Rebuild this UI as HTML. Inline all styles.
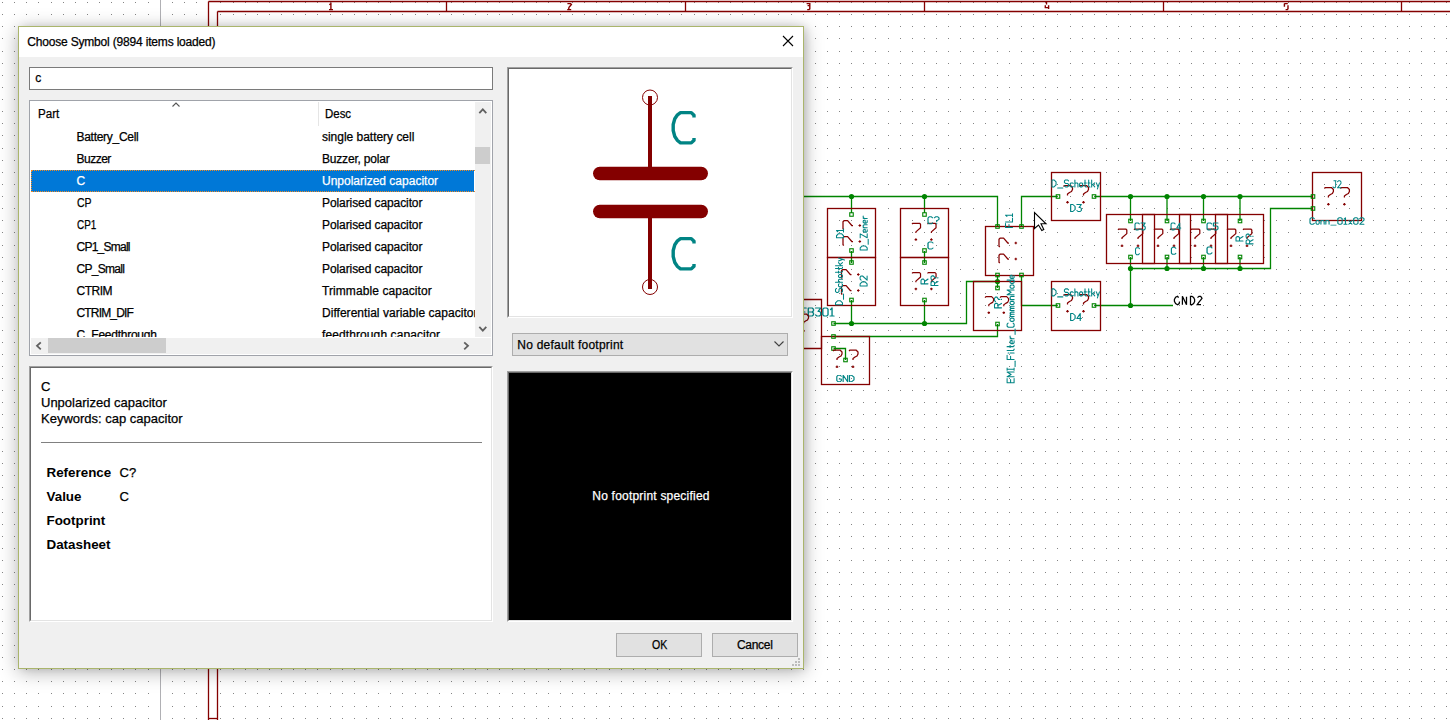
<!DOCTYPE html>
<html><head><meta charset="utf-8">
<style>
html,body{margin:0;padding:0}
body{width:1450px;height:720px;overflow:hidden;position:relative;background:#fff;font-family:"Liberation Sans",sans-serif;}
.abs{position:absolute}
#grid{position:absolute;left:0;top:0}
#sch{position:absolute;left:0;top:0}
#dlg{position:absolute;left:18px;top:26px;width:784px;height:641px;border:1px solid #aab56c;background:#f0f0f0;box-shadow:0 3px 18px rgba(0,0,0,0.30), 3px 0 8px -1px rgba(0,0,0,0.12);}
#title{position:absolute;left:0;top:0;width:784px;height:30px;background:#fff}
#ui{position:absolute;left:0;top:0;width:1450px;height:720px}
.t{position:absolute;white-space:pre;color:#000;-webkit-text-stroke:0.25px currentColor}
</style></head>
<body>
<svg id="grid" width="1450" height="720" style="position:absolute;left:0;top:0;background:#fff" shape-rendering="crispEdges"><path fill="#848484" d="M2 2h1v1h-1zm12 0h1v1h-1zm12 0h1v1h-1zm12 0h1v1h-1zm13 0h1v1h-1zm12 0h1v1h-1zm12 0h1v1h-1zm12 0h1v1h-1zm12 0h1v1h-1zm12 0h1v1h-1zm12 0h1v1h-1zm12 0h1v1h-1zm13 0h1v1h-1zm12 0h1v1h-1zm12 0h1v1h-1zm12 0h1v1h-1zm12 0h1v1h-1zm12 0h1v1h-1zm12 0h1v1h-1zm13 0h1v1h-1zm12 0h1v1h-1zm12 0h1v1h-1zm12 0h1v1h-1zm12 0h1v1h-1zm12 0h1v1h-1zm12 0h1v1h-1zm12 0h1v1h-1zm13 0h1v1h-1zm12 0h1v1h-1zm12 0h1v1h-1zm12 0h1v1h-1zm12 0h1v1h-1zm12 0h1v1h-1zm12 0h1v1h-1zm13 0h1v1h-1zm12 0h1v1h-1zm12 0h1v1h-1zm12 0h1v1h-1zm12 0h1v1h-1zm12 0h1v1h-1zm12 0h1v1h-1zm12 0h1v1h-1zm13 0h1v1h-1zm12 0h1v1h-1zm12 0h1v1h-1zm12 0h1v1h-1zm12 0h1v1h-1zm12 0h1v1h-1zm12 0h1v1h-1zm12 0h1v1h-1zm13 0h1v1h-1zm12 0h1v1h-1zm12 0h1v1h-1zm12 0h1v1h-1zm12 0h1v1h-1zm12 0h1v1h-1zm12 0h1v1h-1zm13 0h1v1h-1zm12 0h1v1h-1zm12 0h1v1h-1zm12 0h1v1h-1zm12 0h1v1h-1zm12 0h1v1h-1zm12 0h1v1h-1zm12 0h1v1h-1zm13 0h1v1h-1zm12 0h1v1h-1zm12 0h1v1h-1zm12 0h1v1h-1zm12 0h1v1h-1zm12 0h1v1h-1zm12 0h1v1h-1zm12 0h1v1h-1zm13 0h1v1h-1zm12 0h1v1h-1zm12 0h1v1h-1zm12 0h1v1h-1zm12 0h1v1h-1zm12 0h1v1h-1zm12 0h1v1h-1zm13 0h1v1h-1zm12 0h1v1h-1zm12 0h1v1h-1zm12 0h1v1h-1zm12 0h1v1h-1zm12 0h1v1h-1zm12 0h1v1h-1zm12 0h1v1h-1zm13 0h1v1h-1zm12 0h1v1h-1zm12 0h1v1h-1zm12 0h1v1h-1zm12 0h1v1h-1zm12 0h1v1h-1zm12 0h1v1h-1zm12 0h1v1h-1zm13 0h1v1h-1zm12 0h1v1h-1zm12 0h1v1h-1zm12 0h1v1h-1zm12 0h1v1h-1zm12 0h1v1h-1zm12 0h1v1h-1zm13 0h1v1h-1zm12 0h1v1h-1zm12 0h1v1h-1zm12 0h1v1h-1zm12 0h1v1h-1zm12 0h1v1h-1zm12 0h1v1h-1zm12 0h1v1h-1zm13 0h1v1h-1zm12 0h1v1h-1zm12 0h1v1h-1zm12 0h1v1h-1zm12 0h1v1h-1zm12 0h1v1h-1zm12 0h1v1h-1zm13 0h1v1h-1zm12 0h1v1h-1zM2 14h1v1h-1zm12 0h1v1h-1zm12 0h1v1h-1zm12 0h1v1h-1zm13 0h1v1h-1zm12 0h1v1h-1zm12 0h1v1h-1zm12 0h1v1h-1zm12 0h1v1h-1zm12 0h1v1h-1zm12 0h1v1h-1zm12 0h1v1h-1zm13 0h1v1h-1zm12 0h1v1h-1zm12 0h1v1h-1zm12 0h1v1h-1zm12 0h1v1h-1zm12 0h1v1h-1zm12 0h1v1h-1zm13 0h1v1h-1zm12 0h1v1h-1zm12 0h1v1h-1zm12 0h1v1h-1zm12 0h1v1h-1zm12 0h1v1h-1zm12 0h1v1h-1zm12 0h1v1h-1zm13 0h1v1h-1zm12 0h1v1h-1zm12 0h1v1h-1zm12 0h1v1h-1zm12 0h1v1h-1zm12 0h1v1h-1zm12 0h1v1h-1zm13 0h1v1h-1zm12 0h1v1h-1zm12 0h1v1h-1zm12 0h1v1h-1zm12 0h1v1h-1zm12 0h1v1h-1zm12 0h1v1h-1zm12 0h1v1h-1zm13 0h1v1h-1zm12 0h1v1h-1zm12 0h1v1h-1zm12 0h1v1h-1zm12 0h1v1h-1zm12 0h1v1h-1zm12 0h1v1h-1zm12 0h1v1h-1zm13 0h1v1h-1zm12 0h1v1h-1zm12 0h1v1h-1zm12 0h1v1h-1zm12 0h1v1h-1zm12 0h1v1h-1zm12 0h1v1h-1zm13 0h1v1h-1zm12 0h1v1h-1zm12 0h1v1h-1zm12 0h1v1h-1zm12 0h1v1h-1zm12 0h1v1h-1zm12 0h1v1h-1zm12 0h1v1h-1zm13 0h1v1h-1zm12 0h1v1h-1zm12 0h1v1h-1zm12 0h1v1h-1zm12 0h1v1h-1zm12 0h1v1h-1zm12 0h1v1h-1zm12 0h1v1h-1zm13 0h1v1h-1zm12 0h1v1h-1zm12 0h1v1h-1zm12 0h1v1h-1zm12 0h1v1h-1zm12 0h1v1h-1zm12 0h1v1h-1zm13 0h1v1h-1zm12 0h1v1h-1zm12 0h1v1h-1zm12 0h1v1h-1zm12 0h1v1h-1zm12 0h1v1h-1zm12 0h1v1h-1zm12 0h1v1h-1zm13 0h1v1h-1zm12 0h1v1h-1zm12 0h1v1h-1zm12 0h1v1h-1zm12 0h1v1h-1zm12 0h1v1h-1zm12 0h1v1h-1zm12 0h1v1h-1zm13 0h1v1h-1zm12 0h1v1h-1zm12 0h1v1h-1zm12 0h1v1h-1zm12 0h1v1h-1zm12 0h1v1h-1zm12 0h1v1h-1zm13 0h1v1h-1zm12 0h1v1h-1zm12 0h1v1h-1zm12 0h1v1h-1zm12 0h1v1h-1zm12 0h1v1h-1zm12 0h1v1h-1zm12 0h1v1h-1zm13 0h1v1h-1zm12 0h1v1h-1zm12 0h1v1h-1zm12 0h1v1h-1zm12 0h1v1h-1zm12 0h1v1h-1zm12 0h1v1h-1zm13 0h1v1h-1zm12 0h1v1h-1zM2 26h1v1h-1zm12 0h1v1h-1zm12 0h1v1h-1zm12 0h1v1h-1zm13 0h1v1h-1zm12 0h1v1h-1zm12 0h1v1h-1zm12 0h1v1h-1zm12 0h1v1h-1zm12 0h1v1h-1zm12 0h1v1h-1zm12 0h1v1h-1zm13 0h1v1h-1zm12 0h1v1h-1zm12 0h1v1h-1zm12 0h1v1h-1zm12 0h1v1h-1zm12 0h1v1h-1zm12 0h1v1h-1zm13 0h1v1h-1zm12 0h1v1h-1zm12 0h1v1h-1zm12 0h1v1h-1zm12 0h1v1h-1zm12 0h1v1h-1zm12 0h1v1h-1zm12 0h1v1h-1zm13 0h1v1h-1zm12 0h1v1h-1zm12 0h1v1h-1zm12 0h1v1h-1zm12 0h1v1h-1zm12 0h1v1h-1zm12 0h1v1h-1zm13 0h1v1h-1zm12 0h1v1h-1zm12 0h1v1h-1zm12 0h1v1h-1zm12 0h1v1h-1zm12 0h1v1h-1zm12 0h1v1h-1zm12 0h1v1h-1zm13 0h1v1h-1zm12 0h1v1h-1zm12 0h1v1h-1zm12 0h1v1h-1zm12 0h1v1h-1zm12 0h1v1h-1zm12 0h1v1h-1zm12 0h1v1h-1zm13 0h1v1h-1zm12 0h1v1h-1zm12 0h1v1h-1zm12 0h1v1h-1zm12 0h1v1h-1zm12 0h1v1h-1zm12 0h1v1h-1zm13 0h1v1h-1zm12 0h1v1h-1zm12 0h1v1h-1zm12 0h1v1h-1zm12 0h1v1h-1zm12 0h1v1h-1zm12 0h1v1h-1zm12 0h1v1h-1zm13 0h1v1h-1zm12 0h1v1h-1zm12 0h1v1h-1zm12 0h1v1h-1zm12 0h1v1h-1zm12 0h1v1h-1zm12 0h1v1h-1zm12 0h1v1h-1zm13 0h1v1h-1zm12 0h1v1h-1zm12 0h1v1h-1zm12 0h1v1h-1zm12 0h1v1h-1zm12 0h1v1h-1zm12 0h1v1h-1zm13 0h1v1h-1zm12 0h1v1h-1zm12 0h1v1h-1zm12 0h1v1h-1zm12 0h1v1h-1zm12 0h1v1h-1zm12 0h1v1h-1zm12 0h1v1h-1zm13 0h1v1h-1zm12 0h1v1h-1zm12 0h1v1h-1zm12 0h1v1h-1zm12 0h1v1h-1zm12 0h1v1h-1zm12 0h1v1h-1zm12 0h1v1h-1zm13 0h1v1h-1zm12 0h1v1h-1zm12 0h1v1h-1zm12 0h1v1h-1zm12 0h1v1h-1zm12 0h1v1h-1zm12 0h1v1h-1zm13 0h1v1h-1zm12 0h1v1h-1zm12 0h1v1h-1zm12 0h1v1h-1zm12 0h1v1h-1zm12 0h1v1h-1zm12 0h1v1h-1zm12 0h1v1h-1zm13 0h1v1h-1zm12 0h1v1h-1zm12 0h1v1h-1zm12 0h1v1h-1zm12 0h1v1h-1zm12 0h1v1h-1zm12 0h1v1h-1zm13 0h1v1h-1zm12 0h1v1h-1zM2 38h1v1h-1zm12 0h1v1h-1zm12 0h1v1h-1zm12 0h1v1h-1zm13 0h1v1h-1zm12 0h1v1h-1zm12 0h1v1h-1zm12 0h1v1h-1zm12 0h1v1h-1zm12 0h1v1h-1zm12 0h1v1h-1zm12 0h1v1h-1zm13 0h1v1h-1zm12 0h1v1h-1zm12 0h1v1h-1zm12 0h1v1h-1zm12 0h1v1h-1zm12 0h1v1h-1zm12 0h1v1h-1zm13 0h1v1h-1zm12 0h1v1h-1zm12 0h1v1h-1zm12 0h1v1h-1zm12 0h1v1h-1zm12 0h1v1h-1zm12 0h1v1h-1zm12 0h1v1h-1zm13 0h1v1h-1zm12 0h1v1h-1zm12 0h1v1h-1zm12 0h1v1h-1zm12 0h1v1h-1zm12 0h1v1h-1zm12 0h1v1h-1zm13 0h1v1h-1zm12 0h1v1h-1zm12 0h1v1h-1zm12 0h1v1h-1zm12 0h1v1h-1zm12 0h1v1h-1zm12 0h1v1h-1zm12 0h1v1h-1zm13 0h1v1h-1zm12 0h1v1h-1zm12 0h1v1h-1zm12 0h1v1h-1zm12 0h1v1h-1zm12 0h1v1h-1zm12 0h1v1h-1zm12 0h1v1h-1zm13 0h1v1h-1zm12 0h1v1h-1zm12 0h1v1h-1zm12 0h1v1h-1zm12 0h1v1h-1zm12 0h1v1h-1zm12 0h1v1h-1zm13 0h1v1h-1zm12 0h1v1h-1zm12 0h1v1h-1zm12 0h1v1h-1zm12 0h1v1h-1zm12 0h1v1h-1zm12 0h1v1h-1zm12 0h1v1h-1zm13 0h1v1h-1zm12 0h1v1h-1zm12 0h1v1h-1zm12 0h1v1h-1zm12 0h1v1h-1zm12 0h1v1h-1zm12 0h1v1h-1zm12 0h1v1h-1zm13 0h1v1h-1zm12 0h1v1h-1zm12 0h1v1h-1zm12 0h1v1h-1zm12 0h1v1h-1zm12 0h1v1h-1zm12 0h1v1h-1zm13 0h1v1h-1zm12 0h1v1h-1zm12 0h1v1h-1zm12 0h1v1h-1zm12 0h1v1h-1zm12 0h1v1h-1zm12 0h1v1h-1zm12 0h1v1h-1zm13 0h1v1h-1zm12 0h1v1h-1zm12 0h1v1h-1zm12 0h1v1h-1zm12 0h1v1h-1zm12 0h1v1h-1zm12 0h1v1h-1zm12 0h1v1h-1zm13 0h1v1h-1zm12 0h1v1h-1zm12 0h1v1h-1zm12 0h1v1h-1zm12 0h1v1h-1zm12 0h1v1h-1zm12 0h1v1h-1zm13 0h1v1h-1zm12 0h1v1h-1zm12 0h1v1h-1zm12 0h1v1h-1zm12 0h1v1h-1zm12 0h1v1h-1zm12 0h1v1h-1zm12 0h1v1h-1zm13 0h1v1h-1zm12 0h1v1h-1zm12 0h1v1h-1zm12 0h1v1h-1zm12 0h1v1h-1zm12 0h1v1h-1zm12 0h1v1h-1zm13 0h1v1h-1zm12 0h1v1h-1zM2 51h1v1h-1zm12 0h1v1h-1zm12 0h1v1h-1zm12 0h1v1h-1zm13 0h1v1h-1zm12 0h1v1h-1zm12 0h1v1h-1zm12 0h1v1h-1zm12 0h1v1h-1zm12 0h1v1h-1zm12 0h1v1h-1zm12 0h1v1h-1zm13 0h1v1h-1zm12 0h1v1h-1zm12 0h1v1h-1zm12 0h1v1h-1zm12 0h1v1h-1zm12 0h1v1h-1zm12 0h1v1h-1zm13 0h1v1h-1zm12 0h1v1h-1zm12 0h1v1h-1zm12 0h1v1h-1zm12 0h1v1h-1zm12 0h1v1h-1zm12 0h1v1h-1zm12 0h1v1h-1zm13 0h1v1h-1zm12 0h1v1h-1zm12 0h1v1h-1zm12 0h1v1h-1zm12 0h1v1h-1zm12 0h1v1h-1zm12 0h1v1h-1zm13 0h1v1h-1zm12 0h1v1h-1zm12 0h1v1h-1zm12 0h1v1h-1zm12 0h1v1h-1zm12 0h1v1h-1zm12 0h1v1h-1zm12 0h1v1h-1zm13 0h1v1h-1zm12 0h1v1h-1zm12 0h1v1h-1zm12 0h1v1h-1zm12 0h1v1h-1zm12 0h1v1h-1zm12 0h1v1h-1zm12 0h1v1h-1zm13 0h1v1h-1zm12 0h1v1h-1zm12 0h1v1h-1zm12 0h1v1h-1zm12 0h1v1h-1zm12 0h1v1h-1zm12 0h1v1h-1zm13 0h1v1h-1zm12 0h1v1h-1zm12 0h1v1h-1zm12 0h1v1h-1zm12 0h1v1h-1zm12 0h1v1h-1zm12 0h1v1h-1zm12 0h1v1h-1zm13 0h1v1h-1zm12 0h1v1h-1zm12 0h1v1h-1zm12 0h1v1h-1zm12 0h1v1h-1zm12 0h1v1h-1zm12 0h1v1h-1zm12 0h1v1h-1zm13 0h1v1h-1zm12 0h1v1h-1zm12 0h1v1h-1zm12 0h1v1h-1zm12 0h1v1h-1zm12 0h1v1h-1zm12 0h1v1h-1zm13 0h1v1h-1zm12 0h1v1h-1zm12 0h1v1h-1zm12 0h1v1h-1zm12 0h1v1h-1zm12 0h1v1h-1zm12 0h1v1h-1zm12 0h1v1h-1zm13 0h1v1h-1zm12 0h1v1h-1zm12 0h1v1h-1zm12 0h1v1h-1zm12 0h1v1h-1zm12 0h1v1h-1zm12 0h1v1h-1zm12 0h1v1h-1zm13 0h1v1h-1zm12 0h1v1h-1zm12 0h1v1h-1zm12 0h1v1h-1zm12 0h1v1h-1zm12 0h1v1h-1zm12 0h1v1h-1zm13 0h1v1h-1zm12 0h1v1h-1zm12 0h1v1h-1zm12 0h1v1h-1zm12 0h1v1h-1zm12 0h1v1h-1zm12 0h1v1h-1zm12 0h1v1h-1zm13 0h1v1h-1zm12 0h1v1h-1zm12 0h1v1h-1zm12 0h1v1h-1zm12 0h1v1h-1zm12 0h1v1h-1zm12 0h1v1h-1zm13 0h1v1h-1zm12 0h1v1h-1zM2 63h1v1h-1zm12 0h1v1h-1zm12 0h1v1h-1zm12 0h1v1h-1zm13 0h1v1h-1zm12 0h1v1h-1zm12 0h1v1h-1zm12 0h1v1h-1zm12 0h1v1h-1zm12 0h1v1h-1zm12 0h1v1h-1zm12 0h1v1h-1zm13 0h1v1h-1zm12 0h1v1h-1zm12 0h1v1h-1zm12 0h1v1h-1zm12 0h1v1h-1zm12 0h1v1h-1zm12 0h1v1h-1zm13 0h1v1h-1zm12 0h1v1h-1zm12 0h1v1h-1zm12 0h1v1h-1zm12 0h1v1h-1zm12 0h1v1h-1zm12 0h1v1h-1zm12 0h1v1h-1zm13 0h1v1h-1zm12 0h1v1h-1zm12 0h1v1h-1zm12 0h1v1h-1zm12 0h1v1h-1zm12 0h1v1h-1zm12 0h1v1h-1zm13 0h1v1h-1zm12 0h1v1h-1zm12 0h1v1h-1zm12 0h1v1h-1zm12 0h1v1h-1zm12 0h1v1h-1zm12 0h1v1h-1zm12 0h1v1h-1zm13 0h1v1h-1zm12 0h1v1h-1zm12 0h1v1h-1zm12 0h1v1h-1zm12 0h1v1h-1zm12 0h1v1h-1zm12 0h1v1h-1zm12 0h1v1h-1zm13 0h1v1h-1zm12 0h1v1h-1zm12 0h1v1h-1zm12 0h1v1h-1zm12 0h1v1h-1zm12 0h1v1h-1zm12 0h1v1h-1zm13 0h1v1h-1zm12 0h1v1h-1zm12 0h1v1h-1zm12 0h1v1h-1zm12 0h1v1h-1zm12 0h1v1h-1zm12 0h1v1h-1zm12 0h1v1h-1zm13 0h1v1h-1zm12 0h1v1h-1zm12 0h1v1h-1zm12 0h1v1h-1zm12 0h1v1h-1zm12 0h1v1h-1zm12 0h1v1h-1zm12 0h1v1h-1zm13 0h1v1h-1zm12 0h1v1h-1zm12 0h1v1h-1zm12 0h1v1h-1zm12 0h1v1h-1zm12 0h1v1h-1zm12 0h1v1h-1zm13 0h1v1h-1zm12 0h1v1h-1zm12 0h1v1h-1zm12 0h1v1h-1zm12 0h1v1h-1zm12 0h1v1h-1zm12 0h1v1h-1zm12 0h1v1h-1zm13 0h1v1h-1zm12 0h1v1h-1zm12 0h1v1h-1zm12 0h1v1h-1zm12 0h1v1h-1zm12 0h1v1h-1zm12 0h1v1h-1zm12 0h1v1h-1zm13 0h1v1h-1zm12 0h1v1h-1zm12 0h1v1h-1zm12 0h1v1h-1zm12 0h1v1h-1zm12 0h1v1h-1zm12 0h1v1h-1zm13 0h1v1h-1zm12 0h1v1h-1zm12 0h1v1h-1zm12 0h1v1h-1zm12 0h1v1h-1zm12 0h1v1h-1zm12 0h1v1h-1zm12 0h1v1h-1zm13 0h1v1h-1zm12 0h1v1h-1zm12 0h1v1h-1zm12 0h1v1h-1zm12 0h1v1h-1zm12 0h1v1h-1zm12 0h1v1h-1zm13 0h1v1h-1zm12 0h1v1h-1zM2 75h1v1h-1zm12 0h1v1h-1zm12 0h1v1h-1zm12 0h1v1h-1zm13 0h1v1h-1zm12 0h1v1h-1zm12 0h1v1h-1zm12 0h1v1h-1zm12 0h1v1h-1zm12 0h1v1h-1zm12 0h1v1h-1zm12 0h1v1h-1zm13 0h1v1h-1zm12 0h1v1h-1zm12 0h1v1h-1zm12 0h1v1h-1zm12 0h1v1h-1zm12 0h1v1h-1zm12 0h1v1h-1zm13 0h1v1h-1zm12 0h1v1h-1zm12 0h1v1h-1zm12 0h1v1h-1zm12 0h1v1h-1zm12 0h1v1h-1zm12 0h1v1h-1zm12 0h1v1h-1zm13 0h1v1h-1zm12 0h1v1h-1zm12 0h1v1h-1zm12 0h1v1h-1zm12 0h1v1h-1zm12 0h1v1h-1zm12 0h1v1h-1zm13 0h1v1h-1zm12 0h1v1h-1zm12 0h1v1h-1zm12 0h1v1h-1zm12 0h1v1h-1zm12 0h1v1h-1zm12 0h1v1h-1zm12 0h1v1h-1zm13 0h1v1h-1zm12 0h1v1h-1zm12 0h1v1h-1zm12 0h1v1h-1zm12 0h1v1h-1zm12 0h1v1h-1zm12 0h1v1h-1zm12 0h1v1h-1zm13 0h1v1h-1zm12 0h1v1h-1zm12 0h1v1h-1zm12 0h1v1h-1zm12 0h1v1h-1zm12 0h1v1h-1zm12 0h1v1h-1zm13 0h1v1h-1zm12 0h1v1h-1zm12 0h1v1h-1zm12 0h1v1h-1zm12 0h1v1h-1zm12 0h1v1h-1zm12 0h1v1h-1zm12 0h1v1h-1zm13 0h1v1h-1zm12 0h1v1h-1zm12 0h1v1h-1zm12 0h1v1h-1zm12 0h1v1h-1zm12 0h1v1h-1zm12 0h1v1h-1zm12 0h1v1h-1zm13 0h1v1h-1zm12 0h1v1h-1zm12 0h1v1h-1zm12 0h1v1h-1zm12 0h1v1h-1zm12 0h1v1h-1zm12 0h1v1h-1zm13 0h1v1h-1zm12 0h1v1h-1zm12 0h1v1h-1zm12 0h1v1h-1zm12 0h1v1h-1zm12 0h1v1h-1zm12 0h1v1h-1zm12 0h1v1h-1zm13 0h1v1h-1zm12 0h1v1h-1zm12 0h1v1h-1zm12 0h1v1h-1zm12 0h1v1h-1zm12 0h1v1h-1zm12 0h1v1h-1zm12 0h1v1h-1zm13 0h1v1h-1zm12 0h1v1h-1zm12 0h1v1h-1zm12 0h1v1h-1zm12 0h1v1h-1zm12 0h1v1h-1zm12 0h1v1h-1zm13 0h1v1h-1zm12 0h1v1h-1zm12 0h1v1h-1zm12 0h1v1h-1zm12 0h1v1h-1zm12 0h1v1h-1zm12 0h1v1h-1zm12 0h1v1h-1zm13 0h1v1h-1zm12 0h1v1h-1zm12 0h1v1h-1zm12 0h1v1h-1zm12 0h1v1h-1zm12 0h1v1h-1zm12 0h1v1h-1zm13 0h1v1h-1zm12 0h1v1h-1zM2 87h1v1h-1zm12 0h1v1h-1zm12 0h1v1h-1zm12 0h1v1h-1zm13 0h1v1h-1zm12 0h1v1h-1zm12 0h1v1h-1zm12 0h1v1h-1zm12 0h1v1h-1zm12 0h1v1h-1zm12 0h1v1h-1zm12 0h1v1h-1zm13 0h1v1h-1zm12 0h1v1h-1zm12 0h1v1h-1zm12 0h1v1h-1zm12 0h1v1h-1zm12 0h1v1h-1zm12 0h1v1h-1zm13 0h1v1h-1zm12 0h1v1h-1zm12 0h1v1h-1zm12 0h1v1h-1zm12 0h1v1h-1zm12 0h1v1h-1zm12 0h1v1h-1zm12 0h1v1h-1zm13 0h1v1h-1zm12 0h1v1h-1zm12 0h1v1h-1zm12 0h1v1h-1zm12 0h1v1h-1zm12 0h1v1h-1zm12 0h1v1h-1zm13 0h1v1h-1zm12 0h1v1h-1zm12 0h1v1h-1zm12 0h1v1h-1zm12 0h1v1h-1zm12 0h1v1h-1zm12 0h1v1h-1zm12 0h1v1h-1zm13 0h1v1h-1zm12 0h1v1h-1zm12 0h1v1h-1zm12 0h1v1h-1zm12 0h1v1h-1zm12 0h1v1h-1zm12 0h1v1h-1zm12 0h1v1h-1zm13 0h1v1h-1zm12 0h1v1h-1zm12 0h1v1h-1zm12 0h1v1h-1zm12 0h1v1h-1zm12 0h1v1h-1zm12 0h1v1h-1zm13 0h1v1h-1zm12 0h1v1h-1zm12 0h1v1h-1zm12 0h1v1h-1zm12 0h1v1h-1zm12 0h1v1h-1zm12 0h1v1h-1zm12 0h1v1h-1zm13 0h1v1h-1zm12 0h1v1h-1zm12 0h1v1h-1zm12 0h1v1h-1zm12 0h1v1h-1zm12 0h1v1h-1zm12 0h1v1h-1zm12 0h1v1h-1zm13 0h1v1h-1zm12 0h1v1h-1zm12 0h1v1h-1zm12 0h1v1h-1zm12 0h1v1h-1zm12 0h1v1h-1zm12 0h1v1h-1zm13 0h1v1h-1zm12 0h1v1h-1zm12 0h1v1h-1zm12 0h1v1h-1zm12 0h1v1h-1zm12 0h1v1h-1zm12 0h1v1h-1zm12 0h1v1h-1zm13 0h1v1h-1zm12 0h1v1h-1zm12 0h1v1h-1zm12 0h1v1h-1zm12 0h1v1h-1zm12 0h1v1h-1zm12 0h1v1h-1zm12 0h1v1h-1zm13 0h1v1h-1zm12 0h1v1h-1zm12 0h1v1h-1zm12 0h1v1h-1zm12 0h1v1h-1zm12 0h1v1h-1zm12 0h1v1h-1zm13 0h1v1h-1zm12 0h1v1h-1zm12 0h1v1h-1zm12 0h1v1h-1zm12 0h1v1h-1zm12 0h1v1h-1zm12 0h1v1h-1zm12 0h1v1h-1zm13 0h1v1h-1zm12 0h1v1h-1zm12 0h1v1h-1zm12 0h1v1h-1zm12 0h1v1h-1zm12 0h1v1h-1zm12 0h1v1h-1zm13 0h1v1h-1zm12 0h1v1h-1zM2 99h1v1h-1zm12 0h1v1h-1zm12 0h1v1h-1zm12 0h1v1h-1zm13 0h1v1h-1zm12 0h1v1h-1zm12 0h1v1h-1zm12 0h1v1h-1zm12 0h1v1h-1zm12 0h1v1h-1zm12 0h1v1h-1zm12 0h1v1h-1zm13 0h1v1h-1zm12 0h1v1h-1zm12 0h1v1h-1zm12 0h1v1h-1zm12 0h1v1h-1zm12 0h1v1h-1zm12 0h1v1h-1zm13 0h1v1h-1zm12 0h1v1h-1zm12 0h1v1h-1zm12 0h1v1h-1zm12 0h1v1h-1zm12 0h1v1h-1zm12 0h1v1h-1zm12 0h1v1h-1zm13 0h1v1h-1zm12 0h1v1h-1zm12 0h1v1h-1zm12 0h1v1h-1zm12 0h1v1h-1zm12 0h1v1h-1zm12 0h1v1h-1zm13 0h1v1h-1zm12 0h1v1h-1zm12 0h1v1h-1zm12 0h1v1h-1zm12 0h1v1h-1zm12 0h1v1h-1zm12 0h1v1h-1zm12 0h1v1h-1zm13 0h1v1h-1zm12 0h1v1h-1zm12 0h1v1h-1zm12 0h1v1h-1zm12 0h1v1h-1zm12 0h1v1h-1zm12 0h1v1h-1zm12 0h1v1h-1zm13 0h1v1h-1zm12 0h1v1h-1zm12 0h1v1h-1zm12 0h1v1h-1zm12 0h1v1h-1zm12 0h1v1h-1zm12 0h1v1h-1zm13 0h1v1h-1zm12 0h1v1h-1zm12 0h1v1h-1zm12 0h1v1h-1zm12 0h1v1h-1zm12 0h1v1h-1zm12 0h1v1h-1zm12 0h1v1h-1zm13 0h1v1h-1zm12 0h1v1h-1zm12 0h1v1h-1zm12 0h1v1h-1zm12 0h1v1h-1zm12 0h1v1h-1zm12 0h1v1h-1zm12 0h1v1h-1zm13 0h1v1h-1zm12 0h1v1h-1zm12 0h1v1h-1zm12 0h1v1h-1zm12 0h1v1h-1zm12 0h1v1h-1zm12 0h1v1h-1zm13 0h1v1h-1zm12 0h1v1h-1zm12 0h1v1h-1zm12 0h1v1h-1zm12 0h1v1h-1zm12 0h1v1h-1zm12 0h1v1h-1zm12 0h1v1h-1zm13 0h1v1h-1zm12 0h1v1h-1zm12 0h1v1h-1zm12 0h1v1h-1zm12 0h1v1h-1zm12 0h1v1h-1zm12 0h1v1h-1zm12 0h1v1h-1zm13 0h1v1h-1zm12 0h1v1h-1zm12 0h1v1h-1zm12 0h1v1h-1zm12 0h1v1h-1zm12 0h1v1h-1zm12 0h1v1h-1zm13 0h1v1h-1zm12 0h1v1h-1zm12 0h1v1h-1zm12 0h1v1h-1zm12 0h1v1h-1zm12 0h1v1h-1zm12 0h1v1h-1zm12 0h1v1h-1zm13 0h1v1h-1zm12 0h1v1h-1zm12 0h1v1h-1zm12 0h1v1h-1zm12 0h1v1h-1zm12 0h1v1h-1zm12 0h1v1h-1zm13 0h1v1h-1zm12 0h1v1h-1zM2 111h1v1h-1zm12 0h1v1h-1zm12 0h1v1h-1zm12 0h1v1h-1zm13 0h1v1h-1zm12 0h1v1h-1zm12 0h1v1h-1zm12 0h1v1h-1zm12 0h1v1h-1zm12 0h1v1h-1zm12 0h1v1h-1zm12 0h1v1h-1zm13 0h1v1h-1zm12 0h1v1h-1zm12 0h1v1h-1zm12 0h1v1h-1zm12 0h1v1h-1zm12 0h1v1h-1zm12 0h1v1h-1zm13 0h1v1h-1zm12 0h1v1h-1zm12 0h1v1h-1zm12 0h1v1h-1zm12 0h1v1h-1zm12 0h1v1h-1zm12 0h1v1h-1zm12 0h1v1h-1zm13 0h1v1h-1zm12 0h1v1h-1zm12 0h1v1h-1zm12 0h1v1h-1zm12 0h1v1h-1zm12 0h1v1h-1zm12 0h1v1h-1zm13 0h1v1h-1zm12 0h1v1h-1zm12 0h1v1h-1zm12 0h1v1h-1zm12 0h1v1h-1zm12 0h1v1h-1zm12 0h1v1h-1zm12 0h1v1h-1zm13 0h1v1h-1zm12 0h1v1h-1zm12 0h1v1h-1zm12 0h1v1h-1zm12 0h1v1h-1zm12 0h1v1h-1zm12 0h1v1h-1zm12 0h1v1h-1zm13 0h1v1h-1zm12 0h1v1h-1zm12 0h1v1h-1zm12 0h1v1h-1zm12 0h1v1h-1zm12 0h1v1h-1zm12 0h1v1h-1zm13 0h1v1h-1zm12 0h1v1h-1zm12 0h1v1h-1zm12 0h1v1h-1zm12 0h1v1h-1zm12 0h1v1h-1zm12 0h1v1h-1zm12 0h1v1h-1zm13 0h1v1h-1zm12 0h1v1h-1zm12 0h1v1h-1zm12 0h1v1h-1zm12 0h1v1h-1zm12 0h1v1h-1zm12 0h1v1h-1zm12 0h1v1h-1zm13 0h1v1h-1zm12 0h1v1h-1zm12 0h1v1h-1zm12 0h1v1h-1zm12 0h1v1h-1zm12 0h1v1h-1zm12 0h1v1h-1zm13 0h1v1h-1zm12 0h1v1h-1zm12 0h1v1h-1zm12 0h1v1h-1zm12 0h1v1h-1zm12 0h1v1h-1zm12 0h1v1h-1zm12 0h1v1h-1zm13 0h1v1h-1zm12 0h1v1h-1zm12 0h1v1h-1zm12 0h1v1h-1zm12 0h1v1h-1zm12 0h1v1h-1zm12 0h1v1h-1zm12 0h1v1h-1zm13 0h1v1h-1zm12 0h1v1h-1zm12 0h1v1h-1zm12 0h1v1h-1zm12 0h1v1h-1zm12 0h1v1h-1zm12 0h1v1h-1zm13 0h1v1h-1zm12 0h1v1h-1zm12 0h1v1h-1zm12 0h1v1h-1zm12 0h1v1h-1zm12 0h1v1h-1zm12 0h1v1h-1zm12 0h1v1h-1zm13 0h1v1h-1zm12 0h1v1h-1zm12 0h1v1h-1zm12 0h1v1h-1zm12 0h1v1h-1zm12 0h1v1h-1zm12 0h1v1h-1zm13 0h1v1h-1zm12 0h1v1h-1zM2 123h1v1h-1zm12 0h1v1h-1zm12 0h1v1h-1zm12 0h1v1h-1zm13 0h1v1h-1zm12 0h1v1h-1zm12 0h1v1h-1zm12 0h1v1h-1zm12 0h1v1h-1zm12 0h1v1h-1zm12 0h1v1h-1zm12 0h1v1h-1zm13 0h1v1h-1zm12 0h1v1h-1zm12 0h1v1h-1zm12 0h1v1h-1zm12 0h1v1h-1zm12 0h1v1h-1zm12 0h1v1h-1zm13 0h1v1h-1zm12 0h1v1h-1zm12 0h1v1h-1zm12 0h1v1h-1zm12 0h1v1h-1zm12 0h1v1h-1zm12 0h1v1h-1zm12 0h1v1h-1zm13 0h1v1h-1zm12 0h1v1h-1zm12 0h1v1h-1zm12 0h1v1h-1zm12 0h1v1h-1zm12 0h1v1h-1zm12 0h1v1h-1zm13 0h1v1h-1zm12 0h1v1h-1zm12 0h1v1h-1zm12 0h1v1h-1zm12 0h1v1h-1zm12 0h1v1h-1zm12 0h1v1h-1zm12 0h1v1h-1zm13 0h1v1h-1zm12 0h1v1h-1zm12 0h1v1h-1zm12 0h1v1h-1zm12 0h1v1h-1zm12 0h1v1h-1zm12 0h1v1h-1zm12 0h1v1h-1zm13 0h1v1h-1zm12 0h1v1h-1zm12 0h1v1h-1zm12 0h1v1h-1zm12 0h1v1h-1zm12 0h1v1h-1zm12 0h1v1h-1zm13 0h1v1h-1zm12 0h1v1h-1zm12 0h1v1h-1zm12 0h1v1h-1zm12 0h1v1h-1zm12 0h1v1h-1zm12 0h1v1h-1zm12 0h1v1h-1zm13 0h1v1h-1zm12 0h1v1h-1zm12 0h1v1h-1zm12 0h1v1h-1zm12 0h1v1h-1zm12 0h1v1h-1zm12 0h1v1h-1zm12 0h1v1h-1zm13 0h1v1h-1zm12 0h1v1h-1zm12 0h1v1h-1zm12 0h1v1h-1zm12 0h1v1h-1zm12 0h1v1h-1zm12 0h1v1h-1zm13 0h1v1h-1zm12 0h1v1h-1zm12 0h1v1h-1zm12 0h1v1h-1zm12 0h1v1h-1zm12 0h1v1h-1zm12 0h1v1h-1zm12 0h1v1h-1zm13 0h1v1h-1zm12 0h1v1h-1zm12 0h1v1h-1zm12 0h1v1h-1zm12 0h1v1h-1zm12 0h1v1h-1zm12 0h1v1h-1zm12 0h1v1h-1zm13 0h1v1h-1zm12 0h1v1h-1zm12 0h1v1h-1zm12 0h1v1h-1zm12 0h1v1h-1zm12 0h1v1h-1zm12 0h1v1h-1zm13 0h1v1h-1zm12 0h1v1h-1zm12 0h1v1h-1zm12 0h1v1h-1zm12 0h1v1h-1zm12 0h1v1h-1zm12 0h1v1h-1zm12 0h1v1h-1zm13 0h1v1h-1zm12 0h1v1h-1zm12 0h1v1h-1zm12 0h1v1h-1zm12 0h1v1h-1zm12 0h1v1h-1zm12 0h1v1h-1zm13 0h1v1h-1zm12 0h1v1h-1zM2 135h1v1h-1zm12 0h1v1h-1zm12 0h1v1h-1zm12 0h1v1h-1zm13 0h1v1h-1zm12 0h1v1h-1zm12 0h1v1h-1zm12 0h1v1h-1zm12 0h1v1h-1zm12 0h1v1h-1zm12 0h1v1h-1zm12 0h1v1h-1zm13 0h1v1h-1zm12 0h1v1h-1zm12 0h1v1h-1zm12 0h1v1h-1zm12 0h1v1h-1zm12 0h1v1h-1zm12 0h1v1h-1zm13 0h1v1h-1zm12 0h1v1h-1zm12 0h1v1h-1zm12 0h1v1h-1zm12 0h1v1h-1zm12 0h1v1h-1zm12 0h1v1h-1zm12 0h1v1h-1zm13 0h1v1h-1zm12 0h1v1h-1zm12 0h1v1h-1zm12 0h1v1h-1zm12 0h1v1h-1zm12 0h1v1h-1zm12 0h1v1h-1zm13 0h1v1h-1zm12 0h1v1h-1zm12 0h1v1h-1zm12 0h1v1h-1zm12 0h1v1h-1zm12 0h1v1h-1zm12 0h1v1h-1zm12 0h1v1h-1zm13 0h1v1h-1zm12 0h1v1h-1zm12 0h1v1h-1zm12 0h1v1h-1zm12 0h1v1h-1zm12 0h1v1h-1zm12 0h1v1h-1zm12 0h1v1h-1zm13 0h1v1h-1zm12 0h1v1h-1zm12 0h1v1h-1zm12 0h1v1h-1zm12 0h1v1h-1zm12 0h1v1h-1zm12 0h1v1h-1zm13 0h1v1h-1zm12 0h1v1h-1zm12 0h1v1h-1zm12 0h1v1h-1zm12 0h1v1h-1zm12 0h1v1h-1zm12 0h1v1h-1zm12 0h1v1h-1zm13 0h1v1h-1zm12 0h1v1h-1zm12 0h1v1h-1zm12 0h1v1h-1zm12 0h1v1h-1zm12 0h1v1h-1zm12 0h1v1h-1zm12 0h1v1h-1zm13 0h1v1h-1zm12 0h1v1h-1zm12 0h1v1h-1zm12 0h1v1h-1zm12 0h1v1h-1zm12 0h1v1h-1zm12 0h1v1h-1zm13 0h1v1h-1zm12 0h1v1h-1zm12 0h1v1h-1zm12 0h1v1h-1zm12 0h1v1h-1zm12 0h1v1h-1zm12 0h1v1h-1zm12 0h1v1h-1zm13 0h1v1h-1zm12 0h1v1h-1zm12 0h1v1h-1zm12 0h1v1h-1zm12 0h1v1h-1zm12 0h1v1h-1zm12 0h1v1h-1zm12 0h1v1h-1zm13 0h1v1h-1zm12 0h1v1h-1zm12 0h1v1h-1zm12 0h1v1h-1zm12 0h1v1h-1zm12 0h1v1h-1zm12 0h1v1h-1zm13 0h1v1h-1zm12 0h1v1h-1zm12 0h1v1h-1zm12 0h1v1h-1zm12 0h1v1h-1zm12 0h1v1h-1zm12 0h1v1h-1zm12 0h1v1h-1zm13 0h1v1h-1zm12 0h1v1h-1zm12 0h1v1h-1zm12 0h1v1h-1zm12 0h1v1h-1zm12 0h1v1h-1zm12 0h1v1h-1zm13 0h1v1h-1zm12 0h1v1h-1zM2 148h1v1h-1zm12 0h1v1h-1zm12 0h1v1h-1zm12 0h1v1h-1zm13 0h1v1h-1zm12 0h1v1h-1zm12 0h1v1h-1zm12 0h1v1h-1zm12 0h1v1h-1zm12 0h1v1h-1zm12 0h1v1h-1zm12 0h1v1h-1zm13 0h1v1h-1zm12 0h1v1h-1zm12 0h1v1h-1zm12 0h1v1h-1zm12 0h1v1h-1zm12 0h1v1h-1zm12 0h1v1h-1zm13 0h1v1h-1zm12 0h1v1h-1zm12 0h1v1h-1zm12 0h1v1h-1zm12 0h1v1h-1zm12 0h1v1h-1zm12 0h1v1h-1zm12 0h1v1h-1zm13 0h1v1h-1zm12 0h1v1h-1zm12 0h1v1h-1zm12 0h1v1h-1zm12 0h1v1h-1zm12 0h1v1h-1zm12 0h1v1h-1zm13 0h1v1h-1zm12 0h1v1h-1zm12 0h1v1h-1zm12 0h1v1h-1zm12 0h1v1h-1zm12 0h1v1h-1zm12 0h1v1h-1zm12 0h1v1h-1zm13 0h1v1h-1zm12 0h1v1h-1zm12 0h1v1h-1zm12 0h1v1h-1zm12 0h1v1h-1zm12 0h1v1h-1zm12 0h1v1h-1zm12 0h1v1h-1zm13 0h1v1h-1zm12 0h1v1h-1zm12 0h1v1h-1zm12 0h1v1h-1zm12 0h1v1h-1zm12 0h1v1h-1zm12 0h1v1h-1zm13 0h1v1h-1zm12 0h1v1h-1zm12 0h1v1h-1zm12 0h1v1h-1zm12 0h1v1h-1zm12 0h1v1h-1zm12 0h1v1h-1zm12 0h1v1h-1zm13 0h1v1h-1zm12 0h1v1h-1zm12 0h1v1h-1zm12 0h1v1h-1zm12 0h1v1h-1zm12 0h1v1h-1zm12 0h1v1h-1zm12 0h1v1h-1zm13 0h1v1h-1zm12 0h1v1h-1zm12 0h1v1h-1zm12 0h1v1h-1zm12 0h1v1h-1zm12 0h1v1h-1zm12 0h1v1h-1zm13 0h1v1h-1zm12 0h1v1h-1zm12 0h1v1h-1zm12 0h1v1h-1zm12 0h1v1h-1zm12 0h1v1h-1zm12 0h1v1h-1zm12 0h1v1h-1zm13 0h1v1h-1zm12 0h1v1h-1zm12 0h1v1h-1zm12 0h1v1h-1zm12 0h1v1h-1zm12 0h1v1h-1zm12 0h1v1h-1zm12 0h1v1h-1zm13 0h1v1h-1zm12 0h1v1h-1zm12 0h1v1h-1zm12 0h1v1h-1zm12 0h1v1h-1zm12 0h1v1h-1zm12 0h1v1h-1zm13 0h1v1h-1zm12 0h1v1h-1zm12 0h1v1h-1zm12 0h1v1h-1zm12 0h1v1h-1zm12 0h1v1h-1zm12 0h1v1h-1zm12 0h1v1h-1zm13 0h1v1h-1zm12 0h1v1h-1zm12 0h1v1h-1zm12 0h1v1h-1zm12 0h1v1h-1zm12 0h1v1h-1zm12 0h1v1h-1zm13 0h1v1h-1zm12 0h1v1h-1zM2 160h1v1h-1zm12 0h1v1h-1zm12 0h1v1h-1zm12 0h1v1h-1zm13 0h1v1h-1zm12 0h1v1h-1zm12 0h1v1h-1zm12 0h1v1h-1zm12 0h1v1h-1zm12 0h1v1h-1zm12 0h1v1h-1zm12 0h1v1h-1zm13 0h1v1h-1zm12 0h1v1h-1zm12 0h1v1h-1zm12 0h1v1h-1zm12 0h1v1h-1zm12 0h1v1h-1zm12 0h1v1h-1zm13 0h1v1h-1zm12 0h1v1h-1zm12 0h1v1h-1zm12 0h1v1h-1zm12 0h1v1h-1zm12 0h1v1h-1zm12 0h1v1h-1zm12 0h1v1h-1zm13 0h1v1h-1zm12 0h1v1h-1zm12 0h1v1h-1zm12 0h1v1h-1zm12 0h1v1h-1zm12 0h1v1h-1zm12 0h1v1h-1zm13 0h1v1h-1zm12 0h1v1h-1zm12 0h1v1h-1zm12 0h1v1h-1zm12 0h1v1h-1zm12 0h1v1h-1zm12 0h1v1h-1zm12 0h1v1h-1zm13 0h1v1h-1zm12 0h1v1h-1zm12 0h1v1h-1zm12 0h1v1h-1zm12 0h1v1h-1zm12 0h1v1h-1zm12 0h1v1h-1zm12 0h1v1h-1zm13 0h1v1h-1zm12 0h1v1h-1zm12 0h1v1h-1zm12 0h1v1h-1zm12 0h1v1h-1zm12 0h1v1h-1zm12 0h1v1h-1zm13 0h1v1h-1zm12 0h1v1h-1zm12 0h1v1h-1zm12 0h1v1h-1zm12 0h1v1h-1zm12 0h1v1h-1zm12 0h1v1h-1zm12 0h1v1h-1zm13 0h1v1h-1zm12 0h1v1h-1zm12 0h1v1h-1zm12 0h1v1h-1zm12 0h1v1h-1zm12 0h1v1h-1zm12 0h1v1h-1zm12 0h1v1h-1zm13 0h1v1h-1zm12 0h1v1h-1zm12 0h1v1h-1zm12 0h1v1h-1zm12 0h1v1h-1zm12 0h1v1h-1zm12 0h1v1h-1zm13 0h1v1h-1zm12 0h1v1h-1zm12 0h1v1h-1zm12 0h1v1h-1zm12 0h1v1h-1zm12 0h1v1h-1zm12 0h1v1h-1zm12 0h1v1h-1zm13 0h1v1h-1zm12 0h1v1h-1zm12 0h1v1h-1zm12 0h1v1h-1zm12 0h1v1h-1zm12 0h1v1h-1zm12 0h1v1h-1zm12 0h1v1h-1zm13 0h1v1h-1zm12 0h1v1h-1zm12 0h1v1h-1zm12 0h1v1h-1zm12 0h1v1h-1zm12 0h1v1h-1zm12 0h1v1h-1zm13 0h1v1h-1zm12 0h1v1h-1zm12 0h1v1h-1zm12 0h1v1h-1zm12 0h1v1h-1zm12 0h1v1h-1zm12 0h1v1h-1zm12 0h1v1h-1zm13 0h1v1h-1zm12 0h1v1h-1zm12 0h1v1h-1zm12 0h1v1h-1zm12 0h1v1h-1zm12 0h1v1h-1zm12 0h1v1h-1zm13 0h1v1h-1zm12 0h1v1h-1zM2 172h1v1h-1zm12 0h1v1h-1zm12 0h1v1h-1zm12 0h1v1h-1zm13 0h1v1h-1zm12 0h1v1h-1zm12 0h1v1h-1zm12 0h1v1h-1zm12 0h1v1h-1zm12 0h1v1h-1zm12 0h1v1h-1zm12 0h1v1h-1zm13 0h1v1h-1zm12 0h1v1h-1zm12 0h1v1h-1zm12 0h1v1h-1zm12 0h1v1h-1zm12 0h1v1h-1zm12 0h1v1h-1zm13 0h1v1h-1zm12 0h1v1h-1zm12 0h1v1h-1zm12 0h1v1h-1zm12 0h1v1h-1zm12 0h1v1h-1zm12 0h1v1h-1zm12 0h1v1h-1zm13 0h1v1h-1zm12 0h1v1h-1zm12 0h1v1h-1zm12 0h1v1h-1zm12 0h1v1h-1zm12 0h1v1h-1zm12 0h1v1h-1zm13 0h1v1h-1zm12 0h1v1h-1zm12 0h1v1h-1zm12 0h1v1h-1zm12 0h1v1h-1zm12 0h1v1h-1zm12 0h1v1h-1zm12 0h1v1h-1zm13 0h1v1h-1zm12 0h1v1h-1zm12 0h1v1h-1zm12 0h1v1h-1zm12 0h1v1h-1zm12 0h1v1h-1zm12 0h1v1h-1zm12 0h1v1h-1zm13 0h1v1h-1zm12 0h1v1h-1zm12 0h1v1h-1zm12 0h1v1h-1zm12 0h1v1h-1zm12 0h1v1h-1zm12 0h1v1h-1zm13 0h1v1h-1zm12 0h1v1h-1zm12 0h1v1h-1zm12 0h1v1h-1zm12 0h1v1h-1zm12 0h1v1h-1zm12 0h1v1h-1zm12 0h1v1h-1zm13 0h1v1h-1zm12 0h1v1h-1zm12 0h1v1h-1zm12 0h1v1h-1zm12 0h1v1h-1zm12 0h1v1h-1zm12 0h1v1h-1zm12 0h1v1h-1zm13 0h1v1h-1zm12 0h1v1h-1zm12 0h1v1h-1zm12 0h1v1h-1zm12 0h1v1h-1zm12 0h1v1h-1zm12 0h1v1h-1zm13 0h1v1h-1zm12 0h1v1h-1zm12 0h1v1h-1zm12 0h1v1h-1zm12 0h1v1h-1zm12 0h1v1h-1zm12 0h1v1h-1zm12 0h1v1h-1zm13 0h1v1h-1zm12 0h1v1h-1zm12 0h1v1h-1zm12 0h1v1h-1zm12 0h1v1h-1zm12 0h1v1h-1zm12 0h1v1h-1zm12 0h1v1h-1zm13 0h1v1h-1zm12 0h1v1h-1zm12 0h1v1h-1zm12 0h1v1h-1zm12 0h1v1h-1zm12 0h1v1h-1zm12 0h1v1h-1zm13 0h1v1h-1zm12 0h1v1h-1zm12 0h1v1h-1zm12 0h1v1h-1zm12 0h1v1h-1zm12 0h1v1h-1zm12 0h1v1h-1zm12 0h1v1h-1zm13 0h1v1h-1zm12 0h1v1h-1zm12 0h1v1h-1zm12 0h1v1h-1zm12 0h1v1h-1zm12 0h1v1h-1zm12 0h1v1h-1zm13 0h1v1h-1zm12 0h1v1h-1zM2 184h1v1h-1zm12 0h1v1h-1zm12 0h1v1h-1zm12 0h1v1h-1zm13 0h1v1h-1zm12 0h1v1h-1zm12 0h1v1h-1zm12 0h1v1h-1zm12 0h1v1h-1zm12 0h1v1h-1zm12 0h1v1h-1zm12 0h1v1h-1zm13 0h1v1h-1zm12 0h1v1h-1zm12 0h1v1h-1zm12 0h1v1h-1zm12 0h1v1h-1zm12 0h1v1h-1zm12 0h1v1h-1zm13 0h1v1h-1zm12 0h1v1h-1zm12 0h1v1h-1zm12 0h1v1h-1zm12 0h1v1h-1zm12 0h1v1h-1zm12 0h1v1h-1zm12 0h1v1h-1zm13 0h1v1h-1zm12 0h1v1h-1zm12 0h1v1h-1zm12 0h1v1h-1zm12 0h1v1h-1zm12 0h1v1h-1zm12 0h1v1h-1zm13 0h1v1h-1zm12 0h1v1h-1zm12 0h1v1h-1zm12 0h1v1h-1zm12 0h1v1h-1zm12 0h1v1h-1zm12 0h1v1h-1zm12 0h1v1h-1zm13 0h1v1h-1zm12 0h1v1h-1zm12 0h1v1h-1zm12 0h1v1h-1zm12 0h1v1h-1zm12 0h1v1h-1zm12 0h1v1h-1zm12 0h1v1h-1zm13 0h1v1h-1zm12 0h1v1h-1zm12 0h1v1h-1zm12 0h1v1h-1zm12 0h1v1h-1zm12 0h1v1h-1zm12 0h1v1h-1zm13 0h1v1h-1zm12 0h1v1h-1zm12 0h1v1h-1zm12 0h1v1h-1zm12 0h1v1h-1zm12 0h1v1h-1zm12 0h1v1h-1zm12 0h1v1h-1zm13 0h1v1h-1zm12 0h1v1h-1zm12 0h1v1h-1zm12 0h1v1h-1zm12 0h1v1h-1zm12 0h1v1h-1zm12 0h1v1h-1zm12 0h1v1h-1zm13 0h1v1h-1zm12 0h1v1h-1zm12 0h1v1h-1zm12 0h1v1h-1zm12 0h1v1h-1zm12 0h1v1h-1zm12 0h1v1h-1zm13 0h1v1h-1zm12 0h1v1h-1zm12 0h1v1h-1zm12 0h1v1h-1zm12 0h1v1h-1zm12 0h1v1h-1zm12 0h1v1h-1zm12 0h1v1h-1zm13 0h1v1h-1zm12 0h1v1h-1zm12 0h1v1h-1zm12 0h1v1h-1zm12 0h1v1h-1zm12 0h1v1h-1zm12 0h1v1h-1zm12 0h1v1h-1zm13 0h1v1h-1zm12 0h1v1h-1zm12 0h1v1h-1zm12 0h1v1h-1zm12 0h1v1h-1zm12 0h1v1h-1zm12 0h1v1h-1zm13 0h1v1h-1zm12 0h1v1h-1zm12 0h1v1h-1zm12 0h1v1h-1zm12 0h1v1h-1zm12 0h1v1h-1zm12 0h1v1h-1zm12 0h1v1h-1zm13 0h1v1h-1zm12 0h1v1h-1zm12 0h1v1h-1zm12 0h1v1h-1zm12 0h1v1h-1zm12 0h1v1h-1zm12 0h1v1h-1zm13 0h1v1h-1zm12 0h1v1h-1zM2 196h1v1h-1zm12 0h1v1h-1zm12 0h1v1h-1zm12 0h1v1h-1zm13 0h1v1h-1zm12 0h1v1h-1zm12 0h1v1h-1zm12 0h1v1h-1zm12 0h1v1h-1zm12 0h1v1h-1zm12 0h1v1h-1zm12 0h1v1h-1zm13 0h1v1h-1zm12 0h1v1h-1zm12 0h1v1h-1zm12 0h1v1h-1zm12 0h1v1h-1zm12 0h1v1h-1zm12 0h1v1h-1zm13 0h1v1h-1zm12 0h1v1h-1zm12 0h1v1h-1zm12 0h1v1h-1zm12 0h1v1h-1zm12 0h1v1h-1zm12 0h1v1h-1zm12 0h1v1h-1zm13 0h1v1h-1zm12 0h1v1h-1zm12 0h1v1h-1zm12 0h1v1h-1zm12 0h1v1h-1zm12 0h1v1h-1zm12 0h1v1h-1zm13 0h1v1h-1zm12 0h1v1h-1zm12 0h1v1h-1zm12 0h1v1h-1zm12 0h1v1h-1zm12 0h1v1h-1zm12 0h1v1h-1zm12 0h1v1h-1zm13 0h1v1h-1zm12 0h1v1h-1zm12 0h1v1h-1zm12 0h1v1h-1zm12 0h1v1h-1zm12 0h1v1h-1zm12 0h1v1h-1zm12 0h1v1h-1zm13 0h1v1h-1zm12 0h1v1h-1zm12 0h1v1h-1zm12 0h1v1h-1zm12 0h1v1h-1zm12 0h1v1h-1zm12 0h1v1h-1zm13 0h1v1h-1zm12 0h1v1h-1zm12 0h1v1h-1zm12 0h1v1h-1zm12 0h1v1h-1zm12 0h1v1h-1zm12 0h1v1h-1zm12 0h1v1h-1zm13 0h1v1h-1zm12 0h1v1h-1zm12 0h1v1h-1zm12 0h1v1h-1zm12 0h1v1h-1zm12 0h1v1h-1zm12 0h1v1h-1zm12 0h1v1h-1zm13 0h1v1h-1zm12 0h1v1h-1zm12 0h1v1h-1zm12 0h1v1h-1zm12 0h1v1h-1zm12 0h1v1h-1zm12 0h1v1h-1zm13 0h1v1h-1zm12 0h1v1h-1zm12 0h1v1h-1zm12 0h1v1h-1zm12 0h1v1h-1zm12 0h1v1h-1zm12 0h1v1h-1zm12 0h1v1h-1zm13 0h1v1h-1zm12 0h1v1h-1zm12 0h1v1h-1zm12 0h1v1h-1zm12 0h1v1h-1zm12 0h1v1h-1zm12 0h1v1h-1zm12 0h1v1h-1zm13 0h1v1h-1zm12 0h1v1h-1zm12 0h1v1h-1zm12 0h1v1h-1zm12 0h1v1h-1zm12 0h1v1h-1zm12 0h1v1h-1zm13 0h1v1h-1zm12 0h1v1h-1zm12 0h1v1h-1zm12 0h1v1h-1zm12 0h1v1h-1zm12 0h1v1h-1zm12 0h1v1h-1zm12 0h1v1h-1zm13 0h1v1h-1zm12 0h1v1h-1zm12 0h1v1h-1zm12 0h1v1h-1zm12 0h1v1h-1zm12 0h1v1h-1zm12 0h1v1h-1zm13 0h1v1h-1zm12 0h1v1h-1zM2 208h1v1h-1zm12 0h1v1h-1zm12 0h1v1h-1zm12 0h1v1h-1zm13 0h1v1h-1zm12 0h1v1h-1zm12 0h1v1h-1zm12 0h1v1h-1zm12 0h1v1h-1zm12 0h1v1h-1zm12 0h1v1h-1zm12 0h1v1h-1zm13 0h1v1h-1zm12 0h1v1h-1zm12 0h1v1h-1zm12 0h1v1h-1zm12 0h1v1h-1zm12 0h1v1h-1zm12 0h1v1h-1zm13 0h1v1h-1zm12 0h1v1h-1zm12 0h1v1h-1zm12 0h1v1h-1zm12 0h1v1h-1zm12 0h1v1h-1zm12 0h1v1h-1zm12 0h1v1h-1zm13 0h1v1h-1zm12 0h1v1h-1zm12 0h1v1h-1zm12 0h1v1h-1zm12 0h1v1h-1zm12 0h1v1h-1zm12 0h1v1h-1zm13 0h1v1h-1zm12 0h1v1h-1zm12 0h1v1h-1zm12 0h1v1h-1zm12 0h1v1h-1zm12 0h1v1h-1zm12 0h1v1h-1zm12 0h1v1h-1zm13 0h1v1h-1zm12 0h1v1h-1zm12 0h1v1h-1zm12 0h1v1h-1zm12 0h1v1h-1zm12 0h1v1h-1zm12 0h1v1h-1zm12 0h1v1h-1zm13 0h1v1h-1zm12 0h1v1h-1zm12 0h1v1h-1zm12 0h1v1h-1zm12 0h1v1h-1zm12 0h1v1h-1zm12 0h1v1h-1zm13 0h1v1h-1zm12 0h1v1h-1zm12 0h1v1h-1zm12 0h1v1h-1zm12 0h1v1h-1zm12 0h1v1h-1zm12 0h1v1h-1zm12 0h1v1h-1zm13 0h1v1h-1zm12 0h1v1h-1zm12 0h1v1h-1zm12 0h1v1h-1zm12 0h1v1h-1zm12 0h1v1h-1zm12 0h1v1h-1zm12 0h1v1h-1zm13 0h1v1h-1zm12 0h1v1h-1zm12 0h1v1h-1zm12 0h1v1h-1zm12 0h1v1h-1zm12 0h1v1h-1zm12 0h1v1h-1zm13 0h1v1h-1zm12 0h1v1h-1zm12 0h1v1h-1zm12 0h1v1h-1zm12 0h1v1h-1zm12 0h1v1h-1zm12 0h1v1h-1zm12 0h1v1h-1zm13 0h1v1h-1zm12 0h1v1h-1zm12 0h1v1h-1zm12 0h1v1h-1zm12 0h1v1h-1zm12 0h1v1h-1zm12 0h1v1h-1zm12 0h1v1h-1zm13 0h1v1h-1zm12 0h1v1h-1zm12 0h1v1h-1zm12 0h1v1h-1zm12 0h1v1h-1zm12 0h1v1h-1zm12 0h1v1h-1zm13 0h1v1h-1zm12 0h1v1h-1zm12 0h1v1h-1zm12 0h1v1h-1zm12 0h1v1h-1zm12 0h1v1h-1zm12 0h1v1h-1zm12 0h1v1h-1zm13 0h1v1h-1zm12 0h1v1h-1zm12 0h1v1h-1zm12 0h1v1h-1zm12 0h1v1h-1zm12 0h1v1h-1zm12 0h1v1h-1zm13 0h1v1h-1zm12 0h1v1h-1zM2 220h1v1h-1zm12 0h1v1h-1zm12 0h1v1h-1zm12 0h1v1h-1zm13 0h1v1h-1zm12 0h1v1h-1zm12 0h1v1h-1zm12 0h1v1h-1zm12 0h1v1h-1zm12 0h1v1h-1zm12 0h1v1h-1zm12 0h1v1h-1zm13 0h1v1h-1zm12 0h1v1h-1zm12 0h1v1h-1zm12 0h1v1h-1zm12 0h1v1h-1zm12 0h1v1h-1zm12 0h1v1h-1zm13 0h1v1h-1zm12 0h1v1h-1zm12 0h1v1h-1zm12 0h1v1h-1zm12 0h1v1h-1zm12 0h1v1h-1zm12 0h1v1h-1zm12 0h1v1h-1zm13 0h1v1h-1zm12 0h1v1h-1zm12 0h1v1h-1zm12 0h1v1h-1zm12 0h1v1h-1zm12 0h1v1h-1zm12 0h1v1h-1zm13 0h1v1h-1zm12 0h1v1h-1zm12 0h1v1h-1zm12 0h1v1h-1zm12 0h1v1h-1zm12 0h1v1h-1zm12 0h1v1h-1zm12 0h1v1h-1zm13 0h1v1h-1zm12 0h1v1h-1zm12 0h1v1h-1zm12 0h1v1h-1zm12 0h1v1h-1zm12 0h1v1h-1zm12 0h1v1h-1zm12 0h1v1h-1zm13 0h1v1h-1zm12 0h1v1h-1zm12 0h1v1h-1zm12 0h1v1h-1zm12 0h1v1h-1zm12 0h1v1h-1zm12 0h1v1h-1zm13 0h1v1h-1zm12 0h1v1h-1zm12 0h1v1h-1zm12 0h1v1h-1zm12 0h1v1h-1zm12 0h1v1h-1zm12 0h1v1h-1zm12 0h1v1h-1zm13 0h1v1h-1zm12 0h1v1h-1zm12 0h1v1h-1zm12 0h1v1h-1zm12 0h1v1h-1zm12 0h1v1h-1zm12 0h1v1h-1zm12 0h1v1h-1zm13 0h1v1h-1zm12 0h1v1h-1zm12 0h1v1h-1zm12 0h1v1h-1zm12 0h1v1h-1zm12 0h1v1h-1zm12 0h1v1h-1zm13 0h1v1h-1zm12 0h1v1h-1zm12 0h1v1h-1zm12 0h1v1h-1zm12 0h1v1h-1zm12 0h1v1h-1zm12 0h1v1h-1zm12 0h1v1h-1zm13 0h1v1h-1zm12 0h1v1h-1zm12 0h1v1h-1zm12 0h1v1h-1zm12 0h1v1h-1zm12 0h1v1h-1zm12 0h1v1h-1zm12 0h1v1h-1zm13 0h1v1h-1zm12 0h1v1h-1zm12 0h1v1h-1zm12 0h1v1h-1zm12 0h1v1h-1zm12 0h1v1h-1zm12 0h1v1h-1zm13 0h1v1h-1zm12 0h1v1h-1zm12 0h1v1h-1zm12 0h1v1h-1zm12 0h1v1h-1zm12 0h1v1h-1zm12 0h1v1h-1zm12 0h1v1h-1zm13 0h1v1h-1zm12 0h1v1h-1zm12 0h1v1h-1zm12 0h1v1h-1zm12 0h1v1h-1zm12 0h1v1h-1zm12 0h1v1h-1zm13 0h1v1h-1zm12 0h1v1h-1zM2 232h1v1h-1zm12 0h1v1h-1zm12 0h1v1h-1zm12 0h1v1h-1zm13 0h1v1h-1zm12 0h1v1h-1zm12 0h1v1h-1zm12 0h1v1h-1zm12 0h1v1h-1zm12 0h1v1h-1zm12 0h1v1h-1zm12 0h1v1h-1zm13 0h1v1h-1zm12 0h1v1h-1zm12 0h1v1h-1zm12 0h1v1h-1zm12 0h1v1h-1zm12 0h1v1h-1zm12 0h1v1h-1zm13 0h1v1h-1zm12 0h1v1h-1zm12 0h1v1h-1zm12 0h1v1h-1zm12 0h1v1h-1zm12 0h1v1h-1zm12 0h1v1h-1zm12 0h1v1h-1zm13 0h1v1h-1zm12 0h1v1h-1zm12 0h1v1h-1zm12 0h1v1h-1zm12 0h1v1h-1zm12 0h1v1h-1zm12 0h1v1h-1zm13 0h1v1h-1zm12 0h1v1h-1zm12 0h1v1h-1zm12 0h1v1h-1zm12 0h1v1h-1zm12 0h1v1h-1zm12 0h1v1h-1zm12 0h1v1h-1zm13 0h1v1h-1zm12 0h1v1h-1zm12 0h1v1h-1zm12 0h1v1h-1zm12 0h1v1h-1zm12 0h1v1h-1zm12 0h1v1h-1zm12 0h1v1h-1zm13 0h1v1h-1zm12 0h1v1h-1zm12 0h1v1h-1zm12 0h1v1h-1zm12 0h1v1h-1zm12 0h1v1h-1zm12 0h1v1h-1zm13 0h1v1h-1zm12 0h1v1h-1zm12 0h1v1h-1zm12 0h1v1h-1zm12 0h1v1h-1zm12 0h1v1h-1zm12 0h1v1h-1zm12 0h1v1h-1zm13 0h1v1h-1zm12 0h1v1h-1zm12 0h1v1h-1zm12 0h1v1h-1zm12 0h1v1h-1zm12 0h1v1h-1zm12 0h1v1h-1zm12 0h1v1h-1zm13 0h1v1h-1zm12 0h1v1h-1zm12 0h1v1h-1zm12 0h1v1h-1zm12 0h1v1h-1zm12 0h1v1h-1zm12 0h1v1h-1zm13 0h1v1h-1zm12 0h1v1h-1zm12 0h1v1h-1zm12 0h1v1h-1zm12 0h1v1h-1zm12 0h1v1h-1zm12 0h1v1h-1zm12 0h1v1h-1zm13 0h1v1h-1zm12 0h1v1h-1zm12 0h1v1h-1zm12 0h1v1h-1zm12 0h1v1h-1zm12 0h1v1h-1zm12 0h1v1h-1zm12 0h1v1h-1zm13 0h1v1h-1zm12 0h1v1h-1zm12 0h1v1h-1zm12 0h1v1h-1zm12 0h1v1h-1zm12 0h1v1h-1zm12 0h1v1h-1zm13 0h1v1h-1zm12 0h1v1h-1zm12 0h1v1h-1zm12 0h1v1h-1zm12 0h1v1h-1zm12 0h1v1h-1zm12 0h1v1h-1zm12 0h1v1h-1zm13 0h1v1h-1zm12 0h1v1h-1zm12 0h1v1h-1zm12 0h1v1h-1zm12 0h1v1h-1zm12 0h1v1h-1zm12 0h1v1h-1zm13 0h1v1h-1zm12 0h1v1h-1zM2 245h1v1h-1zm12 0h1v1h-1zm12 0h1v1h-1zm12 0h1v1h-1zm13 0h1v1h-1zm12 0h1v1h-1zm12 0h1v1h-1zm12 0h1v1h-1zm12 0h1v1h-1zm12 0h1v1h-1zm12 0h1v1h-1zm12 0h1v1h-1zm13 0h1v1h-1zm12 0h1v1h-1zm12 0h1v1h-1zm12 0h1v1h-1zm12 0h1v1h-1zm12 0h1v1h-1zm12 0h1v1h-1zm13 0h1v1h-1zm12 0h1v1h-1zm12 0h1v1h-1zm12 0h1v1h-1zm12 0h1v1h-1zm12 0h1v1h-1zm12 0h1v1h-1zm12 0h1v1h-1zm13 0h1v1h-1zm12 0h1v1h-1zm12 0h1v1h-1zm12 0h1v1h-1zm12 0h1v1h-1zm12 0h1v1h-1zm12 0h1v1h-1zm13 0h1v1h-1zm12 0h1v1h-1zm12 0h1v1h-1zm12 0h1v1h-1zm12 0h1v1h-1zm12 0h1v1h-1zm12 0h1v1h-1zm12 0h1v1h-1zm13 0h1v1h-1zm12 0h1v1h-1zm12 0h1v1h-1zm12 0h1v1h-1zm12 0h1v1h-1zm12 0h1v1h-1zm12 0h1v1h-1zm12 0h1v1h-1zm13 0h1v1h-1zm12 0h1v1h-1zm12 0h1v1h-1zm12 0h1v1h-1zm12 0h1v1h-1zm12 0h1v1h-1zm12 0h1v1h-1zm13 0h1v1h-1zm12 0h1v1h-1zm12 0h1v1h-1zm12 0h1v1h-1zm12 0h1v1h-1zm12 0h1v1h-1zm12 0h1v1h-1zm12 0h1v1h-1zm13 0h1v1h-1zm12 0h1v1h-1zm12 0h1v1h-1zm12 0h1v1h-1zm12 0h1v1h-1zm12 0h1v1h-1zm12 0h1v1h-1zm12 0h1v1h-1zm13 0h1v1h-1zm12 0h1v1h-1zm12 0h1v1h-1zm12 0h1v1h-1zm12 0h1v1h-1zm12 0h1v1h-1zm12 0h1v1h-1zm13 0h1v1h-1zm12 0h1v1h-1zm12 0h1v1h-1zm12 0h1v1h-1zm12 0h1v1h-1zm12 0h1v1h-1zm12 0h1v1h-1zm12 0h1v1h-1zm13 0h1v1h-1zm12 0h1v1h-1zm12 0h1v1h-1zm12 0h1v1h-1zm12 0h1v1h-1zm12 0h1v1h-1zm12 0h1v1h-1zm12 0h1v1h-1zm13 0h1v1h-1zm12 0h1v1h-1zm12 0h1v1h-1zm12 0h1v1h-1zm12 0h1v1h-1zm12 0h1v1h-1zm12 0h1v1h-1zm13 0h1v1h-1zm12 0h1v1h-1zm12 0h1v1h-1zm12 0h1v1h-1zm12 0h1v1h-1zm12 0h1v1h-1zm12 0h1v1h-1zm12 0h1v1h-1zm13 0h1v1h-1zm12 0h1v1h-1zm12 0h1v1h-1zm12 0h1v1h-1zm12 0h1v1h-1zm12 0h1v1h-1zm12 0h1v1h-1zm13 0h1v1h-1zm12 0h1v1h-1zM2 257h1v1h-1zm12 0h1v1h-1zm12 0h1v1h-1zm12 0h1v1h-1zm13 0h1v1h-1zm12 0h1v1h-1zm12 0h1v1h-1zm12 0h1v1h-1zm12 0h1v1h-1zm12 0h1v1h-1zm12 0h1v1h-1zm12 0h1v1h-1zm13 0h1v1h-1zm12 0h1v1h-1zm12 0h1v1h-1zm12 0h1v1h-1zm12 0h1v1h-1zm12 0h1v1h-1zm12 0h1v1h-1zm13 0h1v1h-1zm12 0h1v1h-1zm12 0h1v1h-1zm12 0h1v1h-1zm12 0h1v1h-1zm12 0h1v1h-1zm12 0h1v1h-1zm12 0h1v1h-1zm13 0h1v1h-1zm12 0h1v1h-1zm12 0h1v1h-1zm12 0h1v1h-1zm12 0h1v1h-1zm12 0h1v1h-1zm12 0h1v1h-1zm13 0h1v1h-1zm12 0h1v1h-1zm12 0h1v1h-1zm12 0h1v1h-1zm12 0h1v1h-1zm12 0h1v1h-1zm12 0h1v1h-1zm12 0h1v1h-1zm13 0h1v1h-1zm12 0h1v1h-1zm12 0h1v1h-1zm12 0h1v1h-1zm12 0h1v1h-1zm12 0h1v1h-1zm12 0h1v1h-1zm12 0h1v1h-1zm13 0h1v1h-1zm12 0h1v1h-1zm12 0h1v1h-1zm12 0h1v1h-1zm12 0h1v1h-1zm12 0h1v1h-1zm12 0h1v1h-1zm13 0h1v1h-1zm12 0h1v1h-1zm12 0h1v1h-1zm12 0h1v1h-1zm12 0h1v1h-1zm12 0h1v1h-1zm12 0h1v1h-1zm12 0h1v1h-1zm13 0h1v1h-1zm12 0h1v1h-1zm12 0h1v1h-1zm12 0h1v1h-1zm12 0h1v1h-1zm12 0h1v1h-1zm12 0h1v1h-1zm12 0h1v1h-1zm13 0h1v1h-1zm12 0h1v1h-1zm12 0h1v1h-1zm12 0h1v1h-1zm12 0h1v1h-1zm12 0h1v1h-1zm12 0h1v1h-1zm13 0h1v1h-1zm12 0h1v1h-1zm12 0h1v1h-1zm12 0h1v1h-1zm12 0h1v1h-1zm12 0h1v1h-1zm12 0h1v1h-1zm12 0h1v1h-1zm13 0h1v1h-1zm12 0h1v1h-1zm12 0h1v1h-1zm12 0h1v1h-1zm12 0h1v1h-1zm12 0h1v1h-1zm12 0h1v1h-1zm12 0h1v1h-1zm13 0h1v1h-1zm12 0h1v1h-1zm12 0h1v1h-1zm12 0h1v1h-1zm12 0h1v1h-1zm12 0h1v1h-1zm12 0h1v1h-1zm13 0h1v1h-1zm12 0h1v1h-1zm12 0h1v1h-1zm12 0h1v1h-1zm12 0h1v1h-1zm12 0h1v1h-1zm12 0h1v1h-1zm12 0h1v1h-1zm13 0h1v1h-1zm12 0h1v1h-1zm12 0h1v1h-1zm12 0h1v1h-1zm12 0h1v1h-1zm12 0h1v1h-1zm12 0h1v1h-1zm13 0h1v1h-1zm12 0h1v1h-1zM2 269h1v1h-1zm12 0h1v1h-1zm12 0h1v1h-1zm12 0h1v1h-1zm13 0h1v1h-1zm12 0h1v1h-1zm12 0h1v1h-1zm12 0h1v1h-1zm12 0h1v1h-1zm12 0h1v1h-1zm12 0h1v1h-1zm12 0h1v1h-1zm13 0h1v1h-1zm12 0h1v1h-1zm12 0h1v1h-1zm12 0h1v1h-1zm12 0h1v1h-1zm12 0h1v1h-1zm12 0h1v1h-1zm13 0h1v1h-1zm12 0h1v1h-1zm12 0h1v1h-1zm12 0h1v1h-1zm12 0h1v1h-1zm12 0h1v1h-1zm12 0h1v1h-1zm12 0h1v1h-1zm13 0h1v1h-1zm12 0h1v1h-1zm12 0h1v1h-1zm12 0h1v1h-1zm12 0h1v1h-1zm12 0h1v1h-1zm12 0h1v1h-1zm13 0h1v1h-1zm12 0h1v1h-1zm12 0h1v1h-1zm12 0h1v1h-1zm12 0h1v1h-1zm12 0h1v1h-1zm12 0h1v1h-1zm12 0h1v1h-1zm13 0h1v1h-1zm12 0h1v1h-1zm12 0h1v1h-1zm12 0h1v1h-1zm12 0h1v1h-1zm12 0h1v1h-1zm12 0h1v1h-1zm12 0h1v1h-1zm13 0h1v1h-1zm12 0h1v1h-1zm12 0h1v1h-1zm12 0h1v1h-1zm12 0h1v1h-1zm12 0h1v1h-1zm12 0h1v1h-1zm13 0h1v1h-1zm12 0h1v1h-1zm12 0h1v1h-1zm12 0h1v1h-1zm12 0h1v1h-1zm12 0h1v1h-1zm12 0h1v1h-1zm12 0h1v1h-1zm13 0h1v1h-1zm12 0h1v1h-1zm12 0h1v1h-1zm12 0h1v1h-1zm12 0h1v1h-1zm12 0h1v1h-1zm12 0h1v1h-1zm12 0h1v1h-1zm13 0h1v1h-1zm12 0h1v1h-1zm12 0h1v1h-1zm12 0h1v1h-1zm12 0h1v1h-1zm12 0h1v1h-1zm12 0h1v1h-1zm13 0h1v1h-1zm12 0h1v1h-1zm12 0h1v1h-1zm12 0h1v1h-1zm12 0h1v1h-1zm12 0h1v1h-1zm12 0h1v1h-1zm12 0h1v1h-1zm13 0h1v1h-1zm12 0h1v1h-1zm12 0h1v1h-1zm12 0h1v1h-1zm12 0h1v1h-1zm12 0h1v1h-1zm12 0h1v1h-1zm12 0h1v1h-1zm13 0h1v1h-1zm12 0h1v1h-1zm12 0h1v1h-1zm12 0h1v1h-1zm12 0h1v1h-1zm12 0h1v1h-1zm12 0h1v1h-1zm13 0h1v1h-1zm12 0h1v1h-1zm12 0h1v1h-1zm12 0h1v1h-1zm12 0h1v1h-1zm12 0h1v1h-1zm12 0h1v1h-1zm12 0h1v1h-1zm13 0h1v1h-1zm12 0h1v1h-1zm12 0h1v1h-1zm12 0h1v1h-1zm12 0h1v1h-1zm12 0h1v1h-1zm12 0h1v1h-1zm13 0h1v1h-1zm12 0h1v1h-1zM2 281h1v1h-1zm12 0h1v1h-1zm12 0h1v1h-1zm12 0h1v1h-1zm13 0h1v1h-1zm12 0h1v1h-1zm12 0h1v1h-1zm12 0h1v1h-1zm12 0h1v1h-1zm12 0h1v1h-1zm12 0h1v1h-1zm12 0h1v1h-1zm13 0h1v1h-1zm12 0h1v1h-1zm12 0h1v1h-1zm12 0h1v1h-1zm12 0h1v1h-1zm12 0h1v1h-1zm12 0h1v1h-1zm13 0h1v1h-1zm12 0h1v1h-1zm12 0h1v1h-1zm12 0h1v1h-1zm12 0h1v1h-1zm12 0h1v1h-1zm12 0h1v1h-1zm12 0h1v1h-1zm13 0h1v1h-1zm12 0h1v1h-1zm12 0h1v1h-1zm12 0h1v1h-1zm12 0h1v1h-1zm12 0h1v1h-1zm12 0h1v1h-1zm13 0h1v1h-1zm12 0h1v1h-1zm12 0h1v1h-1zm12 0h1v1h-1zm12 0h1v1h-1zm12 0h1v1h-1zm12 0h1v1h-1zm12 0h1v1h-1zm13 0h1v1h-1zm12 0h1v1h-1zm12 0h1v1h-1zm12 0h1v1h-1zm12 0h1v1h-1zm12 0h1v1h-1zm12 0h1v1h-1zm12 0h1v1h-1zm13 0h1v1h-1zm12 0h1v1h-1zm12 0h1v1h-1zm12 0h1v1h-1zm12 0h1v1h-1zm12 0h1v1h-1zm12 0h1v1h-1zm13 0h1v1h-1zm12 0h1v1h-1zm12 0h1v1h-1zm12 0h1v1h-1zm12 0h1v1h-1zm12 0h1v1h-1zm12 0h1v1h-1zm12 0h1v1h-1zm13 0h1v1h-1zm12 0h1v1h-1zm12 0h1v1h-1zm12 0h1v1h-1zm12 0h1v1h-1zm12 0h1v1h-1zm12 0h1v1h-1zm12 0h1v1h-1zm13 0h1v1h-1zm12 0h1v1h-1zm12 0h1v1h-1zm12 0h1v1h-1zm12 0h1v1h-1zm12 0h1v1h-1zm12 0h1v1h-1zm13 0h1v1h-1zm12 0h1v1h-1zm12 0h1v1h-1zm12 0h1v1h-1zm12 0h1v1h-1zm12 0h1v1h-1zm12 0h1v1h-1zm12 0h1v1h-1zm13 0h1v1h-1zm12 0h1v1h-1zm12 0h1v1h-1zm12 0h1v1h-1zm12 0h1v1h-1zm12 0h1v1h-1zm12 0h1v1h-1zm12 0h1v1h-1zm13 0h1v1h-1zm12 0h1v1h-1zm12 0h1v1h-1zm12 0h1v1h-1zm12 0h1v1h-1zm12 0h1v1h-1zm12 0h1v1h-1zm13 0h1v1h-1zm12 0h1v1h-1zm12 0h1v1h-1zm12 0h1v1h-1zm12 0h1v1h-1zm12 0h1v1h-1zm12 0h1v1h-1zm12 0h1v1h-1zm13 0h1v1h-1zm12 0h1v1h-1zm12 0h1v1h-1zm12 0h1v1h-1zm12 0h1v1h-1zm12 0h1v1h-1zm12 0h1v1h-1zm13 0h1v1h-1zm12 0h1v1h-1zM2 293h1v1h-1zm12 0h1v1h-1zm12 0h1v1h-1zm12 0h1v1h-1zm13 0h1v1h-1zm12 0h1v1h-1zm12 0h1v1h-1zm12 0h1v1h-1zm12 0h1v1h-1zm12 0h1v1h-1zm12 0h1v1h-1zm12 0h1v1h-1zm13 0h1v1h-1zm12 0h1v1h-1zm12 0h1v1h-1zm12 0h1v1h-1zm12 0h1v1h-1zm12 0h1v1h-1zm12 0h1v1h-1zm13 0h1v1h-1zm12 0h1v1h-1zm12 0h1v1h-1zm12 0h1v1h-1zm12 0h1v1h-1zm12 0h1v1h-1zm12 0h1v1h-1zm12 0h1v1h-1zm13 0h1v1h-1zm12 0h1v1h-1zm12 0h1v1h-1zm12 0h1v1h-1zm12 0h1v1h-1zm12 0h1v1h-1zm12 0h1v1h-1zm13 0h1v1h-1zm12 0h1v1h-1zm12 0h1v1h-1zm12 0h1v1h-1zm12 0h1v1h-1zm12 0h1v1h-1zm12 0h1v1h-1zm12 0h1v1h-1zm13 0h1v1h-1zm12 0h1v1h-1zm12 0h1v1h-1zm12 0h1v1h-1zm12 0h1v1h-1zm12 0h1v1h-1zm12 0h1v1h-1zm12 0h1v1h-1zm13 0h1v1h-1zm12 0h1v1h-1zm12 0h1v1h-1zm12 0h1v1h-1zm12 0h1v1h-1zm12 0h1v1h-1zm12 0h1v1h-1zm13 0h1v1h-1zm12 0h1v1h-1zm12 0h1v1h-1zm12 0h1v1h-1zm12 0h1v1h-1zm12 0h1v1h-1zm12 0h1v1h-1zm12 0h1v1h-1zm13 0h1v1h-1zm12 0h1v1h-1zm12 0h1v1h-1zm12 0h1v1h-1zm12 0h1v1h-1zm12 0h1v1h-1zm12 0h1v1h-1zm12 0h1v1h-1zm13 0h1v1h-1zm12 0h1v1h-1zm12 0h1v1h-1zm12 0h1v1h-1zm12 0h1v1h-1zm12 0h1v1h-1zm12 0h1v1h-1zm13 0h1v1h-1zm12 0h1v1h-1zm12 0h1v1h-1zm12 0h1v1h-1zm12 0h1v1h-1zm12 0h1v1h-1zm12 0h1v1h-1zm12 0h1v1h-1zm13 0h1v1h-1zm12 0h1v1h-1zm12 0h1v1h-1zm12 0h1v1h-1zm12 0h1v1h-1zm12 0h1v1h-1zm12 0h1v1h-1zm12 0h1v1h-1zm13 0h1v1h-1zm12 0h1v1h-1zm12 0h1v1h-1zm12 0h1v1h-1zm12 0h1v1h-1zm12 0h1v1h-1zm12 0h1v1h-1zm13 0h1v1h-1zm12 0h1v1h-1zm12 0h1v1h-1zm12 0h1v1h-1zm12 0h1v1h-1zm12 0h1v1h-1zm12 0h1v1h-1zm12 0h1v1h-1zm13 0h1v1h-1zm12 0h1v1h-1zm12 0h1v1h-1zm12 0h1v1h-1zm12 0h1v1h-1zm12 0h1v1h-1zm12 0h1v1h-1zm13 0h1v1h-1zm12 0h1v1h-1zM2 305h1v1h-1zm12 0h1v1h-1zm12 0h1v1h-1zm12 0h1v1h-1zm13 0h1v1h-1zm12 0h1v1h-1zm12 0h1v1h-1zm12 0h1v1h-1zm12 0h1v1h-1zm12 0h1v1h-1zm12 0h1v1h-1zm12 0h1v1h-1zm13 0h1v1h-1zm12 0h1v1h-1zm12 0h1v1h-1zm12 0h1v1h-1zm12 0h1v1h-1zm12 0h1v1h-1zm12 0h1v1h-1zm13 0h1v1h-1zm12 0h1v1h-1zm12 0h1v1h-1zm12 0h1v1h-1zm12 0h1v1h-1zm12 0h1v1h-1zm12 0h1v1h-1zm12 0h1v1h-1zm13 0h1v1h-1zm12 0h1v1h-1zm12 0h1v1h-1zm12 0h1v1h-1zm12 0h1v1h-1zm12 0h1v1h-1zm12 0h1v1h-1zm13 0h1v1h-1zm12 0h1v1h-1zm12 0h1v1h-1zm12 0h1v1h-1zm12 0h1v1h-1zm12 0h1v1h-1zm12 0h1v1h-1zm12 0h1v1h-1zm13 0h1v1h-1zm12 0h1v1h-1zm12 0h1v1h-1zm12 0h1v1h-1zm12 0h1v1h-1zm12 0h1v1h-1zm12 0h1v1h-1zm12 0h1v1h-1zm13 0h1v1h-1zm12 0h1v1h-1zm12 0h1v1h-1zm12 0h1v1h-1zm12 0h1v1h-1zm12 0h1v1h-1zm12 0h1v1h-1zm13 0h1v1h-1zm12 0h1v1h-1zm12 0h1v1h-1zm12 0h1v1h-1zm12 0h1v1h-1zm12 0h1v1h-1zm12 0h1v1h-1zm12 0h1v1h-1zm13 0h1v1h-1zm12 0h1v1h-1zm12 0h1v1h-1zm12 0h1v1h-1zm12 0h1v1h-1zm12 0h1v1h-1zm12 0h1v1h-1zm12 0h1v1h-1zm13 0h1v1h-1zm12 0h1v1h-1zm12 0h1v1h-1zm12 0h1v1h-1zm12 0h1v1h-1zm12 0h1v1h-1zm12 0h1v1h-1zm13 0h1v1h-1zm12 0h1v1h-1zm12 0h1v1h-1zm12 0h1v1h-1zm12 0h1v1h-1zm12 0h1v1h-1zm12 0h1v1h-1zm12 0h1v1h-1zm13 0h1v1h-1zm12 0h1v1h-1zm12 0h1v1h-1zm12 0h1v1h-1zm12 0h1v1h-1zm12 0h1v1h-1zm12 0h1v1h-1zm12 0h1v1h-1zm13 0h1v1h-1zm12 0h1v1h-1zm12 0h1v1h-1zm12 0h1v1h-1zm12 0h1v1h-1zm12 0h1v1h-1zm12 0h1v1h-1zm13 0h1v1h-1zm12 0h1v1h-1zm12 0h1v1h-1zm12 0h1v1h-1zm12 0h1v1h-1zm12 0h1v1h-1zm12 0h1v1h-1zm12 0h1v1h-1zm13 0h1v1h-1zm12 0h1v1h-1zm12 0h1v1h-1zm12 0h1v1h-1zm12 0h1v1h-1zm12 0h1v1h-1zm12 0h1v1h-1zm13 0h1v1h-1zm12 0h1v1h-1zM2 317h1v1h-1zm12 0h1v1h-1zm12 0h1v1h-1zm12 0h1v1h-1zm13 0h1v1h-1zm12 0h1v1h-1zm12 0h1v1h-1zm12 0h1v1h-1zm12 0h1v1h-1zm12 0h1v1h-1zm12 0h1v1h-1zm12 0h1v1h-1zm13 0h1v1h-1zm12 0h1v1h-1zm12 0h1v1h-1zm12 0h1v1h-1zm12 0h1v1h-1zm12 0h1v1h-1zm12 0h1v1h-1zm13 0h1v1h-1zm12 0h1v1h-1zm12 0h1v1h-1zm12 0h1v1h-1zm12 0h1v1h-1zm12 0h1v1h-1zm12 0h1v1h-1zm12 0h1v1h-1zm13 0h1v1h-1zm12 0h1v1h-1zm12 0h1v1h-1zm12 0h1v1h-1zm12 0h1v1h-1zm12 0h1v1h-1zm12 0h1v1h-1zm13 0h1v1h-1zm12 0h1v1h-1zm12 0h1v1h-1zm12 0h1v1h-1zm12 0h1v1h-1zm12 0h1v1h-1zm12 0h1v1h-1zm12 0h1v1h-1zm13 0h1v1h-1zm12 0h1v1h-1zm12 0h1v1h-1zm12 0h1v1h-1zm12 0h1v1h-1zm12 0h1v1h-1zm12 0h1v1h-1zm12 0h1v1h-1zm13 0h1v1h-1zm12 0h1v1h-1zm12 0h1v1h-1zm12 0h1v1h-1zm12 0h1v1h-1zm12 0h1v1h-1zm12 0h1v1h-1zm13 0h1v1h-1zm12 0h1v1h-1zm12 0h1v1h-1zm12 0h1v1h-1zm12 0h1v1h-1zm12 0h1v1h-1zm12 0h1v1h-1zm12 0h1v1h-1zm13 0h1v1h-1zm12 0h1v1h-1zm12 0h1v1h-1zm12 0h1v1h-1zm12 0h1v1h-1zm12 0h1v1h-1zm12 0h1v1h-1zm12 0h1v1h-1zm13 0h1v1h-1zm12 0h1v1h-1zm12 0h1v1h-1zm12 0h1v1h-1zm12 0h1v1h-1zm12 0h1v1h-1zm12 0h1v1h-1zm13 0h1v1h-1zm12 0h1v1h-1zm12 0h1v1h-1zm12 0h1v1h-1zm12 0h1v1h-1zm12 0h1v1h-1zm12 0h1v1h-1zm12 0h1v1h-1zm13 0h1v1h-1zm12 0h1v1h-1zm12 0h1v1h-1zm12 0h1v1h-1zm12 0h1v1h-1zm12 0h1v1h-1zm12 0h1v1h-1zm12 0h1v1h-1zm13 0h1v1h-1zm12 0h1v1h-1zm12 0h1v1h-1zm12 0h1v1h-1zm12 0h1v1h-1zm12 0h1v1h-1zm12 0h1v1h-1zm13 0h1v1h-1zm12 0h1v1h-1zm12 0h1v1h-1zm12 0h1v1h-1zm12 0h1v1h-1zm12 0h1v1h-1zm12 0h1v1h-1zm12 0h1v1h-1zm13 0h1v1h-1zm12 0h1v1h-1zm12 0h1v1h-1zm12 0h1v1h-1zm12 0h1v1h-1zm12 0h1v1h-1zm12 0h1v1h-1zm13 0h1v1h-1zm12 0h1v1h-1zM2 330h1v1h-1zm12 0h1v1h-1zm12 0h1v1h-1zm12 0h1v1h-1zm13 0h1v1h-1zm12 0h1v1h-1zm12 0h1v1h-1zm12 0h1v1h-1zm12 0h1v1h-1zm12 0h1v1h-1zm12 0h1v1h-1zm12 0h1v1h-1zm13 0h1v1h-1zm12 0h1v1h-1zm12 0h1v1h-1zm12 0h1v1h-1zm12 0h1v1h-1zm12 0h1v1h-1zm12 0h1v1h-1zm13 0h1v1h-1zm12 0h1v1h-1zm12 0h1v1h-1zm12 0h1v1h-1zm12 0h1v1h-1zm12 0h1v1h-1zm12 0h1v1h-1zm12 0h1v1h-1zm13 0h1v1h-1zm12 0h1v1h-1zm12 0h1v1h-1zm12 0h1v1h-1zm12 0h1v1h-1zm12 0h1v1h-1zm12 0h1v1h-1zm13 0h1v1h-1zm12 0h1v1h-1zm12 0h1v1h-1zm12 0h1v1h-1zm12 0h1v1h-1zm12 0h1v1h-1zm12 0h1v1h-1zm12 0h1v1h-1zm13 0h1v1h-1zm12 0h1v1h-1zm12 0h1v1h-1zm12 0h1v1h-1zm12 0h1v1h-1zm12 0h1v1h-1zm12 0h1v1h-1zm12 0h1v1h-1zm13 0h1v1h-1zm12 0h1v1h-1zm12 0h1v1h-1zm12 0h1v1h-1zm12 0h1v1h-1zm12 0h1v1h-1zm12 0h1v1h-1zm13 0h1v1h-1zm12 0h1v1h-1zm12 0h1v1h-1zm12 0h1v1h-1zm12 0h1v1h-1zm12 0h1v1h-1zm12 0h1v1h-1zm12 0h1v1h-1zm13 0h1v1h-1zm12 0h1v1h-1zm12 0h1v1h-1zm12 0h1v1h-1zm12 0h1v1h-1zm12 0h1v1h-1zm12 0h1v1h-1zm12 0h1v1h-1zm13 0h1v1h-1zm12 0h1v1h-1zm12 0h1v1h-1zm12 0h1v1h-1zm12 0h1v1h-1zm12 0h1v1h-1zm12 0h1v1h-1zm13 0h1v1h-1zm12 0h1v1h-1zm12 0h1v1h-1zm12 0h1v1h-1zm12 0h1v1h-1zm12 0h1v1h-1zm12 0h1v1h-1zm12 0h1v1h-1zm13 0h1v1h-1zm12 0h1v1h-1zm12 0h1v1h-1zm12 0h1v1h-1zm12 0h1v1h-1zm12 0h1v1h-1zm12 0h1v1h-1zm12 0h1v1h-1zm13 0h1v1h-1zm12 0h1v1h-1zm12 0h1v1h-1zm12 0h1v1h-1zm12 0h1v1h-1zm12 0h1v1h-1zm12 0h1v1h-1zm13 0h1v1h-1zm12 0h1v1h-1zm12 0h1v1h-1zm12 0h1v1h-1zm12 0h1v1h-1zm12 0h1v1h-1zm12 0h1v1h-1zm12 0h1v1h-1zm13 0h1v1h-1zm12 0h1v1h-1zm12 0h1v1h-1zm12 0h1v1h-1zm12 0h1v1h-1zm12 0h1v1h-1zm12 0h1v1h-1zm13 0h1v1h-1zm12 0h1v1h-1zM2 342h1v1h-1zm12 0h1v1h-1zm12 0h1v1h-1zm12 0h1v1h-1zm13 0h1v1h-1zm12 0h1v1h-1zm12 0h1v1h-1zm12 0h1v1h-1zm12 0h1v1h-1zm12 0h1v1h-1zm12 0h1v1h-1zm12 0h1v1h-1zm13 0h1v1h-1zm12 0h1v1h-1zm12 0h1v1h-1zm12 0h1v1h-1zm12 0h1v1h-1zm12 0h1v1h-1zm12 0h1v1h-1zm13 0h1v1h-1zm12 0h1v1h-1zm12 0h1v1h-1zm12 0h1v1h-1zm12 0h1v1h-1zm12 0h1v1h-1zm12 0h1v1h-1zm12 0h1v1h-1zm13 0h1v1h-1zm12 0h1v1h-1zm12 0h1v1h-1zm12 0h1v1h-1zm12 0h1v1h-1zm12 0h1v1h-1zm12 0h1v1h-1zm13 0h1v1h-1zm12 0h1v1h-1zm12 0h1v1h-1zm12 0h1v1h-1zm12 0h1v1h-1zm12 0h1v1h-1zm12 0h1v1h-1zm12 0h1v1h-1zm13 0h1v1h-1zm12 0h1v1h-1zm12 0h1v1h-1zm12 0h1v1h-1zm12 0h1v1h-1zm12 0h1v1h-1zm12 0h1v1h-1zm12 0h1v1h-1zm13 0h1v1h-1zm12 0h1v1h-1zm12 0h1v1h-1zm12 0h1v1h-1zm12 0h1v1h-1zm12 0h1v1h-1zm12 0h1v1h-1zm13 0h1v1h-1zm12 0h1v1h-1zm12 0h1v1h-1zm12 0h1v1h-1zm12 0h1v1h-1zm12 0h1v1h-1zm12 0h1v1h-1zm12 0h1v1h-1zm13 0h1v1h-1zm12 0h1v1h-1zm12 0h1v1h-1zm12 0h1v1h-1zm12 0h1v1h-1zm12 0h1v1h-1zm12 0h1v1h-1zm12 0h1v1h-1zm13 0h1v1h-1zm12 0h1v1h-1zm12 0h1v1h-1zm12 0h1v1h-1zm12 0h1v1h-1zm12 0h1v1h-1zm12 0h1v1h-1zm13 0h1v1h-1zm12 0h1v1h-1zm12 0h1v1h-1zm12 0h1v1h-1zm12 0h1v1h-1zm12 0h1v1h-1zm12 0h1v1h-1zm12 0h1v1h-1zm13 0h1v1h-1zm12 0h1v1h-1zm12 0h1v1h-1zm12 0h1v1h-1zm12 0h1v1h-1zm12 0h1v1h-1zm12 0h1v1h-1zm12 0h1v1h-1zm13 0h1v1h-1zm12 0h1v1h-1zm12 0h1v1h-1zm12 0h1v1h-1zm12 0h1v1h-1zm12 0h1v1h-1zm12 0h1v1h-1zm13 0h1v1h-1zm12 0h1v1h-1zm12 0h1v1h-1zm12 0h1v1h-1zm12 0h1v1h-1zm12 0h1v1h-1zm12 0h1v1h-1zm12 0h1v1h-1zm13 0h1v1h-1zm12 0h1v1h-1zm12 0h1v1h-1zm12 0h1v1h-1zm12 0h1v1h-1zm12 0h1v1h-1zm12 0h1v1h-1zm13 0h1v1h-1zm12 0h1v1h-1zM2 354h1v1h-1zm12 0h1v1h-1zm12 0h1v1h-1zm12 0h1v1h-1zm13 0h1v1h-1zm12 0h1v1h-1zm12 0h1v1h-1zm12 0h1v1h-1zm12 0h1v1h-1zm12 0h1v1h-1zm12 0h1v1h-1zm12 0h1v1h-1zm13 0h1v1h-1zm12 0h1v1h-1zm12 0h1v1h-1zm12 0h1v1h-1zm12 0h1v1h-1zm12 0h1v1h-1zm12 0h1v1h-1zm13 0h1v1h-1zm12 0h1v1h-1zm12 0h1v1h-1zm12 0h1v1h-1zm12 0h1v1h-1zm12 0h1v1h-1zm12 0h1v1h-1zm12 0h1v1h-1zm13 0h1v1h-1zm12 0h1v1h-1zm12 0h1v1h-1zm12 0h1v1h-1zm12 0h1v1h-1zm12 0h1v1h-1zm12 0h1v1h-1zm13 0h1v1h-1zm12 0h1v1h-1zm12 0h1v1h-1zm12 0h1v1h-1zm12 0h1v1h-1zm12 0h1v1h-1zm12 0h1v1h-1zm12 0h1v1h-1zm13 0h1v1h-1zm12 0h1v1h-1zm12 0h1v1h-1zm12 0h1v1h-1zm12 0h1v1h-1zm12 0h1v1h-1zm12 0h1v1h-1zm12 0h1v1h-1zm13 0h1v1h-1zm12 0h1v1h-1zm12 0h1v1h-1zm12 0h1v1h-1zm12 0h1v1h-1zm12 0h1v1h-1zm12 0h1v1h-1zm13 0h1v1h-1zm12 0h1v1h-1zm12 0h1v1h-1zm12 0h1v1h-1zm12 0h1v1h-1zm12 0h1v1h-1zm12 0h1v1h-1zm12 0h1v1h-1zm13 0h1v1h-1zm12 0h1v1h-1zm12 0h1v1h-1zm12 0h1v1h-1zm12 0h1v1h-1zm12 0h1v1h-1zm12 0h1v1h-1zm12 0h1v1h-1zm13 0h1v1h-1zm12 0h1v1h-1zm12 0h1v1h-1zm12 0h1v1h-1zm12 0h1v1h-1zm12 0h1v1h-1zm12 0h1v1h-1zm13 0h1v1h-1zm12 0h1v1h-1zm12 0h1v1h-1zm12 0h1v1h-1zm12 0h1v1h-1zm12 0h1v1h-1zm12 0h1v1h-1zm12 0h1v1h-1zm13 0h1v1h-1zm12 0h1v1h-1zm12 0h1v1h-1zm12 0h1v1h-1zm12 0h1v1h-1zm12 0h1v1h-1zm12 0h1v1h-1zm12 0h1v1h-1zm13 0h1v1h-1zm12 0h1v1h-1zm12 0h1v1h-1zm12 0h1v1h-1zm12 0h1v1h-1zm12 0h1v1h-1zm12 0h1v1h-1zm13 0h1v1h-1zm12 0h1v1h-1zm12 0h1v1h-1zm12 0h1v1h-1zm12 0h1v1h-1zm12 0h1v1h-1zm12 0h1v1h-1zm12 0h1v1h-1zm13 0h1v1h-1zm12 0h1v1h-1zm12 0h1v1h-1zm12 0h1v1h-1zm12 0h1v1h-1zm12 0h1v1h-1zm12 0h1v1h-1zm13 0h1v1h-1zm12 0h1v1h-1zM2 366h1v1h-1zm12 0h1v1h-1zm12 0h1v1h-1zm12 0h1v1h-1zm13 0h1v1h-1zm12 0h1v1h-1zm12 0h1v1h-1zm12 0h1v1h-1zm12 0h1v1h-1zm12 0h1v1h-1zm12 0h1v1h-1zm12 0h1v1h-1zm13 0h1v1h-1zm12 0h1v1h-1zm12 0h1v1h-1zm12 0h1v1h-1zm12 0h1v1h-1zm12 0h1v1h-1zm12 0h1v1h-1zm13 0h1v1h-1zm12 0h1v1h-1zm12 0h1v1h-1zm12 0h1v1h-1zm12 0h1v1h-1zm12 0h1v1h-1zm12 0h1v1h-1zm12 0h1v1h-1zm13 0h1v1h-1zm12 0h1v1h-1zm12 0h1v1h-1zm12 0h1v1h-1zm12 0h1v1h-1zm12 0h1v1h-1zm12 0h1v1h-1zm13 0h1v1h-1zm12 0h1v1h-1zm12 0h1v1h-1zm12 0h1v1h-1zm12 0h1v1h-1zm12 0h1v1h-1zm12 0h1v1h-1zm12 0h1v1h-1zm13 0h1v1h-1zm12 0h1v1h-1zm12 0h1v1h-1zm12 0h1v1h-1zm12 0h1v1h-1zm12 0h1v1h-1zm12 0h1v1h-1zm12 0h1v1h-1zm13 0h1v1h-1zm12 0h1v1h-1zm12 0h1v1h-1zm12 0h1v1h-1zm12 0h1v1h-1zm12 0h1v1h-1zm12 0h1v1h-1zm13 0h1v1h-1zm12 0h1v1h-1zm12 0h1v1h-1zm12 0h1v1h-1zm12 0h1v1h-1zm12 0h1v1h-1zm12 0h1v1h-1zm12 0h1v1h-1zm13 0h1v1h-1zm12 0h1v1h-1zm12 0h1v1h-1zm12 0h1v1h-1zm12 0h1v1h-1zm12 0h1v1h-1zm12 0h1v1h-1zm12 0h1v1h-1zm13 0h1v1h-1zm12 0h1v1h-1zm12 0h1v1h-1zm12 0h1v1h-1zm12 0h1v1h-1zm12 0h1v1h-1zm12 0h1v1h-1zm13 0h1v1h-1zm12 0h1v1h-1zm12 0h1v1h-1zm12 0h1v1h-1zm12 0h1v1h-1zm12 0h1v1h-1zm12 0h1v1h-1zm12 0h1v1h-1zm13 0h1v1h-1zm12 0h1v1h-1zm12 0h1v1h-1zm12 0h1v1h-1zm12 0h1v1h-1zm12 0h1v1h-1zm12 0h1v1h-1zm12 0h1v1h-1zm13 0h1v1h-1zm12 0h1v1h-1zm12 0h1v1h-1zm12 0h1v1h-1zm12 0h1v1h-1zm12 0h1v1h-1zm12 0h1v1h-1zm13 0h1v1h-1zm12 0h1v1h-1zm12 0h1v1h-1zm12 0h1v1h-1zm12 0h1v1h-1zm12 0h1v1h-1zm12 0h1v1h-1zm12 0h1v1h-1zm13 0h1v1h-1zm12 0h1v1h-1zm12 0h1v1h-1zm12 0h1v1h-1zm12 0h1v1h-1zm12 0h1v1h-1zm12 0h1v1h-1zm13 0h1v1h-1zm12 0h1v1h-1zM2 378h1v1h-1zm12 0h1v1h-1zm12 0h1v1h-1zm12 0h1v1h-1zm13 0h1v1h-1zm12 0h1v1h-1zm12 0h1v1h-1zm12 0h1v1h-1zm12 0h1v1h-1zm12 0h1v1h-1zm12 0h1v1h-1zm12 0h1v1h-1zm13 0h1v1h-1zm12 0h1v1h-1zm12 0h1v1h-1zm12 0h1v1h-1zm12 0h1v1h-1zm12 0h1v1h-1zm12 0h1v1h-1zm13 0h1v1h-1zm12 0h1v1h-1zm12 0h1v1h-1zm12 0h1v1h-1zm12 0h1v1h-1zm12 0h1v1h-1zm12 0h1v1h-1zm12 0h1v1h-1zm13 0h1v1h-1zm12 0h1v1h-1zm12 0h1v1h-1zm12 0h1v1h-1zm12 0h1v1h-1zm12 0h1v1h-1zm12 0h1v1h-1zm13 0h1v1h-1zm12 0h1v1h-1zm12 0h1v1h-1zm12 0h1v1h-1zm12 0h1v1h-1zm12 0h1v1h-1zm12 0h1v1h-1zm12 0h1v1h-1zm13 0h1v1h-1zm12 0h1v1h-1zm12 0h1v1h-1zm12 0h1v1h-1zm12 0h1v1h-1zm12 0h1v1h-1zm12 0h1v1h-1zm12 0h1v1h-1zm13 0h1v1h-1zm12 0h1v1h-1zm12 0h1v1h-1zm12 0h1v1h-1zm12 0h1v1h-1zm12 0h1v1h-1zm12 0h1v1h-1zm13 0h1v1h-1zm12 0h1v1h-1zm12 0h1v1h-1zm12 0h1v1h-1zm12 0h1v1h-1zm12 0h1v1h-1zm12 0h1v1h-1zm12 0h1v1h-1zm13 0h1v1h-1zm12 0h1v1h-1zm12 0h1v1h-1zm12 0h1v1h-1zm12 0h1v1h-1zm12 0h1v1h-1zm12 0h1v1h-1zm12 0h1v1h-1zm13 0h1v1h-1zm12 0h1v1h-1zm12 0h1v1h-1zm12 0h1v1h-1zm12 0h1v1h-1zm12 0h1v1h-1zm12 0h1v1h-1zm13 0h1v1h-1zm12 0h1v1h-1zm12 0h1v1h-1zm12 0h1v1h-1zm12 0h1v1h-1zm12 0h1v1h-1zm12 0h1v1h-1zm12 0h1v1h-1zm13 0h1v1h-1zm12 0h1v1h-1zm12 0h1v1h-1zm12 0h1v1h-1zm12 0h1v1h-1zm12 0h1v1h-1zm12 0h1v1h-1zm12 0h1v1h-1zm13 0h1v1h-1zm12 0h1v1h-1zm12 0h1v1h-1zm12 0h1v1h-1zm12 0h1v1h-1zm12 0h1v1h-1zm12 0h1v1h-1zm13 0h1v1h-1zm12 0h1v1h-1zm12 0h1v1h-1zm12 0h1v1h-1zm12 0h1v1h-1zm12 0h1v1h-1zm12 0h1v1h-1zm12 0h1v1h-1zm13 0h1v1h-1zm12 0h1v1h-1zm12 0h1v1h-1zm12 0h1v1h-1zm12 0h1v1h-1zm12 0h1v1h-1zm12 0h1v1h-1zm13 0h1v1h-1zm12 0h1v1h-1zM2 390h1v1h-1zm12 0h1v1h-1zm12 0h1v1h-1zm12 0h1v1h-1zm13 0h1v1h-1zm12 0h1v1h-1zm12 0h1v1h-1zm12 0h1v1h-1zm12 0h1v1h-1zm12 0h1v1h-1zm12 0h1v1h-1zm12 0h1v1h-1zm13 0h1v1h-1zm12 0h1v1h-1zm12 0h1v1h-1zm12 0h1v1h-1zm12 0h1v1h-1zm12 0h1v1h-1zm12 0h1v1h-1zm13 0h1v1h-1zm12 0h1v1h-1zm12 0h1v1h-1zm12 0h1v1h-1zm12 0h1v1h-1zm12 0h1v1h-1zm12 0h1v1h-1zm12 0h1v1h-1zm13 0h1v1h-1zm12 0h1v1h-1zm12 0h1v1h-1zm12 0h1v1h-1zm12 0h1v1h-1zm12 0h1v1h-1zm12 0h1v1h-1zm13 0h1v1h-1zm12 0h1v1h-1zm12 0h1v1h-1zm12 0h1v1h-1zm12 0h1v1h-1zm12 0h1v1h-1zm12 0h1v1h-1zm12 0h1v1h-1zm13 0h1v1h-1zm12 0h1v1h-1zm12 0h1v1h-1zm12 0h1v1h-1zm12 0h1v1h-1zm12 0h1v1h-1zm12 0h1v1h-1zm12 0h1v1h-1zm13 0h1v1h-1zm12 0h1v1h-1zm12 0h1v1h-1zm12 0h1v1h-1zm12 0h1v1h-1zm12 0h1v1h-1zm12 0h1v1h-1zm13 0h1v1h-1zm12 0h1v1h-1zm12 0h1v1h-1zm12 0h1v1h-1zm12 0h1v1h-1zm12 0h1v1h-1zm12 0h1v1h-1zm12 0h1v1h-1zm13 0h1v1h-1zm12 0h1v1h-1zm12 0h1v1h-1zm12 0h1v1h-1zm12 0h1v1h-1zm12 0h1v1h-1zm12 0h1v1h-1zm12 0h1v1h-1zm13 0h1v1h-1zm12 0h1v1h-1zm12 0h1v1h-1zm12 0h1v1h-1zm12 0h1v1h-1zm12 0h1v1h-1zm12 0h1v1h-1zm13 0h1v1h-1zm12 0h1v1h-1zm12 0h1v1h-1zm12 0h1v1h-1zm12 0h1v1h-1zm12 0h1v1h-1zm12 0h1v1h-1zm12 0h1v1h-1zm13 0h1v1h-1zm12 0h1v1h-1zm12 0h1v1h-1zm12 0h1v1h-1zm12 0h1v1h-1zm12 0h1v1h-1zm12 0h1v1h-1zm12 0h1v1h-1zm13 0h1v1h-1zm12 0h1v1h-1zm12 0h1v1h-1zm12 0h1v1h-1zm12 0h1v1h-1zm12 0h1v1h-1zm12 0h1v1h-1zm13 0h1v1h-1zm12 0h1v1h-1zm12 0h1v1h-1zm12 0h1v1h-1zm12 0h1v1h-1zm12 0h1v1h-1zm12 0h1v1h-1zm12 0h1v1h-1zm13 0h1v1h-1zm12 0h1v1h-1zm12 0h1v1h-1zm12 0h1v1h-1zm12 0h1v1h-1zm12 0h1v1h-1zm12 0h1v1h-1zm13 0h1v1h-1zm12 0h1v1h-1zM2 402h1v1h-1zm12 0h1v1h-1zm12 0h1v1h-1zm12 0h1v1h-1zm13 0h1v1h-1zm12 0h1v1h-1zm12 0h1v1h-1zm12 0h1v1h-1zm12 0h1v1h-1zm12 0h1v1h-1zm12 0h1v1h-1zm12 0h1v1h-1zm13 0h1v1h-1zm12 0h1v1h-1zm12 0h1v1h-1zm12 0h1v1h-1zm12 0h1v1h-1zm12 0h1v1h-1zm12 0h1v1h-1zm13 0h1v1h-1zm12 0h1v1h-1zm12 0h1v1h-1zm12 0h1v1h-1zm12 0h1v1h-1zm12 0h1v1h-1zm12 0h1v1h-1zm12 0h1v1h-1zm13 0h1v1h-1zm12 0h1v1h-1zm12 0h1v1h-1zm12 0h1v1h-1zm12 0h1v1h-1zm12 0h1v1h-1zm12 0h1v1h-1zm13 0h1v1h-1zm12 0h1v1h-1zm12 0h1v1h-1zm12 0h1v1h-1zm12 0h1v1h-1zm12 0h1v1h-1zm12 0h1v1h-1zm12 0h1v1h-1zm13 0h1v1h-1zm12 0h1v1h-1zm12 0h1v1h-1zm12 0h1v1h-1zm12 0h1v1h-1zm12 0h1v1h-1zm12 0h1v1h-1zm12 0h1v1h-1zm13 0h1v1h-1zm12 0h1v1h-1zm12 0h1v1h-1zm12 0h1v1h-1zm12 0h1v1h-1zm12 0h1v1h-1zm12 0h1v1h-1zm13 0h1v1h-1zm12 0h1v1h-1zm12 0h1v1h-1zm12 0h1v1h-1zm12 0h1v1h-1zm12 0h1v1h-1zm12 0h1v1h-1zm12 0h1v1h-1zm13 0h1v1h-1zm12 0h1v1h-1zm12 0h1v1h-1zm12 0h1v1h-1zm12 0h1v1h-1zm12 0h1v1h-1zm12 0h1v1h-1zm12 0h1v1h-1zm13 0h1v1h-1zm12 0h1v1h-1zm12 0h1v1h-1zm12 0h1v1h-1zm12 0h1v1h-1zm12 0h1v1h-1zm12 0h1v1h-1zm13 0h1v1h-1zm12 0h1v1h-1zm12 0h1v1h-1zm12 0h1v1h-1zm12 0h1v1h-1zm12 0h1v1h-1zm12 0h1v1h-1zm12 0h1v1h-1zm13 0h1v1h-1zm12 0h1v1h-1zm12 0h1v1h-1zm12 0h1v1h-1zm12 0h1v1h-1zm12 0h1v1h-1zm12 0h1v1h-1zm12 0h1v1h-1zm13 0h1v1h-1zm12 0h1v1h-1zm12 0h1v1h-1zm12 0h1v1h-1zm12 0h1v1h-1zm12 0h1v1h-1zm12 0h1v1h-1zm13 0h1v1h-1zm12 0h1v1h-1zm12 0h1v1h-1zm12 0h1v1h-1zm12 0h1v1h-1zm12 0h1v1h-1zm12 0h1v1h-1zm12 0h1v1h-1zm13 0h1v1h-1zm12 0h1v1h-1zm12 0h1v1h-1zm12 0h1v1h-1zm12 0h1v1h-1zm12 0h1v1h-1zm12 0h1v1h-1zm13 0h1v1h-1zm12 0h1v1h-1zM2 414h1v1h-1zm12 0h1v1h-1zm12 0h1v1h-1zm12 0h1v1h-1zm13 0h1v1h-1zm12 0h1v1h-1zm12 0h1v1h-1zm12 0h1v1h-1zm12 0h1v1h-1zm12 0h1v1h-1zm12 0h1v1h-1zm12 0h1v1h-1zm13 0h1v1h-1zm12 0h1v1h-1zm12 0h1v1h-1zm12 0h1v1h-1zm12 0h1v1h-1zm12 0h1v1h-1zm12 0h1v1h-1zm13 0h1v1h-1zm12 0h1v1h-1zm12 0h1v1h-1zm12 0h1v1h-1zm12 0h1v1h-1zm12 0h1v1h-1zm12 0h1v1h-1zm12 0h1v1h-1zm13 0h1v1h-1zm12 0h1v1h-1zm12 0h1v1h-1zm12 0h1v1h-1zm12 0h1v1h-1zm12 0h1v1h-1zm12 0h1v1h-1zm13 0h1v1h-1zm12 0h1v1h-1zm12 0h1v1h-1zm12 0h1v1h-1zm12 0h1v1h-1zm12 0h1v1h-1zm12 0h1v1h-1zm12 0h1v1h-1zm13 0h1v1h-1zm12 0h1v1h-1zm12 0h1v1h-1zm12 0h1v1h-1zm12 0h1v1h-1zm12 0h1v1h-1zm12 0h1v1h-1zm12 0h1v1h-1zm13 0h1v1h-1zm12 0h1v1h-1zm12 0h1v1h-1zm12 0h1v1h-1zm12 0h1v1h-1zm12 0h1v1h-1zm12 0h1v1h-1zm13 0h1v1h-1zm12 0h1v1h-1zm12 0h1v1h-1zm12 0h1v1h-1zm12 0h1v1h-1zm12 0h1v1h-1zm12 0h1v1h-1zm12 0h1v1h-1zm13 0h1v1h-1zm12 0h1v1h-1zm12 0h1v1h-1zm12 0h1v1h-1zm12 0h1v1h-1zm12 0h1v1h-1zm12 0h1v1h-1zm12 0h1v1h-1zm13 0h1v1h-1zm12 0h1v1h-1zm12 0h1v1h-1zm12 0h1v1h-1zm12 0h1v1h-1zm12 0h1v1h-1zm12 0h1v1h-1zm13 0h1v1h-1zm12 0h1v1h-1zm12 0h1v1h-1zm12 0h1v1h-1zm12 0h1v1h-1zm12 0h1v1h-1zm12 0h1v1h-1zm12 0h1v1h-1zm13 0h1v1h-1zm12 0h1v1h-1zm12 0h1v1h-1zm12 0h1v1h-1zm12 0h1v1h-1zm12 0h1v1h-1zm12 0h1v1h-1zm12 0h1v1h-1zm13 0h1v1h-1zm12 0h1v1h-1zm12 0h1v1h-1zm12 0h1v1h-1zm12 0h1v1h-1zm12 0h1v1h-1zm12 0h1v1h-1zm13 0h1v1h-1zm12 0h1v1h-1zm12 0h1v1h-1zm12 0h1v1h-1zm12 0h1v1h-1zm12 0h1v1h-1zm12 0h1v1h-1zm12 0h1v1h-1zm13 0h1v1h-1zm12 0h1v1h-1zm12 0h1v1h-1zm12 0h1v1h-1zm12 0h1v1h-1zm12 0h1v1h-1zm12 0h1v1h-1zm13 0h1v1h-1zm12 0h1v1h-1zM2 427h1v1h-1zm12 0h1v1h-1zm12 0h1v1h-1zm12 0h1v1h-1zm13 0h1v1h-1zm12 0h1v1h-1zm12 0h1v1h-1zm12 0h1v1h-1zm12 0h1v1h-1zm12 0h1v1h-1zm12 0h1v1h-1zm12 0h1v1h-1zm13 0h1v1h-1zm12 0h1v1h-1zm12 0h1v1h-1zm12 0h1v1h-1zm12 0h1v1h-1zm12 0h1v1h-1zm12 0h1v1h-1zm13 0h1v1h-1zm12 0h1v1h-1zm12 0h1v1h-1zm12 0h1v1h-1zm12 0h1v1h-1zm12 0h1v1h-1zm12 0h1v1h-1zm12 0h1v1h-1zm13 0h1v1h-1zm12 0h1v1h-1zm12 0h1v1h-1zm12 0h1v1h-1zm12 0h1v1h-1zm12 0h1v1h-1zm12 0h1v1h-1zm13 0h1v1h-1zm12 0h1v1h-1zm12 0h1v1h-1zm12 0h1v1h-1zm12 0h1v1h-1zm12 0h1v1h-1zm12 0h1v1h-1zm12 0h1v1h-1zm13 0h1v1h-1zm12 0h1v1h-1zm12 0h1v1h-1zm12 0h1v1h-1zm12 0h1v1h-1zm12 0h1v1h-1zm12 0h1v1h-1zm12 0h1v1h-1zm13 0h1v1h-1zm12 0h1v1h-1zm12 0h1v1h-1zm12 0h1v1h-1zm12 0h1v1h-1zm12 0h1v1h-1zm12 0h1v1h-1zm13 0h1v1h-1zm12 0h1v1h-1zm12 0h1v1h-1zm12 0h1v1h-1zm12 0h1v1h-1zm12 0h1v1h-1zm12 0h1v1h-1zm12 0h1v1h-1zm13 0h1v1h-1zm12 0h1v1h-1zm12 0h1v1h-1zm12 0h1v1h-1zm12 0h1v1h-1zm12 0h1v1h-1zm12 0h1v1h-1zm12 0h1v1h-1zm13 0h1v1h-1zm12 0h1v1h-1zm12 0h1v1h-1zm12 0h1v1h-1zm12 0h1v1h-1zm12 0h1v1h-1zm12 0h1v1h-1zm13 0h1v1h-1zm12 0h1v1h-1zm12 0h1v1h-1zm12 0h1v1h-1zm12 0h1v1h-1zm12 0h1v1h-1zm12 0h1v1h-1zm12 0h1v1h-1zm13 0h1v1h-1zm12 0h1v1h-1zm12 0h1v1h-1zm12 0h1v1h-1zm12 0h1v1h-1zm12 0h1v1h-1zm12 0h1v1h-1zm12 0h1v1h-1zm13 0h1v1h-1zm12 0h1v1h-1zm12 0h1v1h-1zm12 0h1v1h-1zm12 0h1v1h-1zm12 0h1v1h-1zm12 0h1v1h-1zm13 0h1v1h-1zm12 0h1v1h-1zm12 0h1v1h-1zm12 0h1v1h-1zm12 0h1v1h-1zm12 0h1v1h-1zm12 0h1v1h-1zm12 0h1v1h-1zm13 0h1v1h-1zm12 0h1v1h-1zm12 0h1v1h-1zm12 0h1v1h-1zm12 0h1v1h-1zm12 0h1v1h-1zm12 0h1v1h-1zm13 0h1v1h-1zm12 0h1v1h-1zM2 439h1v1h-1zm12 0h1v1h-1zm12 0h1v1h-1zm12 0h1v1h-1zm13 0h1v1h-1zm12 0h1v1h-1zm12 0h1v1h-1zm12 0h1v1h-1zm12 0h1v1h-1zm12 0h1v1h-1zm12 0h1v1h-1zm12 0h1v1h-1zm13 0h1v1h-1zm12 0h1v1h-1zm12 0h1v1h-1zm12 0h1v1h-1zm12 0h1v1h-1zm12 0h1v1h-1zm12 0h1v1h-1zm13 0h1v1h-1zm12 0h1v1h-1zm12 0h1v1h-1zm12 0h1v1h-1zm12 0h1v1h-1zm12 0h1v1h-1zm12 0h1v1h-1zm12 0h1v1h-1zm13 0h1v1h-1zm12 0h1v1h-1zm12 0h1v1h-1zm12 0h1v1h-1zm12 0h1v1h-1zm12 0h1v1h-1zm12 0h1v1h-1zm13 0h1v1h-1zm12 0h1v1h-1zm12 0h1v1h-1zm12 0h1v1h-1zm12 0h1v1h-1zm12 0h1v1h-1zm12 0h1v1h-1zm12 0h1v1h-1zm13 0h1v1h-1zm12 0h1v1h-1zm12 0h1v1h-1zm12 0h1v1h-1zm12 0h1v1h-1zm12 0h1v1h-1zm12 0h1v1h-1zm12 0h1v1h-1zm13 0h1v1h-1zm12 0h1v1h-1zm12 0h1v1h-1zm12 0h1v1h-1zm12 0h1v1h-1zm12 0h1v1h-1zm12 0h1v1h-1zm13 0h1v1h-1zm12 0h1v1h-1zm12 0h1v1h-1zm12 0h1v1h-1zm12 0h1v1h-1zm12 0h1v1h-1zm12 0h1v1h-1zm12 0h1v1h-1zm13 0h1v1h-1zm12 0h1v1h-1zm12 0h1v1h-1zm12 0h1v1h-1zm12 0h1v1h-1zm12 0h1v1h-1zm12 0h1v1h-1zm12 0h1v1h-1zm13 0h1v1h-1zm12 0h1v1h-1zm12 0h1v1h-1zm12 0h1v1h-1zm12 0h1v1h-1zm12 0h1v1h-1zm12 0h1v1h-1zm13 0h1v1h-1zm12 0h1v1h-1zm12 0h1v1h-1zm12 0h1v1h-1zm12 0h1v1h-1zm12 0h1v1h-1zm12 0h1v1h-1zm12 0h1v1h-1zm13 0h1v1h-1zm12 0h1v1h-1zm12 0h1v1h-1zm12 0h1v1h-1zm12 0h1v1h-1zm12 0h1v1h-1zm12 0h1v1h-1zm12 0h1v1h-1zm13 0h1v1h-1zm12 0h1v1h-1zm12 0h1v1h-1zm12 0h1v1h-1zm12 0h1v1h-1zm12 0h1v1h-1zm12 0h1v1h-1zm13 0h1v1h-1zm12 0h1v1h-1zm12 0h1v1h-1zm12 0h1v1h-1zm12 0h1v1h-1zm12 0h1v1h-1zm12 0h1v1h-1zm12 0h1v1h-1zm13 0h1v1h-1zm12 0h1v1h-1zm12 0h1v1h-1zm12 0h1v1h-1zm12 0h1v1h-1zm12 0h1v1h-1zm12 0h1v1h-1zm13 0h1v1h-1zm12 0h1v1h-1zM2 451h1v1h-1zm12 0h1v1h-1zm12 0h1v1h-1zm12 0h1v1h-1zm13 0h1v1h-1zm12 0h1v1h-1zm12 0h1v1h-1zm12 0h1v1h-1zm12 0h1v1h-1zm12 0h1v1h-1zm12 0h1v1h-1zm12 0h1v1h-1zm13 0h1v1h-1zm12 0h1v1h-1zm12 0h1v1h-1zm12 0h1v1h-1zm12 0h1v1h-1zm12 0h1v1h-1zm12 0h1v1h-1zm13 0h1v1h-1zm12 0h1v1h-1zm12 0h1v1h-1zm12 0h1v1h-1zm12 0h1v1h-1zm12 0h1v1h-1zm12 0h1v1h-1zm12 0h1v1h-1zm13 0h1v1h-1zm12 0h1v1h-1zm12 0h1v1h-1zm12 0h1v1h-1zm12 0h1v1h-1zm12 0h1v1h-1zm12 0h1v1h-1zm13 0h1v1h-1zm12 0h1v1h-1zm12 0h1v1h-1zm12 0h1v1h-1zm12 0h1v1h-1zm12 0h1v1h-1zm12 0h1v1h-1zm12 0h1v1h-1zm13 0h1v1h-1zm12 0h1v1h-1zm12 0h1v1h-1zm12 0h1v1h-1zm12 0h1v1h-1zm12 0h1v1h-1zm12 0h1v1h-1zm12 0h1v1h-1zm13 0h1v1h-1zm12 0h1v1h-1zm12 0h1v1h-1zm12 0h1v1h-1zm12 0h1v1h-1zm12 0h1v1h-1zm12 0h1v1h-1zm13 0h1v1h-1zm12 0h1v1h-1zm12 0h1v1h-1zm12 0h1v1h-1zm12 0h1v1h-1zm12 0h1v1h-1zm12 0h1v1h-1zm12 0h1v1h-1zm13 0h1v1h-1zm12 0h1v1h-1zm12 0h1v1h-1zm12 0h1v1h-1zm12 0h1v1h-1zm12 0h1v1h-1zm12 0h1v1h-1zm12 0h1v1h-1zm13 0h1v1h-1zm12 0h1v1h-1zm12 0h1v1h-1zm12 0h1v1h-1zm12 0h1v1h-1zm12 0h1v1h-1zm12 0h1v1h-1zm13 0h1v1h-1zm12 0h1v1h-1zm12 0h1v1h-1zm12 0h1v1h-1zm12 0h1v1h-1zm12 0h1v1h-1zm12 0h1v1h-1zm12 0h1v1h-1zm13 0h1v1h-1zm12 0h1v1h-1zm12 0h1v1h-1zm12 0h1v1h-1zm12 0h1v1h-1zm12 0h1v1h-1zm12 0h1v1h-1zm12 0h1v1h-1zm13 0h1v1h-1zm12 0h1v1h-1zm12 0h1v1h-1zm12 0h1v1h-1zm12 0h1v1h-1zm12 0h1v1h-1zm12 0h1v1h-1zm13 0h1v1h-1zm12 0h1v1h-1zm12 0h1v1h-1zm12 0h1v1h-1zm12 0h1v1h-1zm12 0h1v1h-1zm12 0h1v1h-1zm12 0h1v1h-1zm13 0h1v1h-1zm12 0h1v1h-1zm12 0h1v1h-1zm12 0h1v1h-1zm12 0h1v1h-1zm12 0h1v1h-1zm12 0h1v1h-1zm13 0h1v1h-1zm12 0h1v1h-1zM2 463h1v1h-1zm12 0h1v1h-1zm12 0h1v1h-1zm12 0h1v1h-1zm13 0h1v1h-1zm12 0h1v1h-1zm12 0h1v1h-1zm12 0h1v1h-1zm12 0h1v1h-1zm12 0h1v1h-1zm12 0h1v1h-1zm12 0h1v1h-1zm13 0h1v1h-1zm12 0h1v1h-1zm12 0h1v1h-1zm12 0h1v1h-1zm12 0h1v1h-1zm12 0h1v1h-1zm12 0h1v1h-1zm13 0h1v1h-1zm12 0h1v1h-1zm12 0h1v1h-1zm12 0h1v1h-1zm12 0h1v1h-1zm12 0h1v1h-1zm12 0h1v1h-1zm12 0h1v1h-1zm13 0h1v1h-1zm12 0h1v1h-1zm12 0h1v1h-1zm12 0h1v1h-1zm12 0h1v1h-1zm12 0h1v1h-1zm12 0h1v1h-1zm13 0h1v1h-1zm12 0h1v1h-1zm12 0h1v1h-1zm12 0h1v1h-1zm12 0h1v1h-1zm12 0h1v1h-1zm12 0h1v1h-1zm12 0h1v1h-1zm13 0h1v1h-1zm12 0h1v1h-1zm12 0h1v1h-1zm12 0h1v1h-1zm12 0h1v1h-1zm12 0h1v1h-1zm12 0h1v1h-1zm12 0h1v1h-1zm13 0h1v1h-1zm12 0h1v1h-1zm12 0h1v1h-1zm12 0h1v1h-1zm12 0h1v1h-1zm12 0h1v1h-1zm12 0h1v1h-1zm13 0h1v1h-1zm12 0h1v1h-1zm12 0h1v1h-1zm12 0h1v1h-1zm12 0h1v1h-1zm12 0h1v1h-1zm12 0h1v1h-1zm12 0h1v1h-1zm13 0h1v1h-1zm12 0h1v1h-1zm12 0h1v1h-1zm12 0h1v1h-1zm12 0h1v1h-1zm12 0h1v1h-1zm12 0h1v1h-1zm12 0h1v1h-1zm13 0h1v1h-1zm12 0h1v1h-1zm12 0h1v1h-1zm12 0h1v1h-1zm12 0h1v1h-1zm12 0h1v1h-1zm12 0h1v1h-1zm13 0h1v1h-1zm12 0h1v1h-1zm12 0h1v1h-1zm12 0h1v1h-1zm12 0h1v1h-1zm12 0h1v1h-1zm12 0h1v1h-1zm12 0h1v1h-1zm13 0h1v1h-1zm12 0h1v1h-1zm12 0h1v1h-1zm12 0h1v1h-1zm12 0h1v1h-1zm12 0h1v1h-1zm12 0h1v1h-1zm12 0h1v1h-1zm13 0h1v1h-1zm12 0h1v1h-1zm12 0h1v1h-1zm12 0h1v1h-1zm12 0h1v1h-1zm12 0h1v1h-1zm12 0h1v1h-1zm13 0h1v1h-1zm12 0h1v1h-1zm12 0h1v1h-1zm12 0h1v1h-1zm12 0h1v1h-1zm12 0h1v1h-1zm12 0h1v1h-1zm12 0h1v1h-1zm13 0h1v1h-1zm12 0h1v1h-1zm12 0h1v1h-1zm12 0h1v1h-1zm12 0h1v1h-1zm12 0h1v1h-1zm12 0h1v1h-1zm13 0h1v1h-1zm12 0h1v1h-1zM2 475h1v1h-1zm12 0h1v1h-1zm12 0h1v1h-1zm12 0h1v1h-1zm13 0h1v1h-1zm12 0h1v1h-1zm12 0h1v1h-1zm12 0h1v1h-1zm12 0h1v1h-1zm12 0h1v1h-1zm12 0h1v1h-1zm12 0h1v1h-1zm13 0h1v1h-1zm12 0h1v1h-1zm12 0h1v1h-1zm12 0h1v1h-1zm12 0h1v1h-1zm12 0h1v1h-1zm12 0h1v1h-1zm13 0h1v1h-1zm12 0h1v1h-1zm12 0h1v1h-1zm12 0h1v1h-1zm12 0h1v1h-1zm12 0h1v1h-1zm12 0h1v1h-1zm12 0h1v1h-1zm13 0h1v1h-1zm12 0h1v1h-1zm12 0h1v1h-1zm12 0h1v1h-1zm12 0h1v1h-1zm12 0h1v1h-1zm12 0h1v1h-1zm13 0h1v1h-1zm12 0h1v1h-1zm12 0h1v1h-1zm12 0h1v1h-1zm12 0h1v1h-1zm12 0h1v1h-1zm12 0h1v1h-1zm12 0h1v1h-1zm13 0h1v1h-1zm12 0h1v1h-1zm12 0h1v1h-1zm12 0h1v1h-1zm12 0h1v1h-1zm12 0h1v1h-1zm12 0h1v1h-1zm12 0h1v1h-1zm13 0h1v1h-1zm12 0h1v1h-1zm12 0h1v1h-1zm12 0h1v1h-1zm12 0h1v1h-1zm12 0h1v1h-1zm12 0h1v1h-1zm13 0h1v1h-1zm12 0h1v1h-1zm12 0h1v1h-1zm12 0h1v1h-1zm12 0h1v1h-1zm12 0h1v1h-1zm12 0h1v1h-1zm12 0h1v1h-1zm13 0h1v1h-1zm12 0h1v1h-1zm12 0h1v1h-1zm12 0h1v1h-1zm12 0h1v1h-1zm12 0h1v1h-1zm12 0h1v1h-1zm12 0h1v1h-1zm13 0h1v1h-1zm12 0h1v1h-1zm12 0h1v1h-1zm12 0h1v1h-1zm12 0h1v1h-1zm12 0h1v1h-1zm12 0h1v1h-1zm13 0h1v1h-1zm12 0h1v1h-1zm12 0h1v1h-1zm12 0h1v1h-1zm12 0h1v1h-1zm12 0h1v1h-1zm12 0h1v1h-1zm12 0h1v1h-1zm13 0h1v1h-1zm12 0h1v1h-1zm12 0h1v1h-1zm12 0h1v1h-1zm12 0h1v1h-1zm12 0h1v1h-1zm12 0h1v1h-1zm12 0h1v1h-1zm13 0h1v1h-1zm12 0h1v1h-1zm12 0h1v1h-1zm12 0h1v1h-1zm12 0h1v1h-1zm12 0h1v1h-1zm12 0h1v1h-1zm13 0h1v1h-1zm12 0h1v1h-1zm12 0h1v1h-1zm12 0h1v1h-1zm12 0h1v1h-1zm12 0h1v1h-1zm12 0h1v1h-1zm12 0h1v1h-1zm13 0h1v1h-1zm12 0h1v1h-1zm12 0h1v1h-1zm12 0h1v1h-1zm12 0h1v1h-1zm12 0h1v1h-1zm12 0h1v1h-1zm13 0h1v1h-1zm12 0h1v1h-1zM2 487h1v1h-1zm12 0h1v1h-1zm12 0h1v1h-1zm12 0h1v1h-1zm13 0h1v1h-1zm12 0h1v1h-1zm12 0h1v1h-1zm12 0h1v1h-1zm12 0h1v1h-1zm12 0h1v1h-1zm12 0h1v1h-1zm12 0h1v1h-1zm13 0h1v1h-1zm12 0h1v1h-1zm12 0h1v1h-1zm12 0h1v1h-1zm12 0h1v1h-1zm12 0h1v1h-1zm12 0h1v1h-1zm13 0h1v1h-1zm12 0h1v1h-1zm12 0h1v1h-1zm12 0h1v1h-1zm12 0h1v1h-1zm12 0h1v1h-1zm12 0h1v1h-1zm12 0h1v1h-1zm13 0h1v1h-1zm12 0h1v1h-1zm12 0h1v1h-1zm12 0h1v1h-1zm12 0h1v1h-1zm12 0h1v1h-1zm12 0h1v1h-1zm13 0h1v1h-1zm12 0h1v1h-1zm12 0h1v1h-1zm12 0h1v1h-1zm12 0h1v1h-1zm12 0h1v1h-1zm12 0h1v1h-1zm12 0h1v1h-1zm13 0h1v1h-1zm12 0h1v1h-1zm12 0h1v1h-1zm12 0h1v1h-1zm12 0h1v1h-1zm12 0h1v1h-1zm12 0h1v1h-1zm12 0h1v1h-1zm13 0h1v1h-1zm12 0h1v1h-1zm12 0h1v1h-1zm12 0h1v1h-1zm12 0h1v1h-1zm12 0h1v1h-1zm12 0h1v1h-1zm13 0h1v1h-1zm12 0h1v1h-1zm12 0h1v1h-1zm12 0h1v1h-1zm12 0h1v1h-1zm12 0h1v1h-1zm12 0h1v1h-1zm12 0h1v1h-1zm13 0h1v1h-1zm12 0h1v1h-1zm12 0h1v1h-1zm12 0h1v1h-1zm12 0h1v1h-1zm12 0h1v1h-1zm12 0h1v1h-1zm12 0h1v1h-1zm13 0h1v1h-1zm12 0h1v1h-1zm12 0h1v1h-1zm12 0h1v1h-1zm12 0h1v1h-1zm12 0h1v1h-1zm12 0h1v1h-1zm13 0h1v1h-1zm12 0h1v1h-1zm12 0h1v1h-1zm12 0h1v1h-1zm12 0h1v1h-1zm12 0h1v1h-1zm12 0h1v1h-1zm12 0h1v1h-1zm13 0h1v1h-1zm12 0h1v1h-1zm12 0h1v1h-1zm12 0h1v1h-1zm12 0h1v1h-1zm12 0h1v1h-1zm12 0h1v1h-1zm12 0h1v1h-1zm13 0h1v1h-1zm12 0h1v1h-1zm12 0h1v1h-1zm12 0h1v1h-1zm12 0h1v1h-1zm12 0h1v1h-1zm12 0h1v1h-1zm13 0h1v1h-1zm12 0h1v1h-1zm12 0h1v1h-1zm12 0h1v1h-1zm12 0h1v1h-1zm12 0h1v1h-1zm12 0h1v1h-1zm12 0h1v1h-1zm13 0h1v1h-1zm12 0h1v1h-1zm12 0h1v1h-1zm12 0h1v1h-1zm12 0h1v1h-1zm12 0h1v1h-1zm12 0h1v1h-1zm13 0h1v1h-1zm12 0h1v1h-1zM2 499h1v1h-1zm12 0h1v1h-1zm12 0h1v1h-1zm12 0h1v1h-1zm13 0h1v1h-1zm12 0h1v1h-1zm12 0h1v1h-1zm12 0h1v1h-1zm12 0h1v1h-1zm12 0h1v1h-1zm12 0h1v1h-1zm12 0h1v1h-1zm13 0h1v1h-1zm12 0h1v1h-1zm12 0h1v1h-1zm12 0h1v1h-1zm12 0h1v1h-1zm12 0h1v1h-1zm12 0h1v1h-1zm13 0h1v1h-1zm12 0h1v1h-1zm12 0h1v1h-1zm12 0h1v1h-1zm12 0h1v1h-1zm12 0h1v1h-1zm12 0h1v1h-1zm12 0h1v1h-1zm13 0h1v1h-1zm12 0h1v1h-1zm12 0h1v1h-1zm12 0h1v1h-1zm12 0h1v1h-1zm12 0h1v1h-1zm12 0h1v1h-1zm13 0h1v1h-1zm12 0h1v1h-1zm12 0h1v1h-1zm12 0h1v1h-1zm12 0h1v1h-1zm12 0h1v1h-1zm12 0h1v1h-1zm12 0h1v1h-1zm13 0h1v1h-1zm12 0h1v1h-1zm12 0h1v1h-1zm12 0h1v1h-1zm12 0h1v1h-1zm12 0h1v1h-1zm12 0h1v1h-1zm12 0h1v1h-1zm13 0h1v1h-1zm12 0h1v1h-1zm12 0h1v1h-1zm12 0h1v1h-1zm12 0h1v1h-1zm12 0h1v1h-1zm12 0h1v1h-1zm13 0h1v1h-1zm12 0h1v1h-1zm12 0h1v1h-1zm12 0h1v1h-1zm12 0h1v1h-1zm12 0h1v1h-1zm12 0h1v1h-1zm12 0h1v1h-1zm13 0h1v1h-1zm12 0h1v1h-1zm12 0h1v1h-1zm12 0h1v1h-1zm12 0h1v1h-1zm12 0h1v1h-1zm12 0h1v1h-1zm12 0h1v1h-1zm13 0h1v1h-1zm12 0h1v1h-1zm12 0h1v1h-1zm12 0h1v1h-1zm12 0h1v1h-1zm12 0h1v1h-1zm12 0h1v1h-1zm13 0h1v1h-1zm12 0h1v1h-1zm12 0h1v1h-1zm12 0h1v1h-1zm12 0h1v1h-1zm12 0h1v1h-1zm12 0h1v1h-1zm12 0h1v1h-1zm13 0h1v1h-1zm12 0h1v1h-1zm12 0h1v1h-1zm12 0h1v1h-1zm12 0h1v1h-1zm12 0h1v1h-1zm12 0h1v1h-1zm12 0h1v1h-1zm13 0h1v1h-1zm12 0h1v1h-1zm12 0h1v1h-1zm12 0h1v1h-1zm12 0h1v1h-1zm12 0h1v1h-1zm12 0h1v1h-1zm13 0h1v1h-1zm12 0h1v1h-1zm12 0h1v1h-1zm12 0h1v1h-1zm12 0h1v1h-1zm12 0h1v1h-1zm12 0h1v1h-1zm12 0h1v1h-1zm13 0h1v1h-1zm12 0h1v1h-1zm12 0h1v1h-1zm12 0h1v1h-1zm12 0h1v1h-1zm12 0h1v1h-1zm12 0h1v1h-1zm13 0h1v1h-1zm12 0h1v1h-1zM2 512h1v1h-1zm12 0h1v1h-1zm12 0h1v1h-1zm12 0h1v1h-1zm13 0h1v1h-1zm12 0h1v1h-1zm12 0h1v1h-1zm12 0h1v1h-1zm12 0h1v1h-1zm12 0h1v1h-1zm12 0h1v1h-1zm12 0h1v1h-1zm13 0h1v1h-1zm12 0h1v1h-1zm12 0h1v1h-1zm12 0h1v1h-1zm12 0h1v1h-1zm12 0h1v1h-1zm12 0h1v1h-1zm13 0h1v1h-1zm12 0h1v1h-1zm12 0h1v1h-1zm12 0h1v1h-1zm12 0h1v1h-1zm12 0h1v1h-1zm12 0h1v1h-1zm12 0h1v1h-1zm13 0h1v1h-1zm12 0h1v1h-1zm12 0h1v1h-1zm12 0h1v1h-1zm12 0h1v1h-1zm12 0h1v1h-1zm12 0h1v1h-1zm13 0h1v1h-1zm12 0h1v1h-1zm12 0h1v1h-1zm12 0h1v1h-1zm12 0h1v1h-1zm12 0h1v1h-1zm12 0h1v1h-1zm12 0h1v1h-1zm13 0h1v1h-1zm12 0h1v1h-1zm12 0h1v1h-1zm12 0h1v1h-1zm12 0h1v1h-1zm12 0h1v1h-1zm12 0h1v1h-1zm12 0h1v1h-1zm13 0h1v1h-1zm12 0h1v1h-1zm12 0h1v1h-1zm12 0h1v1h-1zm12 0h1v1h-1zm12 0h1v1h-1zm12 0h1v1h-1zm13 0h1v1h-1zm12 0h1v1h-1zm12 0h1v1h-1zm12 0h1v1h-1zm12 0h1v1h-1zm12 0h1v1h-1zm12 0h1v1h-1zm12 0h1v1h-1zm13 0h1v1h-1zm12 0h1v1h-1zm12 0h1v1h-1zm12 0h1v1h-1zm12 0h1v1h-1zm12 0h1v1h-1zm12 0h1v1h-1zm12 0h1v1h-1zm13 0h1v1h-1zm12 0h1v1h-1zm12 0h1v1h-1zm12 0h1v1h-1zm12 0h1v1h-1zm12 0h1v1h-1zm12 0h1v1h-1zm13 0h1v1h-1zm12 0h1v1h-1zm12 0h1v1h-1zm12 0h1v1h-1zm12 0h1v1h-1zm12 0h1v1h-1zm12 0h1v1h-1zm12 0h1v1h-1zm13 0h1v1h-1zm12 0h1v1h-1zm12 0h1v1h-1zm12 0h1v1h-1zm12 0h1v1h-1zm12 0h1v1h-1zm12 0h1v1h-1zm12 0h1v1h-1zm13 0h1v1h-1zm12 0h1v1h-1zm12 0h1v1h-1zm12 0h1v1h-1zm12 0h1v1h-1zm12 0h1v1h-1zm12 0h1v1h-1zm13 0h1v1h-1zm12 0h1v1h-1zm12 0h1v1h-1zm12 0h1v1h-1zm12 0h1v1h-1zm12 0h1v1h-1zm12 0h1v1h-1zm12 0h1v1h-1zm13 0h1v1h-1zm12 0h1v1h-1zm12 0h1v1h-1zm12 0h1v1h-1zm12 0h1v1h-1zm12 0h1v1h-1zm12 0h1v1h-1zm13 0h1v1h-1zm12 0h1v1h-1zM2 524h1v1h-1zm12 0h1v1h-1zm12 0h1v1h-1zm12 0h1v1h-1zm13 0h1v1h-1zm12 0h1v1h-1zm12 0h1v1h-1zm12 0h1v1h-1zm12 0h1v1h-1zm12 0h1v1h-1zm12 0h1v1h-1zm12 0h1v1h-1zm13 0h1v1h-1zm12 0h1v1h-1zm12 0h1v1h-1zm12 0h1v1h-1zm12 0h1v1h-1zm12 0h1v1h-1zm12 0h1v1h-1zm13 0h1v1h-1zm12 0h1v1h-1zm12 0h1v1h-1zm12 0h1v1h-1zm12 0h1v1h-1zm12 0h1v1h-1zm12 0h1v1h-1zm12 0h1v1h-1zm13 0h1v1h-1zm12 0h1v1h-1zm12 0h1v1h-1zm12 0h1v1h-1zm12 0h1v1h-1zm12 0h1v1h-1zm12 0h1v1h-1zm13 0h1v1h-1zm12 0h1v1h-1zm12 0h1v1h-1zm12 0h1v1h-1zm12 0h1v1h-1zm12 0h1v1h-1zm12 0h1v1h-1zm12 0h1v1h-1zm13 0h1v1h-1zm12 0h1v1h-1zm12 0h1v1h-1zm12 0h1v1h-1zm12 0h1v1h-1zm12 0h1v1h-1zm12 0h1v1h-1zm12 0h1v1h-1zm13 0h1v1h-1zm12 0h1v1h-1zm12 0h1v1h-1zm12 0h1v1h-1zm12 0h1v1h-1zm12 0h1v1h-1zm12 0h1v1h-1zm13 0h1v1h-1zm12 0h1v1h-1zm12 0h1v1h-1zm12 0h1v1h-1zm12 0h1v1h-1zm12 0h1v1h-1zm12 0h1v1h-1zm12 0h1v1h-1zm13 0h1v1h-1zm12 0h1v1h-1zm12 0h1v1h-1zm12 0h1v1h-1zm12 0h1v1h-1zm12 0h1v1h-1zm12 0h1v1h-1zm12 0h1v1h-1zm13 0h1v1h-1zm12 0h1v1h-1zm12 0h1v1h-1zm12 0h1v1h-1zm12 0h1v1h-1zm12 0h1v1h-1zm12 0h1v1h-1zm13 0h1v1h-1zm12 0h1v1h-1zm12 0h1v1h-1zm12 0h1v1h-1zm12 0h1v1h-1zm12 0h1v1h-1zm12 0h1v1h-1zm12 0h1v1h-1zm13 0h1v1h-1zm12 0h1v1h-1zm12 0h1v1h-1zm12 0h1v1h-1zm12 0h1v1h-1zm12 0h1v1h-1zm12 0h1v1h-1zm12 0h1v1h-1zm13 0h1v1h-1zm12 0h1v1h-1zm12 0h1v1h-1zm12 0h1v1h-1zm12 0h1v1h-1zm12 0h1v1h-1zm12 0h1v1h-1zm13 0h1v1h-1zm12 0h1v1h-1zm12 0h1v1h-1zm12 0h1v1h-1zm12 0h1v1h-1zm12 0h1v1h-1zm12 0h1v1h-1zm12 0h1v1h-1zm13 0h1v1h-1zm12 0h1v1h-1zm12 0h1v1h-1zm12 0h1v1h-1zm12 0h1v1h-1zm12 0h1v1h-1zm12 0h1v1h-1zm13 0h1v1h-1zm12 0h1v1h-1zM2 536h1v1h-1zm12 0h1v1h-1zm12 0h1v1h-1zm12 0h1v1h-1zm13 0h1v1h-1zm12 0h1v1h-1zm12 0h1v1h-1zm12 0h1v1h-1zm12 0h1v1h-1zm12 0h1v1h-1zm12 0h1v1h-1zm12 0h1v1h-1zm13 0h1v1h-1zm12 0h1v1h-1zm12 0h1v1h-1zm12 0h1v1h-1zm12 0h1v1h-1zm12 0h1v1h-1zm12 0h1v1h-1zm13 0h1v1h-1zm12 0h1v1h-1zm12 0h1v1h-1zm12 0h1v1h-1zm12 0h1v1h-1zm12 0h1v1h-1zm12 0h1v1h-1zm12 0h1v1h-1zm13 0h1v1h-1zm12 0h1v1h-1zm12 0h1v1h-1zm12 0h1v1h-1zm12 0h1v1h-1zm12 0h1v1h-1zm12 0h1v1h-1zm13 0h1v1h-1zm12 0h1v1h-1zm12 0h1v1h-1zm12 0h1v1h-1zm12 0h1v1h-1zm12 0h1v1h-1zm12 0h1v1h-1zm12 0h1v1h-1zm13 0h1v1h-1zm12 0h1v1h-1zm12 0h1v1h-1zm12 0h1v1h-1zm12 0h1v1h-1zm12 0h1v1h-1zm12 0h1v1h-1zm12 0h1v1h-1zm13 0h1v1h-1zm12 0h1v1h-1zm12 0h1v1h-1zm12 0h1v1h-1zm12 0h1v1h-1zm12 0h1v1h-1zm12 0h1v1h-1zm13 0h1v1h-1zm12 0h1v1h-1zm12 0h1v1h-1zm12 0h1v1h-1zm12 0h1v1h-1zm12 0h1v1h-1zm12 0h1v1h-1zm12 0h1v1h-1zm13 0h1v1h-1zm12 0h1v1h-1zm12 0h1v1h-1zm12 0h1v1h-1zm12 0h1v1h-1zm12 0h1v1h-1zm12 0h1v1h-1zm12 0h1v1h-1zm13 0h1v1h-1zm12 0h1v1h-1zm12 0h1v1h-1zm12 0h1v1h-1zm12 0h1v1h-1zm12 0h1v1h-1zm12 0h1v1h-1zm13 0h1v1h-1zm12 0h1v1h-1zm12 0h1v1h-1zm12 0h1v1h-1zm12 0h1v1h-1zm12 0h1v1h-1zm12 0h1v1h-1zm12 0h1v1h-1zm13 0h1v1h-1zm12 0h1v1h-1zm12 0h1v1h-1zm12 0h1v1h-1zm12 0h1v1h-1zm12 0h1v1h-1zm12 0h1v1h-1zm12 0h1v1h-1zm13 0h1v1h-1zm12 0h1v1h-1zm12 0h1v1h-1zm12 0h1v1h-1zm12 0h1v1h-1zm12 0h1v1h-1zm12 0h1v1h-1zm13 0h1v1h-1zm12 0h1v1h-1zm12 0h1v1h-1zm12 0h1v1h-1zm12 0h1v1h-1zm12 0h1v1h-1zm12 0h1v1h-1zm12 0h1v1h-1zm13 0h1v1h-1zm12 0h1v1h-1zm12 0h1v1h-1zm12 0h1v1h-1zm12 0h1v1h-1zm12 0h1v1h-1zm12 0h1v1h-1zm13 0h1v1h-1zm12 0h1v1h-1zM2 548h1v1h-1zm12 0h1v1h-1zm12 0h1v1h-1zm12 0h1v1h-1zm13 0h1v1h-1zm12 0h1v1h-1zm12 0h1v1h-1zm12 0h1v1h-1zm12 0h1v1h-1zm12 0h1v1h-1zm12 0h1v1h-1zm12 0h1v1h-1zm13 0h1v1h-1zm12 0h1v1h-1zm12 0h1v1h-1zm12 0h1v1h-1zm12 0h1v1h-1zm12 0h1v1h-1zm12 0h1v1h-1zm13 0h1v1h-1zm12 0h1v1h-1zm12 0h1v1h-1zm12 0h1v1h-1zm12 0h1v1h-1zm12 0h1v1h-1zm12 0h1v1h-1zm12 0h1v1h-1zm13 0h1v1h-1zm12 0h1v1h-1zm12 0h1v1h-1zm12 0h1v1h-1zm12 0h1v1h-1zm12 0h1v1h-1zm12 0h1v1h-1zm13 0h1v1h-1zm12 0h1v1h-1zm12 0h1v1h-1zm12 0h1v1h-1zm12 0h1v1h-1zm12 0h1v1h-1zm12 0h1v1h-1zm12 0h1v1h-1zm13 0h1v1h-1zm12 0h1v1h-1zm12 0h1v1h-1zm12 0h1v1h-1zm12 0h1v1h-1zm12 0h1v1h-1zm12 0h1v1h-1zm12 0h1v1h-1zm13 0h1v1h-1zm12 0h1v1h-1zm12 0h1v1h-1zm12 0h1v1h-1zm12 0h1v1h-1zm12 0h1v1h-1zm12 0h1v1h-1zm13 0h1v1h-1zm12 0h1v1h-1zm12 0h1v1h-1zm12 0h1v1h-1zm12 0h1v1h-1zm12 0h1v1h-1zm12 0h1v1h-1zm12 0h1v1h-1zm13 0h1v1h-1zm12 0h1v1h-1zm12 0h1v1h-1zm12 0h1v1h-1zm12 0h1v1h-1zm12 0h1v1h-1zm12 0h1v1h-1zm12 0h1v1h-1zm13 0h1v1h-1zm12 0h1v1h-1zm12 0h1v1h-1zm12 0h1v1h-1zm12 0h1v1h-1zm12 0h1v1h-1zm12 0h1v1h-1zm13 0h1v1h-1zm12 0h1v1h-1zm12 0h1v1h-1zm12 0h1v1h-1zm12 0h1v1h-1zm12 0h1v1h-1zm12 0h1v1h-1zm12 0h1v1h-1zm13 0h1v1h-1zm12 0h1v1h-1zm12 0h1v1h-1zm12 0h1v1h-1zm12 0h1v1h-1zm12 0h1v1h-1zm12 0h1v1h-1zm12 0h1v1h-1zm13 0h1v1h-1zm12 0h1v1h-1zm12 0h1v1h-1zm12 0h1v1h-1zm12 0h1v1h-1zm12 0h1v1h-1zm12 0h1v1h-1zm13 0h1v1h-1zm12 0h1v1h-1zm12 0h1v1h-1zm12 0h1v1h-1zm12 0h1v1h-1zm12 0h1v1h-1zm12 0h1v1h-1zm12 0h1v1h-1zm13 0h1v1h-1zm12 0h1v1h-1zm12 0h1v1h-1zm12 0h1v1h-1zm12 0h1v1h-1zm12 0h1v1h-1zm12 0h1v1h-1zm13 0h1v1h-1zm12 0h1v1h-1zM2 560h1v1h-1zm12 0h1v1h-1zm12 0h1v1h-1zm12 0h1v1h-1zm13 0h1v1h-1zm12 0h1v1h-1zm12 0h1v1h-1zm12 0h1v1h-1zm12 0h1v1h-1zm12 0h1v1h-1zm12 0h1v1h-1zm12 0h1v1h-1zm13 0h1v1h-1zm12 0h1v1h-1zm12 0h1v1h-1zm12 0h1v1h-1zm12 0h1v1h-1zm12 0h1v1h-1zm12 0h1v1h-1zm13 0h1v1h-1zm12 0h1v1h-1zm12 0h1v1h-1zm12 0h1v1h-1zm12 0h1v1h-1zm12 0h1v1h-1zm12 0h1v1h-1zm12 0h1v1h-1zm13 0h1v1h-1zm12 0h1v1h-1zm12 0h1v1h-1zm12 0h1v1h-1zm12 0h1v1h-1zm12 0h1v1h-1zm12 0h1v1h-1zm13 0h1v1h-1zm12 0h1v1h-1zm12 0h1v1h-1zm12 0h1v1h-1zm12 0h1v1h-1zm12 0h1v1h-1zm12 0h1v1h-1zm12 0h1v1h-1zm13 0h1v1h-1zm12 0h1v1h-1zm12 0h1v1h-1zm12 0h1v1h-1zm12 0h1v1h-1zm12 0h1v1h-1zm12 0h1v1h-1zm12 0h1v1h-1zm13 0h1v1h-1zm12 0h1v1h-1zm12 0h1v1h-1zm12 0h1v1h-1zm12 0h1v1h-1zm12 0h1v1h-1zm12 0h1v1h-1zm13 0h1v1h-1zm12 0h1v1h-1zm12 0h1v1h-1zm12 0h1v1h-1zm12 0h1v1h-1zm12 0h1v1h-1zm12 0h1v1h-1zm12 0h1v1h-1zm13 0h1v1h-1zm12 0h1v1h-1zm12 0h1v1h-1zm12 0h1v1h-1zm12 0h1v1h-1zm12 0h1v1h-1zm12 0h1v1h-1zm12 0h1v1h-1zm13 0h1v1h-1zm12 0h1v1h-1zm12 0h1v1h-1zm12 0h1v1h-1zm12 0h1v1h-1zm12 0h1v1h-1zm12 0h1v1h-1zm13 0h1v1h-1zm12 0h1v1h-1zm12 0h1v1h-1zm12 0h1v1h-1zm12 0h1v1h-1zm12 0h1v1h-1zm12 0h1v1h-1zm12 0h1v1h-1zm13 0h1v1h-1zm12 0h1v1h-1zm12 0h1v1h-1zm12 0h1v1h-1zm12 0h1v1h-1zm12 0h1v1h-1zm12 0h1v1h-1zm12 0h1v1h-1zm13 0h1v1h-1zm12 0h1v1h-1zm12 0h1v1h-1zm12 0h1v1h-1zm12 0h1v1h-1zm12 0h1v1h-1zm12 0h1v1h-1zm13 0h1v1h-1zm12 0h1v1h-1zm12 0h1v1h-1zm12 0h1v1h-1zm12 0h1v1h-1zm12 0h1v1h-1zm12 0h1v1h-1zm12 0h1v1h-1zm13 0h1v1h-1zm12 0h1v1h-1zm12 0h1v1h-1zm12 0h1v1h-1zm12 0h1v1h-1zm12 0h1v1h-1zm12 0h1v1h-1zm13 0h1v1h-1zm12 0h1v1h-1zM2 572h1v1h-1zm12 0h1v1h-1zm12 0h1v1h-1zm12 0h1v1h-1zm13 0h1v1h-1zm12 0h1v1h-1zm12 0h1v1h-1zm12 0h1v1h-1zm12 0h1v1h-1zm12 0h1v1h-1zm12 0h1v1h-1zm12 0h1v1h-1zm13 0h1v1h-1zm12 0h1v1h-1zm12 0h1v1h-1zm12 0h1v1h-1zm12 0h1v1h-1zm12 0h1v1h-1zm12 0h1v1h-1zm13 0h1v1h-1zm12 0h1v1h-1zm12 0h1v1h-1zm12 0h1v1h-1zm12 0h1v1h-1zm12 0h1v1h-1zm12 0h1v1h-1zm12 0h1v1h-1zm13 0h1v1h-1zm12 0h1v1h-1zm12 0h1v1h-1zm12 0h1v1h-1zm12 0h1v1h-1zm12 0h1v1h-1zm12 0h1v1h-1zm13 0h1v1h-1zm12 0h1v1h-1zm12 0h1v1h-1zm12 0h1v1h-1zm12 0h1v1h-1zm12 0h1v1h-1zm12 0h1v1h-1zm12 0h1v1h-1zm13 0h1v1h-1zm12 0h1v1h-1zm12 0h1v1h-1zm12 0h1v1h-1zm12 0h1v1h-1zm12 0h1v1h-1zm12 0h1v1h-1zm12 0h1v1h-1zm13 0h1v1h-1zm12 0h1v1h-1zm12 0h1v1h-1zm12 0h1v1h-1zm12 0h1v1h-1zm12 0h1v1h-1zm12 0h1v1h-1zm13 0h1v1h-1zm12 0h1v1h-1zm12 0h1v1h-1zm12 0h1v1h-1zm12 0h1v1h-1zm12 0h1v1h-1zm12 0h1v1h-1zm12 0h1v1h-1zm13 0h1v1h-1zm12 0h1v1h-1zm12 0h1v1h-1zm12 0h1v1h-1zm12 0h1v1h-1zm12 0h1v1h-1zm12 0h1v1h-1zm12 0h1v1h-1zm13 0h1v1h-1zm12 0h1v1h-1zm12 0h1v1h-1zm12 0h1v1h-1zm12 0h1v1h-1zm12 0h1v1h-1zm12 0h1v1h-1zm13 0h1v1h-1zm12 0h1v1h-1zm12 0h1v1h-1zm12 0h1v1h-1zm12 0h1v1h-1zm12 0h1v1h-1zm12 0h1v1h-1zm12 0h1v1h-1zm13 0h1v1h-1zm12 0h1v1h-1zm12 0h1v1h-1zm12 0h1v1h-1zm12 0h1v1h-1zm12 0h1v1h-1zm12 0h1v1h-1zm12 0h1v1h-1zm13 0h1v1h-1zm12 0h1v1h-1zm12 0h1v1h-1zm12 0h1v1h-1zm12 0h1v1h-1zm12 0h1v1h-1zm12 0h1v1h-1zm13 0h1v1h-1zm12 0h1v1h-1zm12 0h1v1h-1zm12 0h1v1h-1zm12 0h1v1h-1zm12 0h1v1h-1zm12 0h1v1h-1zm12 0h1v1h-1zm13 0h1v1h-1zm12 0h1v1h-1zm12 0h1v1h-1zm12 0h1v1h-1zm12 0h1v1h-1zm12 0h1v1h-1zm12 0h1v1h-1zm13 0h1v1h-1zm12 0h1v1h-1zM2 584h1v1h-1zm12 0h1v1h-1zm12 0h1v1h-1zm12 0h1v1h-1zm13 0h1v1h-1zm12 0h1v1h-1zm12 0h1v1h-1zm12 0h1v1h-1zm12 0h1v1h-1zm12 0h1v1h-1zm12 0h1v1h-1zm12 0h1v1h-1zm13 0h1v1h-1zm12 0h1v1h-1zm12 0h1v1h-1zm12 0h1v1h-1zm12 0h1v1h-1zm12 0h1v1h-1zm12 0h1v1h-1zm13 0h1v1h-1zm12 0h1v1h-1zm12 0h1v1h-1zm12 0h1v1h-1zm12 0h1v1h-1zm12 0h1v1h-1zm12 0h1v1h-1zm12 0h1v1h-1zm13 0h1v1h-1zm12 0h1v1h-1zm12 0h1v1h-1zm12 0h1v1h-1zm12 0h1v1h-1zm12 0h1v1h-1zm12 0h1v1h-1zm13 0h1v1h-1zm12 0h1v1h-1zm12 0h1v1h-1zm12 0h1v1h-1zm12 0h1v1h-1zm12 0h1v1h-1zm12 0h1v1h-1zm12 0h1v1h-1zm13 0h1v1h-1zm12 0h1v1h-1zm12 0h1v1h-1zm12 0h1v1h-1zm12 0h1v1h-1zm12 0h1v1h-1zm12 0h1v1h-1zm12 0h1v1h-1zm13 0h1v1h-1zm12 0h1v1h-1zm12 0h1v1h-1zm12 0h1v1h-1zm12 0h1v1h-1zm12 0h1v1h-1zm12 0h1v1h-1zm13 0h1v1h-1zm12 0h1v1h-1zm12 0h1v1h-1zm12 0h1v1h-1zm12 0h1v1h-1zm12 0h1v1h-1zm12 0h1v1h-1zm12 0h1v1h-1zm13 0h1v1h-1zm12 0h1v1h-1zm12 0h1v1h-1zm12 0h1v1h-1zm12 0h1v1h-1zm12 0h1v1h-1zm12 0h1v1h-1zm12 0h1v1h-1zm13 0h1v1h-1zm12 0h1v1h-1zm12 0h1v1h-1zm12 0h1v1h-1zm12 0h1v1h-1zm12 0h1v1h-1zm12 0h1v1h-1zm13 0h1v1h-1zm12 0h1v1h-1zm12 0h1v1h-1zm12 0h1v1h-1zm12 0h1v1h-1zm12 0h1v1h-1zm12 0h1v1h-1zm12 0h1v1h-1zm13 0h1v1h-1zm12 0h1v1h-1zm12 0h1v1h-1zm12 0h1v1h-1zm12 0h1v1h-1zm12 0h1v1h-1zm12 0h1v1h-1zm12 0h1v1h-1zm13 0h1v1h-1zm12 0h1v1h-1zm12 0h1v1h-1zm12 0h1v1h-1zm12 0h1v1h-1zm12 0h1v1h-1zm12 0h1v1h-1zm13 0h1v1h-1zm12 0h1v1h-1zm12 0h1v1h-1zm12 0h1v1h-1zm12 0h1v1h-1zm12 0h1v1h-1zm12 0h1v1h-1zm12 0h1v1h-1zm13 0h1v1h-1zm12 0h1v1h-1zm12 0h1v1h-1zm12 0h1v1h-1zm12 0h1v1h-1zm12 0h1v1h-1zm12 0h1v1h-1zm13 0h1v1h-1zm12 0h1v1h-1zM2 596h1v1h-1zm12 0h1v1h-1zm12 0h1v1h-1zm12 0h1v1h-1zm13 0h1v1h-1zm12 0h1v1h-1zm12 0h1v1h-1zm12 0h1v1h-1zm12 0h1v1h-1zm12 0h1v1h-1zm12 0h1v1h-1zm12 0h1v1h-1zm13 0h1v1h-1zm12 0h1v1h-1zm12 0h1v1h-1zm12 0h1v1h-1zm12 0h1v1h-1zm12 0h1v1h-1zm12 0h1v1h-1zm13 0h1v1h-1zm12 0h1v1h-1zm12 0h1v1h-1zm12 0h1v1h-1zm12 0h1v1h-1zm12 0h1v1h-1zm12 0h1v1h-1zm12 0h1v1h-1zm13 0h1v1h-1zm12 0h1v1h-1zm12 0h1v1h-1zm12 0h1v1h-1zm12 0h1v1h-1zm12 0h1v1h-1zm12 0h1v1h-1zm13 0h1v1h-1zm12 0h1v1h-1zm12 0h1v1h-1zm12 0h1v1h-1zm12 0h1v1h-1zm12 0h1v1h-1zm12 0h1v1h-1zm12 0h1v1h-1zm13 0h1v1h-1zm12 0h1v1h-1zm12 0h1v1h-1zm12 0h1v1h-1zm12 0h1v1h-1zm12 0h1v1h-1zm12 0h1v1h-1zm12 0h1v1h-1zm13 0h1v1h-1zm12 0h1v1h-1zm12 0h1v1h-1zm12 0h1v1h-1zm12 0h1v1h-1zm12 0h1v1h-1zm12 0h1v1h-1zm13 0h1v1h-1zm12 0h1v1h-1zm12 0h1v1h-1zm12 0h1v1h-1zm12 0h1v1h-1zm12 0h1v1h-1zm12 0h1v1h-1zm12 0h1v1h-1zm13 0h1v1h-1zm12 0h1v1h-1zm12 0h1v1h-1zm12 0h1v1h-1zm12 0h1v1h-1zm12 0h1v1h-1zm12 0h1v1h-1zm12 0h1v1h-1zm13 0h1v1h-1zm12 0h1v1h-1zm12 0h1v1h-1zm12 0h1v1h-1zm12 0h1v1h-1zm12 0h1v1h-1zm12 0h1v1h-1zm13 0h1v1h-1zm12 0h1v1h-1zm12 0h1v1h-1zm12 0h1v1h-1zm12 0h1v1h-1zm12 0h1v1h-1zm12 0h1v1h-1zm12 0h1v1h-1zm13 0h1v1h-1zm12 0h1v1h-1zm12 0h1v1h-1zm12 0h1v1h-1zm12 0h1v1h-1zm12 0h1v1h-1zm12 0h1v1h-1zm12 0h1v1h-1zm13 0h1v1h-1zm12 0h1v1h-1zm12 0h1v1h-1zm12 0h1v1h-1zm12 0h1v1h-1zm12 0h1v1h-1zm12 0h1v1h-1zm13 0h1v1h-1zm12 0h1v1h-1zm12 0h1v1h-1zm12 0h1v1h-1zm12 0h1v1h-1zm12 0h1v1h-1zm12 0h1v1h-1zm12 0h1v1h-1zm13 0h1v1h-1zm12 0h1v1h-1zm12 0h1v1h-1zm12 0h1v1h-1zm12 0h1v1h-1zm12 0h1v1h-1zm12 0h1v1h-1zm13 0h1v1h-1zm12 0h1v1h-1zM2 609h1v1h-1zm12 0h1v1h-1zm12 0h1v1h-1zm12 0h1v1h-1zm13 0h1v1h-1zm12 0h1v1h-1zm12 0h1v1h-1zm12 0h1v1h-1zm12 0h1v1h-1zm12 0h1v1h-1zm12 0h1v1h-1zm12 0h1v1h-1zm13 0h1v1h-1zm12 0h1v1h-1zm12 0h1v1h-1zm12 0h1v1h-1zm12 0h1v1h-1zm12 0h1v1h-1zm12 0h1v1h-1zm13 0h1v1h-1zm12 0h1v1h-1zm12 0h1v1h-1zm12 0h1v1h-1zm12 0h1v1h-1zm12 0h1v1h-1zm12 0h1v1h-1zm12 0h1v1h-1zm13 0h1v1h-1zm12 0h1v1h-1zm12 0h1v1h-1zm12 0h1v1h-1zm12 0h1v1h-1zm12 0h1v1h-1zm12 0h1v1h-1zm13 0h1v1h-1zm12 0h1v1h-1zm12 0h1v1h-1zm12 0h1v1h-1zm12 0h1v1h-1zm12 0h1v1h-1zm12 0h1v1h-1zm12 0h1v1h-1zm13 0h1v1h-1zm12 0h1v1h-1zm12 0h1v1h-1zm12 0h1v1h-1zm12 0h1v1h-1zm12 0h1v1h-1zm12 0h1v1h-1zm12 0h1v1h-1zm13 0h1v1h-1zm12 0h1v1h-1zm12 0h1v1h-1zm12 0h1v1h-1zm12 0h1v1h-1zm12 0h1v1h-1zm12 0h1v1h-1zm13 0h1v1h-1zm12 0h1v1h-1zm12 0h1v1h-1zm12 0h1v1h-1zm12 0h1v1h-1zm12 0h1v1h-1zm12 0h1v1h-1zm12 0h1v1h-1zm13 0h1v1h-1zm12 0h1v1h-1zm12 0h1v1h-1zm12 0h1v1h-1zm12 0h1v1h-1zm12 0h1v1h-1zm12 0h1v1h-1zm12 0h1v1h-1zm13 0h1v1h-1zm12 0h1v1h-1zm12 0h1v1h-1zm12 0h1v1h-1zm12 0h1v1h-1zm12 0h1v1h-1zm12 0h1v1h-1zm13 0h1v1h-1zm12 0h1v1h-1zm12 0h1v1h-1zm12 0h1v1h-1zm12 0h1v1h-1zm12 0h1v1h-1zm12 0h1v1h-1zm12 0h1v1h-1zm13 0h1v1h-1zm12 0h1v1h-1zm12 0h1v1h-1zm12 0h1v1h-1zm12 0h1v1h-1zm12 0h1v1h-1zm12 0h1v1h-1zm12 0h1v1h-1zm13 0h1v1h-1zm12 0h1v1h-1zm12 0h1v1h-1zm12 0h1v1h-1zm12 0h1v1h-1zm12 0h1v1h-1zm12 0h1v1h-1zm13 0h1v1h-1zm12 0h1v1h-1zm12 0h1v1h-1zm12 0h1v1h-1zm12 0h1v1h-1zm12 0h1v1h-1zm12 0h1v1h-1zm12 0h1v1h-1zm13 0h1v1h-1zm12 0h1v1h-1zm12 0h1v1h-1zm12 0h1v1h-1zm12 0h1v1h-1zm12 0h1v1h-1zm12 0h1v1h-1zm13 0h1v1h-1zm12 0h1v1h-1zM2 621h1v1h-1zm12 0h1v1h-1zm12 0h1v1h-1zm12 0h1v1h-1zm13 0h1v1h-1zm12 0h1v1h-1zm12 0h1v1h-1zm12 0h1v1h-1zm12 0h1v1h-1zm12 0h1v1h-1zm12 0h1v1h-1zm12 0h1v1h-1zm13 0h1v1h-1zm12 0h1v1h-1zm12 0h1v1h-1zm12 0h1v1h-1zm12 0h1v1h-1zm12 0h1v1h-1zm12 0h1v1h-1zm13 0h1v1h-1zm12 0h1v1h-1zm12 0h1v1h-1zm12 0h1v1h-1zm12 0h1v1h-1zm12 0h1v1h-1zm12 0h1v1h-1zm12 0h1v1h-1zm13 0h1v1h-1zm12 0h1v1h-1zm12 0h1v1h-1zm12 0h1v1h-1zm12 0h1v1h-1zm12 0h1v1h-1zm12 0h1v1h-1zm13 0h1v1h-1zm12 0h1v1h-1zm12 0h1v1h-1zm12 0h1v1h-1zm12 0h1v1h-1zm12 0h1v1h-1zm12 0h1v1h-1zm12 0h1v1h-1zm13 0h1v1h-1zm12 0h1v1h-1zm12 0h1v1h-1zm12 0h1v1h-1zm12 0h1v1h-1zm12 0h1v1h-1zm12 0h1v1h-1zm12 0h1v1h-1zm13 0h1v1h-1zm12 0h1v1h-1zm12 0h1v1h-1zm12 0h1v1h-1zm12 0h1v1h-1zm12 0h1v1h-1zm12 0h1v1h-1zm13 0h1v1h-1zm12 0h1v1h-1zm12 0h1v1h-1zm12 0h1v1h-1zm12 0h1v1h-1zm12 0h1v1h-1zm12 0h1v1h-1zm12 0h1v1h-1zm13 0h1v1h-1zm12 0h1v1h-1zm12 0h1v1h-1zm12 0h1v1h-1zm12 0h1v1h-1zm12 0h1v1h-1zm12 0h1v1h-1zm12 0h1v1h-1zm13 0h1v1h-1zm12 0h1v1h-1zm12 0h1v1h-1zm12 0h1v1h-1zm12 0h1v1h-1zm12 0h1v1h-1zm12 0h1v1h-1zm13 0h1v1h-1zm12 0h1v1h-1zm12 0h1v1h-1zm12 0h1v1h-1zm12 0h1v1h-1zm12 0h1v1h-1zm12 0h1v1h-1zm12 0h1v1h-1zm13 0h1v1h-1zm12 0h1v1h-1zm12 0h1v1h-1zm12 0h1v1h-1zm12 0h1v1h-1zm12 0h1v1h-1zm12 0h1v1h-1zm12 0h1v1h-1zm13 0h1v1h-1zm12 0h1v1h-1zm12 0h1v1h-1zm12 0h1v1h-1zm12 0h1v1h-1zm12 0h1v1h-1zm12 0h1v1h-1zm13 0h1v1h-1zm12 0h1v1h-1zm12 0h1v1h-1zm12 0h1v1h-1zm12 0h1v1h-1zm12 0h1v1h-1zm12 0h1v1h-1zm12 0h1v1h-1zm13 0h1v1h-1zm12 0h1v1h-1zm12 0h1v1h-1zm12 0h1v1h-1zm12 0h1v1h-1zm12 0h1v1h-1zm12 0h1v1h-1zm13 0h1v1h-1zm12 0h1v1h-1zM2 633h1v1h-1zm12 0h1v1h-1zm12 0h1v1h-1zm12 0h1v1h-1zm13 0h1v1h-1zm12 0h1v1h-1zm12 0h1v1h-1zm12 0h1v1h-1zm12 0h1v1h-1zm12 0h1v1h-1zm12 0h1v1h-1zm12 0h1v1h-1zm13 0h1v1h-1zm12 0h1v1h-1zm12 0h1v1h-1zm12 0h1v1h-1zm12 0h1v1h-1zm12 0h1v1h-1zm12 0h1v1h-1zm13 0h1v1h-1zm12 0h1v1h-1zm12 0h1v1h-1zm12 0h1v1h-1zm12 0h1v1h-1zm12 0h1v1h-1zm12 0h1v1h-1zm12 0h1v1h-1zm13 0h1v1h-1zm12 0h1v1h-1zm12 0h1v1h-1zm12 0h1v1h-1zm12 0h1v1h-1zm12 0h1v1h-1zm12 0h1v1h-1zm13 0h1v1h-1zm12 0h1v1h-1zm12 0h1v1h-1zm12 0h1v1h-1zm12 0h1v1h-1zm12 0h1v1h-1zm12 0h1v1h-1zm12 0h1v1h-1zm13 0h1v1h-1zm12 0h1v1h-1zm12 0h1v1h-1zm12 0h1v1h-1zm12 0h1v1h-1zm12 0h1v1h-1zm12 0h1v1h-1zm12 0h1v1h-1zm13 0h1v1h-1zm12 0h1v1h-1zm12 0h1v1h-1zm12 0h1v1h-1zm12 0h1v1h-1zm12 0h1v1h-1zm12 0h1v1h-1zm13 0h1v1h-1zm12 0h1v1h-1zm12 0h1v1h-1zm12 0h1v1h-1zm12 0h1v1h-1zm12 0h1v1h-1zm12 0h1v1h-1zm12 0h1v1h-1zm13 0h1v1h-1zm12 0h1v1h-1zm12 0h1v1h-1zm12 0h1v1h-1zm12 0h1v1h-1zm12 0h1v1h-1zm12 0h1v1h-1zm12 0h1v1h-1zm13 0h1v1h-1zm12 0h1v1h-1zm12 0h1v1h-1zm12 0h1v1h-1zm12 0h1v1h-1zm12 0h1v1h-1zm12 0h1v1h-1zm13 0h1v1h-1zm12 0h1v1h-1zm12 0h1v1h-1zm12 0h1v1h-1zm12 0h1v1h-1zm12 0h1v1h-1zm12 0h1v1h-1zm12 0h1v1h-1zm13 0h1v1h-1zm12 0h1v1h-1zm12 0h1v1h-1zm12 0h1v1h-1zm12 0h1v1h-1zm12 0h1v1h-1zm12 0h1v1h-1zm12 0h1v1h-1zm13 0h1v1h-1zm12 0h1v1h-1zm12 0h1v1h-1zm12 0h1v1h-1zm12 0h1v1h-1zm12 0h1v1h-1zm12 0h1v1h-1zm13 0h1v1h-1zm12 0h1v1h-1zm12 0h1v1h-1zm12 0h1v1h-1zm12 0h1v1h-1zm12 0h1v1h-1zm12 0h1v1h-1zm12 0h1v1h-1zm13 0h1v1h-1zm12 0h1v1h-1zm12 0h1v1h-1zm12 0h1v1h-1zm12 0h1v1h-1zm12 0h1v1h-1zm12 0h1v1h-1zm13 0h1v1h-1zm12 0h1v1h-1zM2 645h1v1h-1zm12 0h1v1h-1zm12 0h1v1h-1zm12 0h1v1h-1zm13 0h1v1h-1zm12 0h1v1h-1zm12 0h1v1h-1zm12 0h1v1h-1zm12 0h1v1h-1zm12 0h1v1h-1zm12 0h1v1h-1zm12 0h1v1h-1zm13 0h1v1h-1zm12 0h1v1h-1zm12 0h1v1h-1zm12 0h1v1h-1zm12 0h1v1h-1zm12 0h1v1h-1zm12 0h1v1h-1zm13 0h1v1h-1zm12 0h1v1h-1zm12 0h1v1h-1zm12 0h1v1h-1zm12 0h1v1h-1zm12 0h1v1h-1zm12 0h1v1h-1zm12 0h1v1h-1zm13 0h1v1h-1zm12 0h1v1h-1zm12 0h1v1h-1zm12 0h1v1h-1zm12 0h1v1h-1zm12 0h1v1h-1zm12 0h1v1h-1zm13 0h1v1h-1zm12 0h1v1h-1zm12 0h1v1h-1zm12 0h1v1h-1zm12 0h1v1h-1zm12 0h1v1h-1zm12 0h1v1h-1zm12 0h1v1h-1zm13 0h1v1h-1zm12 0h1v1h-1zm12 0h1v1h-1zm12 0h1v1h-1zm12 0h1v1h-1zm12 0h1v1h-1zm12 0h1v1h-1zm12 0h1v1h-1zm13 0h1v1h-1zm12 0h1v1h-1zm12 0h1v1h-1zm12 0h1v1h-1zm12 0h1v1h-1zm12 0h1v1h-1zm12 0h1v1h-1zm13 0h1v1h-1zm12 0h1v1h-1zm12 0h1v1h-1zm12 0h1v1h-1zm12 0h1v1h-1zm12 0h1v1h-1zm12 0h1v1h-1zm12 0h1v1h-1zm13 0h1v1h-1zm12 0h1v1h-1zm12 0h1v1h-1zm12 0h1v1h-1zm12 0h1v1h-1zm12 0h1v1h-1zm12 0h1v1h-1zm12 0h1v1h-1zm13 0h1v1h-1zm12 0h1v1h-1zm12 0h1v1h-1zm12 0h1v1h-1zm12 0h1v1h-1zm12 0h1v1h-1zm12 0h1v1h-1zm13 0h1v1h-1zm12 0h1v1h-1zm12 0h1v1h-1zm12 0h1v1h-1zm12 0h1v1h-1zm12 0h1v1h-1zm12 0h1v1h-1zm12 0h1v1h-1zm13 0h1v1h-1zm12 0h1v1h-1zm12 0h1v1h-1zm12 0h1v1h-1zm12 0h1v1h-1zm12 0h1v1h-1zm12 0h1v1h-1zm12 0h1v1h-1zm13 0h1v1h-1zm12 0h1v1h-1zm12 0h1v1h-1zm12 0h1v1h-1zm12 0h1v1h-1zm12 0h1v1h-1zm12 0h1v1h-1zm13 0h1v1h-1zm12 0h1v1h-1zm12 0h1v1h-1zm12 0h1v1h-1zm12 0h1v1h-1zm12 0h1v1h-1zm12 0h1v1h-1zm12 0h1v1h-1zm13 0h1v1h-1zm12 0h1v1h-1zm12 0h1v1h-1zm12 0h1v1h-1zm12 0h1v1h-1zm12 0h1v1h-1zm12 0h1v1h-1zm13 0h1v1h-1zm12 0h1v1h-1zM2 657h1v1h-1zm12 0h1v1h-1zm12 0h1v1h-1zm12 0h1v1h-1zm13 0h1v1h-1zm12 0h1v1h-1zm12 0h1v1h-1zm12 0h1v1h-1zm12 0h1v1h-1zm12 0h1v1h-1zm12 0h1v1h-1zm12 0h1v1h-1zm13 0h1v1h-1zm12 0h1v1h-1zm12 0h1v1h-1zm12 0h1v1h-1zm12 0h1v1h-1zm12 0h1v1h-1zm12 0h1v1h-1zm13 0h1v1h-1zm12 0h1v1h-1zm12 0h1v1h-1zm12 0h1v1h-1zm12 0h1v1h-1zm12 0h1v1h-1zm12 0h1v1h-1zm12 0h1v1h-1zm13 0h1v1h-1zm12 0h1v1h-1zm12 0h1v1h-1zm12 0h1v1h-1zm12 0h1v1h-1zm12 0h1v1h-1zm12 0h1v1h-1zm13 0h1v1h-1zm12 0h1v1h-1zm12 0h1v1h-1zm12 0h1v1h-1zm12 0h1v1h-1zm12 0h1v1h-1zm12 0h1v1h-1zm12 0h1v1h-1zm13 0h1v1h-1zm12 0h1v1h-1zm12 0h1v1h-1zm12 0h1v1h-1zm12 0h1v1h-1zm12 0h1v1h-1zm12 0h1v1h-1zm12 0h1v1h-1zm13 0h1v1h-1zm12 0h1v1h-1zm12 0h1v1h-1zm12 0h1v1h-1zm12 0h1v1h-1zm12 0h1v1h-1zm12 0h1v1h-1zm13 0h1v1h-1zm12 0h1v1h-1zm12 0h1v1h-1zm12 0h1v1h-1zm12 0h1v1h-1zm12 0h1v1h-1zm12 0h1v1h-1zm12 0h1v1h-1zm13 0h1v1h-1zm12 0h1v1h-1zm12 0h1v1h-1zm12 0h1v1h-1zm12 0h1v1h-1zm12 0h1v1h-1zm12 0h1v1h-1zm12 0h1v1h-1zm13 0h1v1h-1zm12 0h1v1h-1zm12 0h1v1h-1zm12 0h1v1h-1zm12 0h1v1h-1zm12 0h1v1h-1zm12 0h1v1h-1zm13 0h1v1h-1zm12 0h1v1h-1zm12 0h1v1h-1zm12 0h1v1h-1zm12 0h1v1h-1zm12 0h1v1h-1zm12 0h1v1h-1zm12 0h1v1h-1zm13 0h1v1h-1zm12 0h1v1h-1zm12 0h1v1h-1zm12 0h1v1h-1zm12 0h1v1h-1zm12 0h1v1h-1zm12 0h1v1h-1zm12 0h1v1h-1zm13 0h1v1h-1zm12 0h1v1h-1zm12 0h1v1h-1zm12 0h1v1h-1zm12 0h1v1h-1zm12 0h1v1h-1zm12 0h1v1h-1zm13 0h1v1h-1zm12 0h1v1h-1zm12 0h1v1h-1zm12 0h1v1h-1zm12 0h1v1h-1zm12 0h1v1h-1zm12 0h1v1h-1zm12 0h1v1h-1zm13 0h1v1h-1zm12 0h1v1h-1zm12 0h1v1h-1zm12 0h1v1h-1zm12 0h1v1h-1zm12 0h1v1h-1zm12 0h1v1h-1zm13 0h1v1h-1zm12 0h1v1h-1zM2 669h1v1h-1zm12 0h1v1h-1zm12 0h1v1h-1zm12 0h1v1h-1zm13 0h1v1h-1zm12 0h1v1h-1zm12 0h1v1h-1zm12 0h1v1h-1zm12 0h1v1h-1zm12 0h1v1h-1zm12 0h1v1h-1zm12 0h1v1h-1zm13 0h1v1h-1zm12 0h1v1h-1zm12 0h1v1h-1zm12 0h1v1h-1zm12 0h1v1h-1zm12 0h1v1h-1zm12 0h1v1h-1zm13 0h1v1h-1zm12 0h1v1h-1zm12 0h1v1h-1zm12 0h1v1h-1zm12 0h1v1h-1zm12 0h1v1h-1zm12 0h1v1h-1zm12 0h1v1h-1zm13 0h1v1h-1zm12 0h1v1h-1zm12 0h1v1h-1zm12 0h1v1h-1zm12 0h1v1h-1zm12 0h1v1h-1zm12 0h1v1h-1zm13 0h1v1h-1zm12 0h1v1h-1zm12 0h1v1h-1zm12 0h1v1h-1zm12 0h1v1h-1zm12 0h1v1h-1zm12 0h1v1h-1zm12 0h1v1h-1zm13 0h1v1h-1zm12 0h1v1h-1zm12 0h1v1h-1zm12 0h1v1h-1zm12 0h1v1h-1zm12 0h1v1h-1zm12 0h1v1h-1zm12 0h1v1h-1zm13 0h1v1h-1zm12 0h1v1h-1zm12 0h1v1h-1zm12 0h1v1h-1zm12 0h1v1h-1zm12 0h1v1h-1zm12 0h1v1h-1zm13 0h1v1h-1zm12 0h1v1h-1zm12 0h1v1h-1zm12 0h1v1h-1zm12 0h1v1h-1zm12 0h1v1h-1zm12 0h1v1h-1zm12 0h1v1h-1zm13 0h1v1h-1zm12 0h1v1h-1zm12 0h1v1h-1zm12 0h1v1h-1zm12 0h1v1h-1zm12 0h1v1h-1zm12 0h1v1h-1zm12 0h1v1h-1zm13 0h1v1h-1zm12 0h1v1h-1zm12 0h1v1h-1zm12 0h1v1h-1zm12 0h1v1h-1zm12 0h1v1h-1zm12 0h1v1h-1zm13 0h1v1h-1zm12 0h1v1h-1zm12 0h1v1h-1zm12 0h1v1h-1zm12 0h1v1h-1zm12 0h1v1h-1zm12 0h1v1h-1zm12 0h1v1h-1zm13 0h1v1h-1zm12 0h1v1h-1zm12 0h1v1h-1zm12 0h1v1h-1zm12 0h1v1h-1zm12 0h1v1h-1zm12 0h1v1h-1zm12 0h1v1h-1zm13 0h1v1h-1zm12 0h1v1h-1zm12 0h1v1h-1zm12 0h1v1h-1zm12 0h1v1h-1zm12 0h1v1h-1zm12 0h1v1h-1zm13 0h1v1h-1zm12 0h1v1h-1zm12 0h1v1h-1zm12 0h1v1h-1zm12 0h1v1h-1zm12 0h1v1h-1zm12 0h1v1h-1zm12 0h1v1h-1zm13 0h1v1h-1zm12 0h1v1h-1zm12 0h1v1h-1zm12 0h1v1h-1zm12 0h1v1h-1zm12 0h1v1h-1zm12 0h1v1h-1zm13 0h1v1h-1zm12 0h1v1h-1zM2 681h1v1h-1zm12 0h1v1h-1zm12 0h1v1h-1zm12 0h1v1h-1zm13 0h1v1h-1zm12 0h1v1h-1zm12 0h1v1h-1zm12 0h1v1h-1zm12 0h1v1h-1zm12 0h1v1h-1zm12 0h1v1h-1zm12 0h1v1h-1zm13 0h1v1h-1zm12 0h1v1h-1zm12 0h1v1h-1zm12 0h1v1h-1zm12 0h1v1h-1zm12 0h1v1h-1zm12 0h1v1h-1zm13 0h1v1h-1zm12 0h1v1h-1zm12 0h1v1h-1zm12 0h1v1h-1zm12 0h1v1h-1zm12 0h1v1h-1zm12 0h1v1h-1zm12 0h1v1h-1zm13 0h1v1h-1zm12 0h1v1h-1zm12 0h1v1h-1zm12 0h1v1h-1zm12 0h1v1h-1zm12 0h1v1h-1zm12 0h1v1h-1zm13 0h1v1h-1zm12 0h1v1h-1zm12 0h1v1h-1zm12 0h1v1h-1zm12 0h1v1h-1zm12 0h1v1h-1zm12 0h1v1h-1zm12 0h1v1h-1zm13 0h1v1h-1zm12 0h1v1h-1zm12 0h1v1h-1zm12 0h1v1h-1zm12 0h1v1h-1zm12 0h1v1h-1zm12 0h1v1h-1zm12 0h1v1h-1zm13 0h1v1h-1zm12 0h1v1h-1zm12 0h1v1h-1zm12 0h1v1h-1zm12 0h1v1h-1zm12 0h1v1h-1zm12 0h1v1h-1zm13 0h1v1h-1zm12 0h1v1h-1zm12 0h1v1h-1zm12 0h1v1h-1zm12 0h1v1h-1zm12 0h1v1h-1zm12 0h1v1h-1zm12 0h1v1h-1zm13 0h1v1h-1zm12 0h1v1h-1zm12 0h1v1h-1zm12 0h1v1h-1zm12 0h1v1h-1zm12 0h1v1h-1zm12 0h1v1h-1zm12 0h1v1h-1zm13 0h1v1h-1zm12 0h1v1h-1zm12 0h1v1h-1zm12 0h1v1h-1zm12 0h1v1h-1zm12 0h1v1h-1zm12 0h1v1h-1zm13 0h1v1h-1zm12 0h1v1h-1zm12 0h1v1h-1zm12 0h1v1h-1zm12 0h1v1h-1zm12 0h1v1h-1zm12 0h1v1h-1zm12 0h1v1h-1zm13 0h1v1h-1zm12 0h1v1h-1zm12 0h1v1h-1zm12 0h1v1h-1zm12 0h1v1h-1zm12 0h1v1h-1zm12 0h1v1h-1zm12 0h1v1h-1zm13 0h1v1h-1zm12 0h1v1h-1zm12 0h1v1h-1zm12 0h1v1h-1zm12 0h1v1h-1zm12 0h1v1h-1zm12 0h1v1h-1zm13 0h1v1h-1zm12 0h1v1h-1zm12 0h1v1h-1zm12 0h1v1h-1zm12 0h1v1h-1zm12 0h1v1h-1zm12 0h1v1h-1zm12 0h1v1h-1zm13 0h1v1h-1zm12 0h1v1h-1zm12 0h1v1h-1zm12 0h1v1h-1zm12 0h1v1h-1zm12 0h1v1h-1zm12 0h1v1h-1zm13 0h1v1h-1zm12 0h1v1h-1zM2 693h1v1h-1zm12 0h1v1h-1zm12 0h1v1h-1zm12 0h1v1h-1zm13 0h1v1h-1zm12 0h1v1h-1zm12 0h1v1h-1zm12 0h1v1h-1zm12 0h1v1h-1zm12 0h1v1h-1zm12 0h1v1h-1zm12 0h1v1h-1zm13 0h1v1h-1zm12 0h1v1h-1zm12 0h1v1h-1zm12 0h1v1h-1zm12 0h1v1h-1zm12 0h1v1h-1zm12 0h1v1h-1zm13 0h1v1h-1zm12 0h1v1h-1zm12 0h1v1h-1zm12 0h1v1h-1zm12 0h1v1h-1zm12 0h1v1h-1zm12 0h1v1h-1zm12 0h1v1h-1zm13 0h1v1h-1zm12 0h1v1h-1zm12 0h1v1h-1zm12 0h1v1h-1zm12 0h1v1h-1zm12 0h1v1h-1zm12 0h1v1h-1zm13 0h1v1h-1zm12 0h1v1h-1zm12 0h1v1h-1zm12 0h1v1h-1zm12 0h1v1h-1zm12 0h1v1h-1zm12 0h1v1h-1zm12 0h1v1h-1zm13 0h1v1h-1zm12 0h1v1h-1zm12 0h1v1h-1zm12 0h1v1h-1zm12 0h1v1h-1zm12 0h1v1h-1zm12 0h1v1h-1zm12 0h1v1h-1zm13 0h1v1h-1zm12 0h1v1h-1zm12 0h1v1h-1zm12 0h1v1h-1zm12 0h1v1h-1zm12 0h1v1h-1zm12 0h1v1h-1zm13 0h1v1h-1zm12 0h1v1h-1zm12 0h1v1h-1zm12 0h1v1h-1zm12 0h1v1h-1zm12 0h1v1h-1zm12 0h1v1h-1zm12 0h1v1h-1zm13 0h1v1h-1zm12 0h1v1h-1zm12 0h1v1h-1zm12 0h1v1h-1zm12 0h1v1h-1zm12 0h1v1h-1zm12 0h1v1h-1zm12 0h1v1h-1zm13 0h1v1h-1zm12 0h1v1h-1zm12 0h1v1h-1zm12 0h1v1h-1zm12 0h1v1h-1zm12 0h1v1h-1zm12 0h1v1h-1zm13 0h1v1h-1zm12 0h1v1h-1zm12 0h1v1h-1zm12 0h1v1h-1zm12 0h1v1h-1zm12 0h1v1h-1zm12 0h1v1h-1zm12 0h1v1h-1zm13 0h1v1h-1zm12 0h1v1h-1zm12 0h1v1h-1zm12 0h1v1h-1zm12 0h1v1h-1zm12 0h1v1h-1zm12 0h1v1h-1zm12 0h1v1h-1zm13 0h1v1h-1zm12 0h1v1h-1zm12 0h1v1h-1zm12 0h1v1h-1zm12 0h1v1h-1zm12 0h1v1h-1zm12 0h1v1h-1zm13 0h1v1h-1zm12 0h1v1h-1zm12 0h1v1h-1zm12 0h1v1h-1zm12 0h1v1h-1zm12 0h1v1h-1zm12 0h1v1h-1zm12 0h1v1h-1zm13 0h1v1h-1zm12 0h1v1h-1zm12 0h1v1h-1zm12 0h1v1h-1zm12 0h1v1h-1zm12 0h1v1h-1zm12 0h1v1h-1zm13 0h1v1h-1zm12 0h1v1h-1zM2 706h1v1h-1zm12 0h1v1h-1zm12 0h1v1h-1zm12 0h1v1h-1zm13 0h1v1h-1zm12 0h1v1h-1zm12 0h1v1h-1zm12 0h1v1h-1zm12 0h1v1h-1zm12 0h1v1h-1zm12 0h1v1h-1zm12 0h1v1h-1zm13 0h1v1h-1zm12 0h1v1h-1zm12 0h1v1h-1zm12 0h1v1h-1zm12 0h1v1h-1zm12 0h1v1h-1zm12 0h1v1h-1zm13 0h1v1h-1zm12 0h1v1h-1zm12 0h1v1h-1zm12 0h1v1h-1zm12 0h1v1h-1zm12 0h1v1h-1zm12 0h1v1h-1zm12 0h1v1h-1zm13 0h1v1h-1zm12 0h1v1h-1zm12 0h1v1h-1zm12 0h1v1h-1zm12 0h1v1h-1zm12 0h1v1h-1zm12 0h1v1h-1zm13 0h1v1h-1zm12 0h1v1h-1zm12 0h1v1h-1zm12 0h1v1h-1zm12 0h1v1h-1zm12 0h1v1h-1zm12 0h1v1h-1zm12 0h1v1h-1zm13 0h1v1h-1zm12 0h1v1h-1zm12 0h1v1h-1zm12 0h1v1h-1zm12 0h1v1h-1zm12 0h1v1h-1zm12 0h1v1h-1zm12 0h1v1h-1zm13 0h1v1h-1zm12 0h1v1h-1zm12 0h1v1h-1zm12 0h1v1h-1zm12 0h1v1h-1zm12 0h1v1h-1zm12 0h1v1h-1zm13 0h1v1h-1zm12 0h1v1h-1zm12 0h1v1h-1zm12 0h1v1h-1zm12 0h1v1h-1zm12 0h1v1h-1zm12 0h1v1h-1zm12 0h1v1h-1zm13 0h1v1h-1zm12 0h1v1h-1zm12 0h1v1h-1zm12 0h1v1h-1zm12 0h1v1h-1zm12 0h1v1h-1zm12 0h1v1h-1zm12 0h1v1h-1zm13 0h1v1h-1zm12 0h1v1h-1zm12 0h1v1h-1zm12 0h1v1h-1zm12 0h1v1h-1zm12 0h1v1h-1zm12 0h1v1h-1zm13 0h1v1h-1zm12 0h1v1h-1zm12 0h1v1h-1zm12 0h1v1h-1zm12 0h1v1h-1zm12 0h1v1h-1zm12 0h1v1h-1zm12 0h1v1h-1zm13 0h1v1h-1zm12 0h1v1h-1zm12 0h1v1h-1zm12 0h1v1h-1zm12 0h1v1h-1zm12 0h1v1h-1zm12 0h1v1h-1zm12 0h1v1h-1zm13 0h1v1h-1zm12 0h1v1h-1zm12 0h1v1h-1zm12 0h1v1h-1zm12 0h1v1h-1zm12 0h1v1h-1zm12 0h1v1h-1zm13 0h1v1h-1zm12 0h1v1h-1zm12 0h1v1h-1zm12 0h1v1h-1zm12 0h1v1h-1zm12 0h1v1h-1zm12 0h1v1h-1zm12 0h1v1h-1zm13 0h1v1h-1zm12 0h1v1h-1zm12 0h1v1h-1zm12 0h1v1h-1zm12 0h1v1h-1zm12 0h1v1h-1zm12 0h1v1h-1zm13 0h1v1h-1zm12 0h1v1h-1zM2 718h1v1h-1zm12 0h1v1h-1zm12 0h1v1h-1zm12 0h1v1h-1zm13 0h1v1h-1zm12 0h1v1h-1zm12 0h1v1h-1zm12 0h1v1h-1zm12 0h1v1h-1zm12 0h1v1h-1zm12 0h1v1h-1zm12 0h1v1h-1zm13 0h1v1h-1zm12 0h1v1h-1zm12 0h1v1h-1zm12 0h1v1h-1zm12 0h1v1h-1zm12 0h1v1h-1zm12 0h1v1h-1zm13 0h1v1h-1zm12 0h1v1h-1zm12 0h1v1h-1zm12 0h1v1h-1zm12 0h1v1h-1zm12 0h1v1h-1zm12 0h1v1h-1zm12 0h1v1h-1zm13 0h1v1h-1zm12 0h1v1h-1zm12 0h1v1h-1zm12 0h1v1h-1zm12 0h1v1h-1zm12 0h1v1h-1zm12 0h1v1h-1zm13 0h1v1h-1zm12 0h1v1h-1zm12 0h1v1h-1zm12 0h1v1h-1zm12 0h1v1h-1zm12 0h1v1h-1zm12 0h1v1h-1zm12 0h1v1h-1zm13 0h1v1h-1zm12 0h1v1h-1zm12 0h1v1h-1zm12 0h1v1h-1zm12 0h1v1h-1zm12 0h1v1h-1zm12 0h1v1h-1zm12 0h1v1h-1zm13 0h1v1h-1zm12 0h1v1h-1zm12 0h1v1h-1zm12 0h1v1h-1zm12 0h1v1h-1zm12 0h1v1h-1zm12 0h1v1h-1zm13 0h1v1h-1zm12 0h1v1h-1zm12 0h1v1h-1zm12 0h1v1h-1zm12 0h1v1h-1zm12 0h1v1h-1zm12 0h1v1h-1zm12 0h1v1h-1zm13 0h1v1h-1zm12 0h1v1h-1zm12 0h1v1h-1zm12 0h1v1h-1zm12 0h1v1h-1zm12 0h1v1h-1zm12 0h1v1h-1zm12 0h1v1h-1zm13 0h1v1h-1zm12 0h1v1h-1zm12 0h1v1h-1zm12 0h1v1h-1zm12 0h1v1h-1zm12 0h1v1h-1zm12 0h1v1h-1zm13 0h1v1h-1zm12 0h1v1h-1zm12 0h1v1h-1zm12 0h1v1h-1zm12 0h1v1h-1zm12 0h1v1h-1zm12 0h1v1h-1zm12 0h1v1h-1zm13 0h1v1h-1zm12 0h1v1h-1zm12 0h1v1h-1zm12 0h1v1h-1zm12 0h1v1h-1zm12 0h1v1h-1zm12 0h1v1h-1zm12 0h1v1h-1zm13 0h1v1h-1zm12 0h1v1h-1zm12 0h1v1h-1zm12 0h1v1h-1zm12 0h1v1h-1zm12 0h1v1h-1zm12 0h1v1h-1zm13 0h1v1h-1zm12 0h1v1h-1zm12 0h1v1h-1zm12 0h1v1h-1zm12 0h1v1h-1zm12 0h1v1h-1zm12 0h1v1h-1zm12 0h1v1h-1zm13 0h1v1h-1zm12 0h1v1h-1zm12 0h1v1h-1zm12 0h1v1h-1zm12 0h1v1h-1zm12 0h1v1h-1zm12 0h1v1h-1zm13 0h1v1h-1zm12 0h1v1h-1z"/></svg>
<svg id="sch" width="1450" height="720" viewBox="0 0 1450 720">
<line x1="160.5" y1="0" x2="160.5" y2="720" stroke="#b0b0b4" stroke-width="1"/>
<line x1="208.5" y1="1.5" x2="1450" y2="1.5" stroke="#840000" stroke-width="1.3"/>
<line x1="208.5" y1="1.5" x2="208.5" y2="720" stroke="#840000" stroke-width="1.3"/>
<line x1="217.5" y1="11.5" x2="1450" y2="11.5" stroke="#840000" stroke-width="1.3"/>
<line x1="217.5" y1="11.5" x2="217.5" y2="720" stroke="#840000" stroke-width="1.3"/>
<line x1="446.5" y1="1.5" x2="446.5" y2="11.5" stroke="#840000" stroke-width="1.3"/>
<line x1="685.5" y1="1.5" x2="685.5" y2="11.5" stroke="#840000" stroke-width="1.3"/>
<line x1="924.5" y1="1.5" x2="924.5" y2="11.5" stroke="#840000" stroke-width="1.3"/>
<line x1="1163.5" y1="1.5" x2="1163.5" y2="11.5" stroke="#840000" stroke-width="1.3"/>
<line x1="1401.5" y1="1.5" x2="1401.5" y2="11.5" stroke="#840000" stroke-width="1.3"/>
<line x1="208.5" y1="718.5" x2="217.5" y2="718.5" stroke="#840000" stroke-width="1.3"/>
<path d="M329.3 4.8 L330.9 3.6 V9.6 M329 9.6 H333 M567.4 3.6 H570.6 L571.4 4.5 L569 7.2 L568.6 9.6 M567.2 9.6 H571.2 M806.6 3.6 H809.8 V8.9 L809 9.6 H807.2 M807.6 5.6 H809.6 M1046.5 2 V4.6 M1045.3 5.3 V7.6 H1048.6 M1048.6 5.3 V8.9 M1284.3 3.6 H1287.8 M1284.4 3.6 V6.8 M1288 5.3 V8.8 L1287.3 9.6 H1285.6" fill="none" stroke="#840000" stroke-width="1.4"/>
<polyline points="803,196.5 997.5,196.5 997.5,226.5" fill="none" stroke="#008400" stroke-width="1.3"/>
<polyline points="1021.5,226.5 1021.5,196.5 1057.5,196.5" fill="none" stroke="#008400" stroke-width="1.3"/>
<polyline points="851.5,196.5 851.5,213" fill="none" stroke="#008400" stroke-width="1.3"/>
<polyline points="924.5,196.5 924.5,213" fill="none" stroke="#008400" stroke-width="1.3"/>
<polyline points="851.5,251 851.5,263" fill="none" stroke="#008400" stroke-width="1.3"/>
<polyline points="924.5,251 924.5,263" fill="none" stroke="#008400" stroke-width="1.3"/>
<polyline points="851.5,300 851.5,323.5" fill="none" stroke="#008400" stroke-width="1.3"/>
<polyline points="924.5,300 924.5,323.5" fill="none" stroke="#008400" stroke-width="1.3"/>
<polyline points="833.5,323.5 966.5,323.5 966.5,281.5 997.5,281.5" fill="none" stroke="#008400" stroke-width="1.3"/>
<polyline points="997.5,275 997.5,288" fill="none" stroke="#008400" stroke-width="1.3"/>
<polyline points="833.5,336.5 997.5,336.5 997.5,324" fill="none" stroke="#008400" stroke-width="1.3"/>
<polyline points="1021.5,275 1021.5,305.5 1057.5,305.5" fill="none" stroke="#008400" stroke-width="1.3"/>
<polyline points="1094.5,196.5 1313,196.5" fill="none" stroke="#008400" stroke-width="1.3"/>
<polyline points="1130.5,196.5 1130.5,221" fill="none" stroke="#008400" stroke-width="1.3"/>
<polyline points="1130.5,257 1130.5,268.5" fill="none" stroke="#008400" stroke-width="1.3"/>
<circle cx="1130.5" cy="196.5" r="2.6" fill="#008400"/>
<circle cx="1130.5" cy="268.5" r="2.6" fill="#008400"/>
<polyline points="1167,196.5 1167,221" fill="none" stroke="#008400" stroke-width="1.3"/>
<polyline points="1167,257 1167,268.5" fill="none" stroke="#008400" stroke-width="1.3"/>
<circle cx="1167" cy="196.5" r="2.6" fill="#008400"/>
<circle cx="1167" cy="268.5" r="2.6" fill="#008400"/>
<polyline points="1203.5,196.5 1203.5,221" fill="none" stroke="#008400" stroke-width="1.3"/>
<polyline points="1203.5,257 1203.5,268.5" fill="none" stroke="#008400" stroke-width="1.3"/>
<circle cx="1203.5" cy="196.5" r="2.6" fill="#008400"/>
<circle cx="1203.5" cy="268.5" r="2.6" fill="#008400"/>
<polyline points="1240,196.5 1240,221" fill="none" stroke="#008400" stroke-width="1.3"/>
<polyline points="1240,257 1240,268.5" fill="none" stroke="#008400" stroke-width="1.3"/>
<circle cx="1240" cy="196.5" r="2.6" fill="#008400"/>
<circle cx="1240" cy="268.5" r="2.6" fill="#008400"/>
<polyline points="1130.5,268.5 1270.5,268.5 1270.5,208.5 1313,208.5" fill="none" stroke="#008400" stroke-width="1.3"/>
<polyline points="1130.5,268.5 1130.5,305.5" fill="none" stroke="#008400" stroke-width="1.3"/>
<polyline points="1094.5,305.5 1173,305.5" fill="none" stroke="#008400" stroke-width="1.3"/>
<circle cx="1130.5" cy="305.5" r="2.6" fill="#008400"/>
<circle cx="851.5" cy="196.5" r="2.6" fill="#008400"/>
<circle cx="924.5" cy="196.5" r="2.6" fill="#008400"/>
<circle cx="851.5" cy="323.5" r="2.6" fill="#008400"/>
<circle cx="924.5" cy="323.5" r="2.6" fill="#008400"/>
<circle cx="997.5" cy="281.5" r="2.6" fill="#008400"/>
<rect x="827.5" y="208.5" width="48.0" height="49.0" fill="none" stroke="#840000" stroke-width="1.3"/>
<rect x="827.5" y="257.5" width="48.0" height="48.0" fill="none" stroke="#840000" stroke-width="1.3"/>
<rect x="900.5" y="208.5" width="48.0" height="49.0" fill="none" stroke="#840000" stroke-width="1.3"/>
<rect x="900.5" y="257.5" width="48.0" height="48.0" fill="none" stroke="#840000" stroke-width="1.3"/>
<rect x="985.5" y="226.5" width="48.0" height="49.0" fill="none" stroke="#840000" stroke-width="1.3"/>
<rect x="973.5" y="281.5" width="48.0" height="49.0" fill="none" stroke="#840000" stroke-width="1.3"/>
<rect x="1051.5" y="172.5" width="49.0" height="48.0" fill="none" stroke="#840000" stroke-width="1.3"/>
<rect x="1051.5" y="281.5" width="49.0" height="49.0" fill="none" stroke="#840000" stroke-width="1.3"/>
<rect x="1106.5" y="214.5" width="48.0" height="49.0" fill="none" stroke="#840000" stroke-width="1.3"/>
<rect x="1142.5" y="214.5" width="48.0" height="49.0" fill="none" stroke="#840000" stroke-width="1.3"/>
<rect x="1179.5" y="214.5" width="48.0" height="49.0" fill="none" stroke="#840000" stroke-width="1.3"/>
<rect x="1215.5" y="214.5" width="48.0" height="49.0" fill="none" stroke="#840000" stroke-width="1.3"/>
<rect x="1312.5" y="172.5" width="49.0" height="48.0" fill="none" stroke="#840000" stroke-width="1.3"/>
<rect x="821.5" y="336.5" width="48.0" height="48.0" fill="none" stroke="#840000" stroke-width="1.3"/>
<polyline points="790,299.5 821.5,299.5 821.5,348.5 790,348.5" fill="none" stroke="#840000" stroke-width="1.3"/>
<polyline points="833.5,348.5 845.5,348.5 845.5,360" fill="none" stroke="#008400" stroke-width="1.3"/>
<rect x="849.75" y="212.75" width="3.5" height="3.5" fill="none" stroke="#008400" stroke-width="1.1"/>
<rect x="849.75" y="248.75" width="3.5" height="3.5" fill="none" stroke="#008400" stroke-width="1.1"/>
<rect x="849.75" y="260.75" width="3.5" height="3.5" fill="none" stroke="#008400" stroke-width="1.1"/>
<rect x="849.75" y="298.25" width="3.5" height="3.5" fill="none" stroke="#008400" stroke-width="1.1"/>
<rect x="922.75" y="212.75" width="3.5" height="3.5" fill="none" stroke="#008400" stroke-width="1.1"/>
<rect x="922.75" y="248.75" width="3.5" height="3.5" fill="none" stroke="#008400" stroke-width="1.1"/>
<rect x="922.75" y="260.75" width="3.5" height="3.5" fill="none" stroke="#008400" stroke-width="1.1"/>
<rect x="922.75" y="298.25" width="3.5" height="3.5" fill="none" stroke="#008400" stroke-width="1.1"/>
<rect x="831.75" y="321.75" width="3.5" height="3.5" fill="none" stroke="#008400" stroke-width="1.1"/>
<rect x="831.75" y="334.75" width="3.5" height="3.5" fill="none" stroke="#008400" stroke-width="1.1"/>
<rect x="831.75" y="346.75" width="3.5" height="3.5" fill="none" stroke="#008400" stroke-width="1.1"/>
<rect x="843.75" y="358.25" width="3.5" height="3.5" fill="none" stroke="#008400" stroke-width="1.1"/>
<rect x="995.75" y="224.75" width="3.5" height="3.5" fill="none" stroke="#008400" stroke-width="1.1"/>
<rect x="1019.75" y="224.75" width="3.5" height="3.5" fill="none" stroke="#008400" stroke-width="1.1"/>
<rect x="995.75" y="273.25" width="3.5" height="3.5" fill="none" stroke="#008400" stroke-width="1.1"/>
<rect x="1019.75" y="273.25" width="3.5" height="3.5" fill="none" stroke="#008400" stroke-width="1.1"/>
<rect x="995.75" y="286.25" width="3.5" height="3.5" fill="none" stroke="#008400" stroke-width="1.1"/>
<rect x="995.75" y="322.25" width="3.5" height="3.5" fill="none" stroke="#008400" stroke-width="1.1"/>
<rect x="1056.25" y="194.75" width="3.5" height="3.5" fill="none" stroke="#008400" stroke-width="1.1"/>
<rect x="1092.25" y="194.75" width="3.5" height="3.5" fill="none" stroke="#008400" stroke-width="1.1"/>
<rect x="1056.25" y="303.75" width="3.5" height="3.5" fill="none" stroke="#008400" stroke-width="1.1"/>
<rect x="1092.25" y="303.75" width="3.5" height="3.5" fill="none" stroke="#008400" stroke-width="1.1"/>
<rect x="1311.25" y="194.75" width="3.5" height="3.5" fill="none" stroke="#008400" stroke-width="1.1"/>
<rect x="1311.25" y="206.75" width="3.5" height="3.5" fill="none" stroke="#008400" stroke-width="1.1"/>
<rect x="1128.75" y="219.25" width="3.5" height="3.5" fill="none" stroke="#008400" stroke-width="1.1"/>
<rect x="1128.75" y="255.25" width="3.5" height="3.5" fill="none" stroke="#008400" stroke-width="1.1"/>
<rect x="1165.25" y="219.25" width="3.5" height="3.5" fill="none" stroke="#008400" stroke-width="1.1"/>
<rect x="1165.25" y="255.25" width="3.5" height="3.5" fill="none" stroke="#008400" stroke-width="1.1"/>
<rect x="1201.75" y="219.25" width="3.5" height="3.5" fill="none" stroke="#008400" stroke-width="1.1"/>
<rect x="1201.75" y="255.25" width="3.5" height="3.5" fill="none" stroke="#008400" stroke-width="1.1"/>
<rect x="1238.25" y="219.25" width="3.5" height="3.5" fill="none" stroke="#008400" stroke-width="1.1"/>
<rect x="1238.25" y="255.25" width="3.5" height="3.5" fill="none" stroke="#008400" stroke-width="1.1"/>
<g transform="translate(843,229.5) rotate(-90) scale(1.0)"><path d="M0 0.8 L0.8 0 H7.8 L8.8 1 V4.6 L4 8.8 V10" fill="none" stroke="#840000" stroke-width="1.25" stroke-linejoin="round"/><path d="M2.7 16.8 L5.3 16.8 M4 15.5 L4 18.1" stroke="#840000" stroke-width="1.15"/></g>
<g transform="translate(843,245.5) rotate(-90) scale(1.0)"><path d="M0 0.8 L0.8 0 H7.8 L8.8 1 V4.6 L4 8.8 V10" fill="none" stroke="#840000" stroke-width="1.25" stroke-linejoin="round"/><path d="M2.7 16.8 L5.3 16.8 M4 15.5 L4 18.1" stroke="#840000" stroke-width="1.15"/></g>
<g transform="translate(841.5,278.5) rotate(-90) scale(1.0)"><path d="M0 0.8 L0.8 0 H7.8 L8.8 1 V4.6 L4 8.8 V10" fill="none" stroke="#840000" stroke-width="1.25" stroke-linejoin="round"/><path d="M2.7 16.8 L5.3 16.8 M4 15.5 L4 18.1" stroke="#840000" stroke-width="1.15"/></g>
<g transform="translate(841.5,294.5) rotate(-90) scale(1.0)"><path d="M0 0.8 L0.8 0 H7.8 L8.8 1 V4.6 L4 8.8 V10" fill="none" stroke="#840000" stroke-width="1.25" stroke-linejoin="round"/><path d="M2.7 16.8 L5.3 16.8 M4 15.5 L4 18.1" stroke="#840000" stroke-width="1.15"/></g>
<g transform="translate(912,223.3) rotate(0) scale(0.97)"><path d="M0 0.8 L0.8 0 H7.8 L8.8 1 V4.6 L4 8.8 V10" fill="none" stroke="#840000" stroke-width="1.25" stroke-linejoin="round"/><path d="M2.7 16.8 L5.3 16.8 M4 15.5 L4 18.1" stroke="#840000" stroke-width="1.15"/></g>
<g transform="translate(927.5,223.3) rotate(0) scale(0.97)"><path d="M0 0.8 L0.8 0 H7.8 L8.8 1 V4.6 L4 8.8 V10" fill="none" stroke="#840000" stroke-width="1.25" stroke-linejoin="round"/><path d="M2.7 16.8 L5.3 16.8 M4 15.5 L4 18.1" stroke="#840000" stroke-width="1.15"/></g>
<g transform="translate(912,272.6) rotate(0) scale(0.97)"><path d="M0 0.8 L0.8 0 H7.8 L8.8 1 V4.6 L4 8.8 V10" fill="none" stroke="#840000" stroke-width="1.25" stroke-linejoin="round"/><path d="M2.7 16.8 L5.3 16.8 M4 15.5 L4 18.1" stroke="#840000" stroke-width="1.15"/></g>
<g transform="translate(927.5,272.6) rotate(0) scale(0.97)"><path d="M0 0.8 L0.8 0 H7.8 L8.8 1 V4.6 L4 8.8 V10" fill="none" stroke="#840000" stroke-width="1.25" stroke-linejoin="round"/><path d="M2.7 16.8 L5.3 16.8 M4 15.5 L4 18.1" stroke="#840000" stroke-width="1.15"/></g>
<g transform="translate(999,247) rotate(-90) scale(1.0)"><path d="M0 0.8 L0.8 0 H7.8 L8.8 1 V4.6 L4 8.8 V10" fill="none" stroke="#840000" stroke-width="1.25" stroke-linejoin="round"/><path d="M2.7 16.8 L5.3 16.8 M4 15.5 L4 18.1" stroke="#840000" stroke-width="1.15"/></g>
<g transform="translate(999,263) rotate(-90) scale(1.0)"><path d="M0 0.8 L0.8 0 H7.8 L8.8 1 V4.6 L4 8.8 V10" fill="none" stroke="#840000" stroke-width="1.25" stroke-linejoin="round"/><path d="M2.7 16.8 L5.3 16.8 M4 15.5 L4 18.1" stroke="#840000" stroke-width="1.15"/></g>
<g transform="translate(985,296.7) rotate(0) scale(0.95)"><path d="M0 1 L1 0 L7 0 L9 2 L9 4 L8 6 L6 7 L4 8.5 L4 10" fill="none" stroke="#840000" stroke-width="1.25" stroke-linejoin="round"/><path d="M2.7 16.8 L5.3 16.8 M4 15.5 L4 18.1" stroke="#840000" stroke-width="1.15"/></g>
<g transform="translate(1000,296.7) rotate(0) scale(0.95)"><path d="M0 1 L1 0 L7 0 L9 2 L9 4 L8 6 L6 7 L4 8.5 L4 10" fill="none" stroke="#840000" stroke-width="1.25" stroke-linejoin="round"/><path d="M2.7 16.8 L5.3 16.8 M4 15.5 L4 18.1" stroke="#840000" stroke-width="1.15"/></g>
<g transform="translate(1063.5,185.5) rotate(0) scale(1.0)"><path d="M0 1 L1 0 L7 0 L9 2 L9 4 L8 6 L6 7 L4 8.5 L4 10" fill="none" stroke="#840000" stroke-width="1.25" stroke-linejoin="round"/><path d="M2.7 16.8 L5.3 16.8 M4 15.5 L4 18.1" stroke="#840000" stroke-width="1.15"/></g>
<g transform="translate(1079.5,185.5) rotate(0) scale(1.0)"><path d="M0 1 L1 0 L7 0 L9 2 L9 4 L8 6 L6 7 L4 8.5 L4 10" fill="none" stroke="#840000" stroke-width="1.25" stroke-linejoin="round"/><path d="M2.7 16.8 L5.3 16.8 M4 15.5 L4 18.1" stroke="#840000" stroke-width="1.15"/></g>
<g transform="translate(1063.5,294.5) rotate(0) scale(1.0)"><path d="M0 1 L1 0 L7 0 L9 2 L9 4 L8 6 L6 7 L4 8.5 L4 10" fill="none" stroke="#840000" stroke-width="1.25" stroke-linejoin="round"/><path d="M2.7 16.8 L5.3 16.8 M4 15.5 L4 18.1" stroke="#840000" stroke-width="1.15"/></g>
<g transform="translate(1079.5,294.5) rotate(0) scale(1.0)"><path d="M0 1 L1 0 L7 0 L9 2 L9 4 L8 6 L6 7 L4 8.5 L4 10" fill="none" stroke="#840000" stroke-width="1.25" stroke-linejoin="round"/><path d="M2.7 16.8 L5.3 16.8 M4 15.5 L4 18.1" stroke="#840000" stroke-width="1.15"/></g>
<g transform="translate(1118.0,229) rotate(0) scale(1.0)"><path d="M0 0.8 L0.8 0 H7.8 L8.8 1 V4.6 L4 8.8 V10" fill="none" stroke="#840000" stroke-width="1.25" stroke-linejoin="round"/><path d="M2.7 16.8 L5.3 16.8 M4 15.5 L4 18.1" stroke="#840000" stroke-width="1.15"/></g>
<g transform="translate(1134.0,229) rotate(0) scale(1.0)"><path d="M0 0.8 L0.8 0 H7.8 L8.8 1 V4.6 L4 8.8 V10" fill="none" stroke="#840000" stroke-width="1.25" stroke-linejoin="round"/><path d="M2.7 16.8 L5.3 16.8 M4 15.5 L4 18.1" stroke="#840000" stroke-width="1.15"/></g>
<g transform="translate(1154.0,229) rotate(0) scale(1.0)"><path d="M0 0.8 L0.8 0 H7.8 L8.8 1 V4.6 L4 8.8 V10" fill="none" stroke="#840000" stroke-width="1.25" stroke-linejoin="round"/><path d="M2.7 16.8 L5.3 16.8 M4 15.5 L4 18.1" stroke="#840000" stroke-width="1.15"/></g>
<g transform="translate(1170.0,229) rotate(0) scale(1.0)"><path d="M0 0.8 L0.8 0 H7.8 L8.8 1 V4.6 L4 8.8 V10" fill="none" stroke="#840000" stroke-width="1.25" stroke-linejoin="round"/><path d="M2.7 16.8 L5.3 16.8 M4 15.5 L4 18.1" stroke="#840000" stroke-width="1.15"/></g>
<g transform="translate(1191.0,229) rotate(0) scale(1.0)"><path d="M0 0.8 L0.8 0 H7.8 L8.8 1 V4.6 L4 8.8 V10" fill="none" stroke="#840000" stroke-width="1.25" stroke-linejoin="round"/><path d="M2.7 16.8 L5.3 16.8 M4 15.5 L4 18.1" stroke="#840000" stroke-width="1.15"/></g>
<g transform="translate(1207.0,229) rotate(0) scale(1.0)"><path d="M0 0.8 L0.8 0 H7.8 L8.8 1 V4.6 L4 8.8 V10" fill="none" stroke="#840000" stroke-width="1.25" stroke-linejoin="round"/><path d="M2.7 16.8 L5.3 16.8 M4 15.5 L4 18.1" stroke="#840000" stroke-width="1.15"/></g>
<g transform="translate(1227.0,229) rotate(0) scale(1.0)"><path d="M0 0.8 L0.8 0 H7.8 L8.8 1 V4.6 L4 8.8 V10" fill="none" stroke="#840000" stroke-width="1.25" stroke-linejoin="round"/><path d="M2.7 16.8 L5.3 16.8 M4 15.5 L4 18.1" stroke="#840000" stroke-width="1.15"/></g>
<g transform="translate(1243.0,229) rotate(0) scale(1.0)"><path d="M0 0.8 L0.8 0 H7.8 L8.8 1 V4.6 L4 8.8 V10" fill="none" stroke="#840000" stroke-width="1.25" stroke-linejoin="round"/><path d="M2.7 16.8 L5.3 16.8 M4 15.5 L4 18.1" stroke="#840000" stroke-width="1.15"/></g>
<g transform="translate(1324.4,187.5) rotate(0) scale(1.0)"><path d="M0 1 L1 0 L7 0 L9 2 L9 4 L8 6 L6 7 L4 8.5 L4 10" fill="none" stroke="#840000" stroke-width="1.25" stroke-linejoin="round"/><path d="M2.7 16.8 L5.3 16.8 M4 15.5 L4 18.1" stroke="#840000" stroke-width="1.15"/></g>
<g transform="translate(1340.4,187.5) rotate(0) scale(1.0)"><path d="M0 1 L1 0 L7 0 L9 2 L9 4 L8 6 L6 7 L4 8.5 L4 10" fill="none" stroke="#840000" stroke-width="1.25" stroke-linejoin="round"/><path d="M2.7 16.8 L5.3 16.8 M4 15.5 L4 18.1" stroke="#840000" stroke-width="1.15"/></g>
<g transform="translate(833,350) rotate(0) scale(1.0)"><path d="M0 1 L1 0 L7 0 L9 2 L9 4 L8 6 L6 7 L4 8.5 L4 10" fill="none" stroke="#840000" stroke-width="1.25" stroke-linejoin="round"/><path d="M2.7 16.8 L5.3 16.8 M4 15.5 L4 18.1" stroke="#840000" stroke-width="1.15"/></g>
<g transform="translate(849,350) rotate(0) scale(1.0)"><path d="M0 1 L1 0 L7 0 L9 2 L9 4 L8 6 L6 7 L4 8.5 L4 10" fill="none" stroke="#840000" stroke-width="1.25" stroke-linejoin="round"/><path d="M2.7 16.8 L5.3 16.8 M4 15.5 L4 18.1" stroke="#840000" stroke-width="1.15"/></g>
<g transform="translate(840,233.4) rotate(-90) scale(1.0233,1.0000) translate(-4.300,-3.5)" fill="none" stroke="#008484" stroke-width="1.05" vector-effect="non-scaling-stroke" stroke-linecap="round" stroke-linejoin="round"><path transform="translate(0.000,0)" d="M0 0 V7 H2 L4 5 V2 L2 0 Z"/><path transform="translate(5.600,0)" d="M0.3 1.4 L1.5 0 V7 M0 7 H3"/></g>
<g transform="translate(863.7,233) rotate(-90) scale(0.9912,1.0000) translate(-17.050,-3.5)" fill="none" stroke="#008484" stroke-width="1.05" vector-effect="non-scaling-stroke" stroke-linecap="round" stroke-linejoin="round"><path transform="translate(0.000,0)" d="M0 0 V7 H2 L4 5 V2 L2 0 Z"/><path transform="translate(5.600,0)" d="M0 8 H5"/><path transform="translate(12.200,0)" d="M0 0 H4 L0 7 H4"/><path transform="translate(17.800,0)" d="M0 5 H3 V4 L2.2 3 H0.8 L0 4 V6 L0.8 7 H2.6"/><path transform="translate(22.400,0)" d="M0 3 V7 M0 4 L0.8 3 H2.2 L3 4 V7"/><path transform="translate(27.000,0)" d="M0 5 H3 V4 L2.2 3 H0.8 L0 4 V6 L0.8 7 H2.6"/><path transform="translate(31.600,0)" d="M0 3 V7 M0 4.5 L1.2 3 H2.5"/></g>
<g transform="translate(863.6,281) rotate(-90) scale(1.0417,1.0000) translate(-4.800,-3.5)" fill="none" stroke="#008484" stroke-width="1.05" vector-effect="non-scaling-stroke" stroke-linecap="round" stroke-linejoin="round"><path transform="translate(0.000,0)" d="M0 0 V7 H2 L4 5 V2 L2 0 Z"/><path transform="translate(5.600,0)" d="M0 1 L1 0 H3 L4 1 V2.5 L0 7 H4"/></g>
<g transform="translate(839,281.4) rotate(-90) scale(1.0086,1.0000) translate(-23.200,-3.5)" fill="none" stroke="#008484" stroke-width="1.05" vector-effect="non-scaling-stroke" stroke-linecap="round" stroke-linejoin="round"><path transform="translate(0.000,0)" d="M0 0 V7 H2 L4 5 V2 L2 0 Z"/><path transform="translate(5.600,0)" d="M0 8 H5"/><path transform="translate(12.200,0)" d="M4 1 L3 0 H1 L0 1 V2.5 L1 3.5 H3 L4 4.5 V6 L3 7 H1 L0 6"/><path transform="translate(17.800,0)" d="M3 3.6 L2.4 3 H0.8 L0 4 V6 L0.8 7 H2.4 L3 6.4"/><path transform="translate(22.400,0)" d="M0 0 V7 M0 4 L0.8 3 H2.2 L3 4 V7"/><path transform="translate(27.000,0)" d="M0.8 3 H2.2 L3 4 V6 L2.2 7 H0.8 L0 6 V4 Z"/><path transform="translate(31.600,0)" d="M0.7 0 V6.2 L1.4 7 H2 M0 3 H2"/><path transform="translate(35.200,0)" d="M0.7 0 V6.2 L1.4 7 H2 M0 3 H2"/><path transform="translate(38.800,0)" d="M0 0 V7 M3 3 L0 5.5 M1.1 4.6 L3 7"/><path transform="translate(43.400,0)" d="M0 3 L1.5 7 M3 3 L1 9"/></g>
<g transform="translate(933.5,220.3) rotate(0) scale(1.1458,1.0000) translate(-4.800,-3.5)" fill="none" stroke="#008484" stroke-width="1.05" vector-effect="non-scaling-stroke" stroke-linecap="round" stroke-linejoin="round"><path transform="translate(0.000,0)" d="M4 1 L3 0 H1 L0 1.2 V5.8 L1 7 H3 L4 6"/><path transform="translate(5.600,0)" d="M0 1 L1 0 H3 L4 1 V2.5 L2 4 V5 M2 6.6 V7"/></g>
<g transform="translate(930.5,245.5) rotate(0) scale(1.2500,1.0000) translate(-2.000,-3.5)" fill="none" stroke="#008484" stroke-width="1.05" vector-effect="non-scaling-stroke" stroke-linecap="round" stroke-linejoin="round"><path transform="translate(0.000,0)" d="M4 1 L3 0 H1 L0 1.2 V5.8 L1 7 H3 L4 6"/></g>
<g transform="translate(924.5,281.5) rotate(-90) scale(1.1750,1.0000) translate(-2.000,-3.5)" fill="none" stroke="#008484" stroke-width="1.05" vector-effect="non-scaling-stroke" stroke-linecap="round" stroke-linejoin="round"><path transform="translate(0.000,0)" d="M0 7 V0 H3 L4 1 V2.5 L3 3.5 H0 M2 3.5 L4 7"/></g>
<g transform="translate(934.5,280.7) rotate(-90) scale(1.0104,1.0000) translate(-4.800,-3.5)" fill="none" stroke="#008484" stroke-width="1.05" vector-effect="non-scaling-stroke" stroke-linecap="round" stroke-linejoin="round"><path transform="translate(0.000,0)" d="M0 7 V0 H3 L4 1 V2.5 L3 3.5 H0 M2 3.5 L4 7"/><path transform="translate(5.600,0)" d="M0 1 L1 0 H3 L4 1 V2.5 L2 4 V5 M2 6.6 V7"/></g>
<g transform="translate(1009,220.6) rotate(-90) scale(0.9683,1.0000) translate(-7.100,-3.5)" fill="none" stroke="#008484" stroke-width="1.05" vector-effect="non-scaling-stroke" stroke-linecap="round" stroke-linejoin="round"><path transform="translate(0.000,0)" d="M4 0 H0 V7 M0 3.5 H3"/><path transform="translate(5.600,0)" d="M0 0 V7 H4"/><path transform="translate(11.200,0)" d="M0.3 1.4 L1.5 0 V7 M0 7 H3"/></g>
<g transform="translate(998,302.5) rotate(-90) scale(1.1042,1.0000) translate(-4.800,-3.5)" fill="none" stroke="#008484" stroke-width="1.05" vector-effect="non-scaling-stroke" stroke-linecap="round" stroke-linejoin="round"><path transform="translate(0.000,0)" d="M0 7 V0 H3 L4 1 V2.5 L3 3.5 H0 M2 3.5 L4 7"/><path transform="translate(5.600,0)" d="M0 1 L1 0 H3 L4 1 V2.5 L2 4 V5 M2 6.6 V7"/></g>
<g transform="translate(1010.6,329) rotate(-90) scale(1.0644,1.0000) translate(-50.500,-3.5)" fill="none" stroke="#008484" stroke-width="1.05" vector-effect="non-scaling-stroke" stroke-linecap="round" stroke-linejoin="round"><path transform="translate(0.000,0)" d="M4 0 H0 V7 H4 M0 3.5 H3"/><path transform="translate(5.600,0)" d="M0 7 V0 L2.25 4 L4.5 0 V7"/><path transform="translate(11.700,0)" d="M0 0 H2 M1 0 V7 M0 7 H2"/><path transform="translate(15.300,0)" d="M0 8 H5"/><path transform="translate(21.900,0)" d="M4 0 H0 V7 M0 3.5 H3"/><path transform="translate(27.500,0)" d="M0.5 3 V7 M0.5 1 V1.6"/><path transform="translate(30.100,0)" d="M0.2 0 V6.2 L1 7 H1.5"/><path transform="translate(33.200,0)" d="M0.7 0 V6.2 L1.4 7 H2 M0 3 H2"/><path transform="translate(36.800,0)" d="M0 5 H3 V4 L2.2 3 H0.8 L0 4 V6 L0.8 7 H2.6"/><path transform="translate(41.400,0)" d="M0 3 V7 M0 4.5 L1.2 3 H2.5"/><path transform="translate(45.500,0)" d="M0 8 H5"/><path transform="translate(52.100,0)" d="M4 1 L3 0 H1 L0 1.2 V5.8 L1 7 H3 L4 6"/><path transform="translate(57.700,0)" d="M0.8 3 H2.2 L3 4 V6 L2.2 7 H0.8 L0 6 V4 Z"/><path transform="translate(62.300,0)" d="M0 3 V7 M0 4 L0.7 3 H1.3 L2 4 V7 M2 4 L2.7 3 H3.3 L4 4 V7"/><path transform="translate(67.900,0)" d="M0 3 V7 M0 4 L0.7 3 H1.3 L2 4 V7 M2 4 L2.7 3 H3.3 L4 4 V7"/><path transform="translate(73.500,0)" d="M0.8 3 H2.2 L3 4 V6 L2.2 7 H0.8 L0 6 V4 Z"/><path transform="translate(78.100,0)" d="M0 3 V7 M0 4 L0.8 3 H2.2 L3 4 V7"/><path transform="translate(82.700,0)" d="M0 7 V0 L2.25 4 L4.5 0 V7"/><path transform="translate(88.800,0)" d="M0.8 3 H2.2 L3 4 V6 L2.2 7 H0.8 L0 6 V4 Z"/><path transform="translate(93.400,0)" d="M3 0 V7 M3 4 L2.2 3 H0.8 L0 4 V6 L0.8 7 H2.2 L3 6"/><path transform="translate(98.000,0)" d="M0 5 H3 V4 L2.2 3 H0.8 L0 4 V6 L0.8 7 H2.6"/></g>
<g transform="translate(1075.7,183.4) rotate(0) scale(1.0237,1.0000) translate(-23.200,-3.5)" fill="none" stroke="#008484" stroke-width="1.05" vector-effect="non-scaling-stroke" stroke-linecap="round" stroke-linejoin="round"><path transform="translate(0.000,0)" d="M0 0 V7 H2 L4 5 V2 L2 0 Z"/><path transform="translate(5.600,0)" d="M0 8 H5"/><path transform="translate(12.200,0)" d="M4 1 L3 0 H1 L0 1 V2.5 L1 3.5 H3 L4 4.5 V6 L3 7 H1 L0 6"/><path transform="translate(17.800,0)" d="M3 3.6 L2.4 3 H0.8 L0 4 V6 L0.8 7 H2.4 L3 6.4"/><path transform="translate(22.400,0)" d="M0 0 V7 M0 4 L0.8 3 H2.2 L3 4 V7"/><path transform="translate(27.000,0)" d="M0.8 3 H2.2 L3 4 V6 L2.2 7 H0.8 L0 6 V4 Z"/><path transform="translate(31.600,0)" d="M0.7 0 V6.2 L1.4 7 H2 M0 3 H2"/><path transform="translate(35.200,0)" d="M0.7 0 V6.2 L1.4 7 H2 M0 3 H2"/><path transform="translate(38.800,0)" d="M0 0 V7 M3 3 L0 5.5 M1.1 4.6 L3 7"/><path transform="translate(43.400,0)" d="M0 3 L1.5 7 M3 3 L1 9"/></g>
<g transform="translate(1076,208) rotate(0) scale(1.1146,1.0000) translate(-4.800,-3.5)" fill="none" stroke="#008484" stroke-width="1.05" vector-effect="non-scaling-stroke" stroke-linecap="round" stroke-linejoin="round"><path transform="translate(0.000,0)" d="M0 0 V7 H2 L4 5 V2 L2 0 Z"/><path transform="translate(5.600,0)" d="M0 0 H4 L2 3 H3 L4 4 V6 L3 7 H1 L0 6"/></g>
<g transform="translate(1075.7,292.4) rotate(0) scale(1.0237,1.0000) translate(-23.200,-3.5)" fill="none" stroke="#008484" stroke-width="1.05" vector-effect="non-scaling-stroke" stroke-linecap="round" stroke-linejoin="round"><path transform="translate(0.000,0)" d="M0 0 V7 H2 L4 5 V2 L2 0 Z"/><path transform="translate(5.600,0)" d="M0 8 H5"/><path transform="translate(12.200,0)" d="M4 1 L3 0 H1 L0 1 V2.5 L1 3.5 H3 L4 4.5 V6 L3 7 H1 L0 6"/><path transform="translate(17.800,0)" d="M3 3.6 L2.4 3 H0.8 L0 4 V6 L0.8 7 H2.4 L3 6.4"/><path transform="translate(22.400,0)" d="M0 0 V7 M0 4 L0.8 3 H2.2 L3 4 V7"/><path transform="translate(27.000,0)" d="M0.8 3 H2.2 L3 4 V6 L2.2 7 H0.8 L0 6 V4 Z"/><path transform="translate(31.600,0)" d="M0.7 0 V6.2 L1.4 7 H2 M0 3 H2"/><path transform="translate(35.200,0)" d="M0.7 0 V6.2 L1.4 7 H2 M0 3 H2"/><path transform="translate(38.800,0)" d="M0 0 V7 M3 3 L0 5.5 M1.1 4.6 L3 7"/><path transform="translate(43.400,0)" d="M0 3 L1.5 7 M3 3 L1 9"/></g>
<g transform="translate(1076,317) rotate(0) scale(1.1146,1.0000) translate(-4.800,-3.5)" fill="none" stroke="#008484" stroke-width="1.05" vector-effect="non-scaling-stroke" stroke-linecap="round" stroke-linejoin="round"><path transform="translate(0.000,0)" d="M0 0 V7 H2 L4 5 V2 L2 0 Z"/><path transform="translate(5.600,0)" d="M3 7 V0 L0 5 H4"/></g>
<g transform="translate(1140.1,226.4) rotate(0) scale(1.0625,1.0000) translate(-4.800,-3.5)" fill="none" stroke="#008484" stroke-width="1.05" vector-effect="non-scaling-stroke" stroke-linecap="round" stroke-linejoin="round"><path transform="translate(0.000,0)" d="M4 1 L3 0 H1 L0 1.2 V5.8 L1 7 H3 L4 6"/><path transform="translate(5.600,0)" d="M0 0 H4 L2 3 H3 L4 4 V6 L3 7 H1 L0 6"/></g>
<g transform="translate(1137.5,251.2) rotate(0) scale(0.9750,1.0000) translate(-2.000,-3.5)" fill="none" stroke="#008484" stroke-width="1.05" vector-effect="non-scaling-stroke" stroke-linecap="round" stroke-linejoin="round"><path transform="translate(0.000,0)" d="M4 1 L3 0 H1 L0 1.2 V5.8 L1 7 H3 L4 6"/></g>
<g transform="translate(1175.9,226.4) rotate(0) scale(1.0104,1.0000) translate(-4.800,-3.5)" fill="none" stroke="#008484" stroke-width="1.05" vector-effect="non-scaling-stroke" stroke-linecap="round" stroke-linejoin="round"><path transform="translate(0.000,0)" d="M4 1 L3 0 H1 L0 1.2 V5.8 L1 7 H3 L4 6"/><path transform="translate(5.600,0)" d="M3 7 V0 L0 5 H4"/></g>
<g transform="translate(1173.6,250.8) rotate(0) scale(1.1000,1.0000) translate(-2.000,-3.5)" fill="none" stroke="#008484" stroke-width="1.05" vector-effect="non-scaling-stroke" stroke-linecap="round" stroke-linejoin="round"><path transform="translate(0.000,0)" d="M4 1 L3 0 H1 L0 1.2 V5.8 L1 7 H3 L4 6"/></g>
<g transform="translate(1212.5,226.4) rotate(0) scale(1.1354,1.0000) translate(-4.800,-3.5)" fill="none" stroke="#008484" stroke-width="1.05" vector-effect="non-scaling-stroke" stroke-linecap="round" stroke-linejoin="round"><path transform="translate(0.000,0)" d="M4 1 L3 0 H1 L0 1.2 V5.8 L1 7 H3 L4 6"/><path transform="translate(5.600,0)" d="M4 0 H0 V3 H3 L4 4 V6 L3 7 H1 L0 6"/></g>
<g transform="translate(1209.5,250.4) rotate(0) scale(1.2250,1.0000) translate(-2.000,-3.5)" fill="none" stroke="#008484" stroke-width="1.05" vector-effect="non-scaling-stroke" stroke-linecap="round" stroke-linejoin="round"><path transform="translate(0.000,0)" d="M4 1 L3 0 H1 L0 1.2 V5.8 L1 7 H3 L4 6"/></g>
<g transform="translate(1239.5,238.8) rotate(-90) scale(1.1000,1.0000) translate(-2.000,-3.5)" fill="none" stroke="#008484" stroke-width="1.05" vector-effect="non-scaling-stroke" stroke-linecap="round" stroke-linejoin="round"><path transform="translate(0.000,0)" d="M0 7 V0 H3 L4 1 V2.5 L3 3.5 H0 M2 3.5 L4 7"/></g>
<g transform="translate(1249.6,239) rotate(-90) scale(1.0104,1.0000) translate(-4.800,-3.5)" fill="none" stroke="#008484" stroke-width="1.05" vector-effect="non-scaling-stroke" stroke-linecap="round" stroke-linejoin="round"><path transform="translate(0.000,0)" d="M0 7 V0 H3 L4 1 V2.5 L3 3.5 H0 M2 3.5 L4 7"/><path transform="translate(5.600,0)" d="M0 1 L1 0 H3 L4 1 V2.5 L2 4 V5 M2 6.6 V7"/></g>
<g transform="translate(1337,184.3) rotate(0) scale(0.8791,1.0000) translate(-4.550,-3.5)" fill="none" stroke="#008484" stroke-width="1.05" vector-effect="non-scaling-stroke" stroke-linecap="round" stroke-linejoin="round"><path transform="translate(0.000,0)" d="M1 0 H3.5 M3 0 V6 L2 7 H1 L0 6"/><path transform="translate(5.100,0)" d="M0 1 L1 0 H3 L4 1 V2.5 L0 7 H4"/></g>
<g transform="translate(1337,221) rotate(0) scale(1.0714,0.9143) translate(-25.200,-3.5)" fill="none" stroke="#008484" stroke-width="1.05" vector-effect="non-scaling-stroke" stroke-linecap="round" stroke-linejoin="round"><path transform="translate(0.000,0)" d="M4 1 L3 0 H1 L0 1.2 V5.8 L1 7 H3 L4 6"/><path transform="translate(5.600,0)" d="M0.8 3 H2.2 L3 4 V6 L2.2 7 H0.8 L0 6 V4 Z"/><path transform="translate(10.200,0)" d="M0 3 V7 M0 4 L0.8 3 H2.2 L3 4 V7"/><path transform="translate(14.800,0)" d="M0 3 V7 M0 4 L0.8 3 H2.2 L3 4 V7"/><path transform="translate(19.400,0)" d="M0 8 H5"/><path transform="translate(26.000,0)" d="M1 0 H3 L4 1 V6 L3 7 H1 L0 6 V1 Z"/><path transform="translate(31.600,0)" d="M0.3 1.4 L1.5 0 V7 M0 7 H3"/><path transform="translate(36.200,0)" d="M0 3 L3 7 M3 3 L0 7"/><path transform="translate(40.800,0)" d="M1 0 H3 L4 1 V6 L3 7 H1 L0 6 V1 Z"/><path transform="translate(46.400,0)" d="M0 1 L1 0 H3 L4 1 V2.5 L0 7 H4"/></g>
<g transform="translate(845.4,378.5) rotate(0) scale(1.1316,0.9000) translate(-7.600,-3.5)" fill="none" stroke="#008484" stroke-width="1.05" vector-effect="non-scaling-stroke" stroke-linecap="round" stroke-linejoin="round"><path transform="translate(0.000,0)" d="M4 1 L3 0 H1 L0 1.2 V5.8 L1 7 H3 L4 6 V4 H2"/><path transform="translate(5.600,0)" d="M0 7 V0 L4 7 V0"/><path transform="translate(11.200,0)" d="M0 0 V7 H2 L4 5 V2 L2 0 Z"/></g>
<g transform="translate(817.5,312) rotate(0) scale(1.2992,1.1429) translate(-12.700,-3.5)" fill="none" stroke="#008484" stroke-width="1.05" vector-effect="non-scaling-stroke" stroke-linecap="round" stroke-linejoin="round"><path transform="translate(0.000,0)" d="M4 0 H0 V7 M0 3.5 H3"/><path transform="translate(5.600,0)" d="M0 0 V7 H3 L4 6 V4.5 L3 3.5 H0 M0 0 H3 L4 1 V2.5 L3 3.5"/><path transform="translate(11.200,0)" d="M0 0 H4 L2 3 H3 L4 4 V6 L3 7 H1 L0 6"/><path transform="translate(16.800,0)" d="M1 0 H3 L4 1 V6 L3 7 H1 L0 6 V1 Z"/><path transform="translate(22.400,0)" d="M0.3 1.4 L1.5 0 V7 M0 7 H3"/></g>
<g transform="translate(799.5,314) rotate(0) scale(1.0)"><path d="M0 1 L1 0 L7 0 L9 2 L9 4 L8 6 L6 7 L4 8.5 L4 10" fill="none" stroke="#840000" stroke-width="1.25" stroke-linejoin="round"/><path d="M2.7 16.8 L5.3 16.8 M4 15.5 L4 18.1" stroke="#840000" stroke-width="1.15"/></g>
<path d="M1178.6 297.6 L1177.6 296.3 L1175.6 297.3 L1174.4 299.5 V301.4 L1175.6 303.6 L1177.6 304.7 L1179.2 303.6 L1179.5 301.5 M1182.4 304.7 V296.3 L1186.5 304.7 V296.8 M1190.5 296.3 V304.7 H1192 L1193.6 303.5 L1194.6 301.5 V299.5 L1193.6 297.5 L1192 296.3 Z M1197.5 297.6 L1199 296.3 H1200.6 L1201.6 297.5 L1202 298.5 L1198.6 302.6 L1197.2 304.7 H1201" fill="none" stroke="#000" stroke-width="1.25"/>
<path d="M1034.5 212.5 L1034.5 228.5 L1038.5 225 L1041.8 230.5 L1043.8 229.5 L1041 223.8 L1046 223.8 Z" fill="#fff" stroke="#000" stroke-width="1.1" stroke-linejoin="miter"/>
</svg>
<div id="dlg"><div id="title"></div></div>
<div id="ui">
<div class="t" style="left:27.2px;top:35.84px;font-size:12px;line-height:12px;color:#000;font-weight:400;letter-spacing:-0.178px;">Choose Symbol (9894 items loaded)</div>
<svg class="abs" style="left:782px;top:35px" width="12" height="12"><path d="M1 1 L11 11 M11 1 L1 11" stroke="#000" stroke-width="1.1" fill="none"/></svg>
<div class="abs" style="left:29px;top:67px;width:462px;height:21px;border:1px solid #7a7a7a;background:#fff"></div>
<div class="t" style="left:35.3px;top:71.84px;font-size:12px;line-height:12px;color:#000;font-weight:400;">c</div>
<div class="abs" style="left:29px;top:100px;width:462px;height:254px;border:1px solid #a0a3aa;background:#fff"></div>
<div class="t" style="left:37.5px;top:107.84px;font-size:12px;line-height:12px;color:#000;font-weight:400;transform:scaleX(0.9667);transform-origin:0 0;">Part</div>
<div class="t" style="left:325px;top:107.84px;font-size:12px;line-height:12px;color:#000;font-weight:400;transform:scaleX(0.9538);transform-origin:0 0;">Desc</div>
<div class="abs" style="left:318px;top:102px;width:1px;height:24px;background:#e5e5e5"></div>
<svg class="abs" style="left:171px;top:101px" width="10" height="7"><path d="M1.5 5.5 L5 2 L8.5 5.5" stroke="#555" stroke-width="1.1" fill="none"/></svg>
<div class="abs" style="left:30px;top:126px;width:445px;height:211px;overflow:hidden">
<div class="t" style="left:46.5px;top:4.84px;font-size:12px;line-height:12px;color:#000;font-weight:400;letter-spacing:-0.282px;">Battery_Cell</div>
<div class="t" style="left:292px;top:4.84px;font-size:12px;line-height:12px;color:#000;font-weight:400;letter-spacing:-0.022px;">single battery cell</div>
<div class="t" style="left:46.5px;top:26.84px;font-size:12px;line-height:12px;color:#000;font-weight:400;letter-spacing:-0.500px;">Buzzer</div>
<div class="t" style="left:292px;top:26.84px;font-size:12px;line-height:12px;color:#000;font-weight:400;letter-spacing:-0.192px;">Buzzer, polar</div>
<div class="abs" style="left:1px;top:44px;width:443px;height:22px;background:#0078d7"></div>
<div class="abs" style="left:1px;top:44px;width:460px;height:20px;border:1px dotted #f38a20"></div>
<div class="t" style="left:46.5px;top:48.84px;font-size:12px;line-height:12px;color:#fff;font-weight:400;">C</div>
<div class="t" style="left:292px;top:48.84px;font-size:12px;line-height:12px;color:#fff;font-weight:400;letter-spacing:0.000px;">Unpolarized capacitor</div>
<div class="t" style="left:46.5px;top:70.84px;font-size:12px;line-height:12px;color:#000;font-weight:400;transform:scaleX(0.8750);transform-origin:0 0;">CP</div>
<div class="t" style="left:292px;top:70.84px;font-size:12px;line-height:12px;color:#000;font-weight:400;letter-spacing:-0.089px;">Polarised capacitor</div>
<div class="t" style="left:46.5px;top:92.84px;font-size:12px;line-height:12px;color:#000;font-weight:400;transform:scaleX(0.8261);transform-origin:0 0;">CP1</div>
<div class="t" style="left:292px;top:92.84px;font-size:12px;line-height:12px;color:#000;font-weight:400;letter-spacing:-0.089px;">Polarised capacitor</div>
<div class="t" style="left:46.5px;top:114.84px;font-size:12px;line-height:12px;color:#000;font-weight:400;letter-spacing:-0.750px;">CP1_Small</div>
<div class="t" style="left:292px;top:114.84px;font-size:12px;line-height:12px;color:#000;font-weight:400;letter-spacing:-0.089px;">Polarised capacitor</div>
<div class="t" style="left:46.5px;top:136.84px;font-size:12px;line-height:12px;color:#000;font-weight:400;letter-spacing:-0.714px;">CP_Small</div>
<div class="t" style="left:292px;top:136.84px;font-size:12px;line-height:12px;color:#000;font-weight:400;letter-spacing:-0.089px;">Polarised capacitor</div>
<div class="t" style="left:46.5px;top:158.84px;font-size:12px;line-height:12px;color:#000;font-weight:400;letter-spacing:-0.500px;">CTRIM</div>
<div class="t" style="left:292px;top:158.84px;font-size:12px;line-height:12px;color:#000;font-weight:400;letter-spacing:0.083px;">Trimmable capacitor</div>
<div class="t" style="left:46.5px;top:180.84px;font-size:12px;line-height:12px;color:#000;font-weight:400;letter-spacing:-0.838px;">CTRIM_DIF</div>
<div class="t" style="left:292px;top:180.84px;font-size:12px;line-height:12px;color:#000;font-weight:400;letter-spacing:0.033px;">Differential variable capacitor</div>
<div class="t" style="left:46.5px;top:202.84px;font-size:12px;line-height:12px;color:#000;font-weight:400;letter-spacing:-0.250px;">C_Feedthrough</div>
<div class="t" style="left:292px;top:202.84px;font-size:12px;line-height:12px;color:#000;font-weight:400;letter-spacing:0.100px;">feedthrough capacitor</div>
</div>
<div class="abs" style="left:475px;top:102px;width:16px;height:235px;background:#f0f0f0"></div>
<div class="abs" style="left:475px;top:147px;width:15px;height:17px;background:#cdcdcd"></div>
<svg class="abs" style="left:477px;top:106px" width="12" height="10"><path d="M2.3 7.2 L5.8 3.4 L9.3 7.2" stroke="#606060" stroke-width="1.8" fill="none"/></svg>
<svg class="abs" style="left:477px;top:324px" width="12" height="10"><path d="M2.3 2.8 L5.8 6.6 L9.3 2.8" stroke="#606060" stroke-width="1.8" fill="none"/></svg>
<div class="abs" style="left:31px;top:338px;width:460px;height:16px;background:#f0f0f0"></div>
<div class="abs" style="left:48px;top:338px;width:118px;height:15px;background:#cdcdcd"></div>
<svg class="abs" style="left:34px;top:340px" width="10" height="12"><path d="M6.8 2.3 L3 5.8 L6.8 9.3" stroke="#606060" stroke-width="1.8" fill="none"/></svg>
<svg class="abs" style="left:461px;top:340px" width="10" height="12"><path d="M3.2 2.3 L7 5.8 L3.2 9.3" stroke="#606060" stroke-width="1.8" fill="none"/></svg>
<div class="abs" style="left:29px;top:366px;width:460px;height:252px;border-style:solid;border-width:2px;border-color:#a0a0a0 #fff #fff #a0a0a0;background:#fff"></div>
<div class="abs" style="left:30px;top:367px;width:460px;height:252px;border-style:solid;border-width:1px;border-color:#696969 #e3e3e3 #e3e3e3 #696969;box-sizing:border-box;width:462px;height:254px"></div>
<div class="t" style="left:41px;top:380.00px;font-size:13px;line-height:13px;color:#000;font-weight:400;">C</div>
<div class="t" style="left:41px;top:396.00px;font-size:13px;line-height:13px;color:#000;font-weight:400;">Unpolarized capacitor</div>
<div class="t" style="left:41px;top:412.00px;font-size:13px;line-height:13px;color:#000;font-weight:400;">Keywords: cap capacitor</div>
<div class="abs" style="left:41px;top:442px;width:441px;height:1px;background:#808080"></div>
<div class="t" style="left:46.5px;top:465.66px;font-size:13.4px;line-height:13.4px;color:#000;font-weight:700;-webkit-text-stroke:0">Reference</div>
<div class="t" style="left:119.5px;top:466.00px;font-size:13px;line-height:13px;color:#000;font-weight:400;">C?</div>
<div class="t" style="left:46.5px;top:489.66px;font-size:13.4px;line-height:13.4px;color:#000;font-weight:700;-webkit-text-stroke:0">Value</div>
<div class="t" style="left:119.5px;top:490.00px;font-size:13px;line-height:13px;color:#000;font-weight:400;">C</div>
<div class="t" style="left:46.5px;top:513.66px;font-size:13.4px;line-height:13.4px;color:#000;font-weight:700;-webkit-text-stroke:0">Footprint</div>
<div class="t" style="left:46.5px;top:537.66px;font-size:13.4px;line-height:13.4px;color:#000;font-weight:700;-webkit-text-stroke:0">Datasheet</div>
<div class="abs" style="left:507px;top:67px;width:282px;height:247px;border-style:solid;border-width:2px;border-color:#a0a0a0 #fff #fff #a0a0a0;background:#fff"></div>
<div class="abs" style="left:508px;top:68px;width:0px;height:0px;box-sizing:border-box;width:284px;height:249px;border-style:solid;border-width:1px;border-color:#696969 #e3e3e3 #e3e3e3 #696969"></div>
<svg class="abs" style="left:0;top:0" width="800" height="330"><g fill="none" stroke="#840000"><circle cx="650" cy="97.5" r="7.5" stroke-width="1"/><circle cx="650" cy="287" r="7.5" stroke-width="1"/><line x1="650" y1="96" x2="650" y2="168" stroke-width="4"/><line x1="650" y1="211" x2="650" y2="289" stroke-width="4"/><line x1="599.7" y1="173.5" x2="701.3" y2="173.5" stroke-width="13.4" stroke-linecap="round"/><line x1="599.7" y1="211.5" x2="701.3" y2="211.5" stroke-width="13.4" stroke-linecap="round"/></g><g fill="none" stroke="#008484" stroke-width="3.4" stroke-linejoin="round"><path d="M694 117.5 L694 115.3 L691.3 112.6 L680.5 112.6 L677.5 114.8 L674.8 118.8 L673.2 124.5 L673.2 130.5 L674.8 136.5 L677.5 140.5 L680.5 142.9 L691.3 142.9 L694 140.2 L694 138"/><path transform="translate(0,126)" d="M694 117.5 L694 115.3 L691.3 112.6 L680.5 112.6 L677.5 114.8 L674.8 118.8 L673.2 124.5 L673.2 130.5 L674.8 136.5 L677.5 140.5 L680.5 142.9 L691.3 142.9 L694 140.2 L694 138"/></g></svg>
<div class="abs" style="left:512px;top:333px;width:274px;height:21px;border:1px solid #adadad;background:#e1e1e1"></div>
<div class="t" style="left:517.3px;top:338.84px;font-size:12px;line-height:12px;color:#000;font-weight:400;letter-spacing:0.237px;">No default footprint</div>
<svg class="abs" style="left:773px;top:340px" width="12" height="8"><path d="M1.5 1.5 L6 6 L10.5 1.5" stroke="#404040" stroke-width="1.1" fill="none"/></svg>
<div class="abs" style="left:507px;top:371px;width:282px;height:247px;border-style:solid;border-width:2px;border-color:#a0a0a0 #fff #fff #a0a0a0;background:#000"></div>
<div class="abs" style="left:508px;top:372px;width:0px;height:0px;box-sizing:border-box;width:284px;height:249px;border-style:solid;border-width:1px;border-color:#696969 #e3e3e3 #e3e3e3 #696969"></div>
<div class="t" style="left:592.3px;top:489.84px;font-size:12px;line-height:12px;color:#fff;font-weight:400;letter-spacing:0.210px;">No footprint specified</div>
<div class="abs" style="left:616px;top:633px;width:84px;height:22px;border:1px solid #adadad;background:#e1e1e1"></div>
<div class="abs" style="left:712px;top:633px;width:84px;height:22px;border:1px solid #adadad;background:#e1e1e1"></div>
<div class="t" style="left:651.5px;top:638.84px;font-size:12px;line-height:12px;color:#000;font-weight:400;transform:scaleX(0.8824);transform-origin:0 0;">OK</div>
<div class="t" style="left:737px;top:638.84px;font-size:12px;line-height:12px;color:#000;font-weight:400;letter-spacing:-0.300px;">Cancel</div>
<div class="abs" style="left:798px;top:658px;width:2px;height:2px;background:#bcbcbc"></div>
<div class="abs" style="left:795px;top:661px;width:2px;height:2px;background:#bcbcbc"></div>
<div class="abs" style="left:798px;top:661px;width:2px;height:2px;background:#bcbcbc"></div>
<div class="abs" style="left:792px;top:664px;width:2px;height:2px;background:#bcbcbc"></div>
<div class="abs" style="left:795px;top:664px;width:2px;height:2px;background:#bcbcbc"></div>
<div class="abs" style="left:798px;top:664px;width:2px;height:2px;background:#bcbcbc"></div>
</div>

</body></html>
